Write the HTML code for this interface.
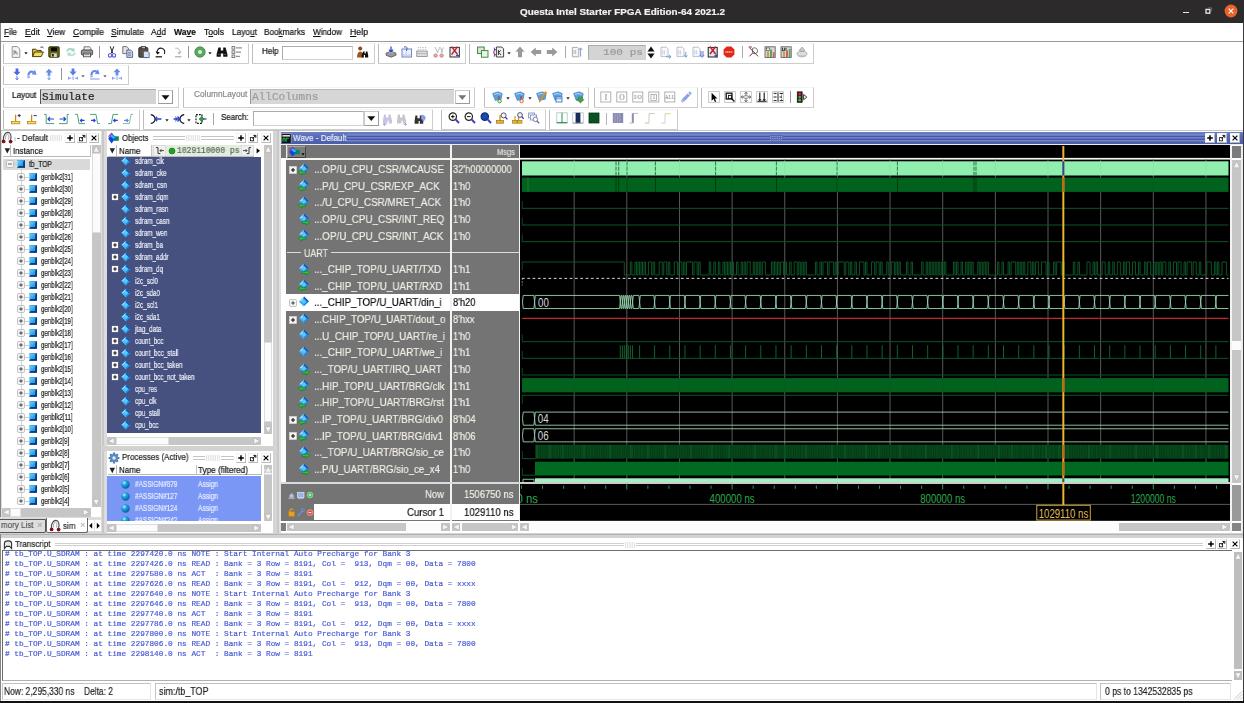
<!DOCTYPE html>
<html><head><meta charset="utf-8"><title>Questa Intel Starter FPGA Edition-64 2021.2</title>
<style>
html,body{margin:0;padding:0;background:#fff;}
#r{position:relative;width:1244px;height:703px;overflow:hidden;background:#fff;font-family:"Liberation Sans",sans-serif;}
#r div,#r svg,#r span.t{position:absolute;}
#r span.t{white-space:pre;transform-origin:0 50%;will-change:transform;-webkit-text-stroke:0.2px;}
u{text-decoration:underline;text-decoration-thickness:0.6px;text-underline-offset:1px;}
</style></head>
<body><div id="r">
<div style="left:0px;top:0px;width:1244px;height:703px;background:#ffffff;"></div>
<div style="left:0px;top:0px;width:1244px;height:22.5px;background:#2c2a2b;"></div>
<span class="t" style="left:519.50px;top:6.40px;font:bold 9.5px/11.40px 'Liberation Sans',sans-serif;color:#f2f2f2;transform:scaleX(1.0429);">Questa Intel Starter FPGA Edition-64 2021.2</span>
<div style="left:1182.5px;top:11.6px;width:6px;height:1.1px;background:#e8e8e8;"></div>
<svg style="left:1203px;top:5px;" width="12" height="12" viewBox="0 0 12 12"><rect x="3" y="4.400" width="3.800" height="3.800" fill="none" stroke="#e8e8e8" stroke-width="1.300"/><path d="M5 2.800h3.600v3.600" fill="none" stroke="#777" stroke-width="0.800"/></svg>
<svg style="left:1224px;top:4px;" width="14" height="14" viewBox="0 0 14 14"><circle cx="7" cy="7" r="6.4" fill="#e9632c"/><path d="M4.7 4.7l4.6 4.6M9.3 4.7l-4.6 4.6" stroke="#fff" stroke-width="1.1"/></svg>
<div style="left:1243.1px;top:22px;width:0.9px;height:681px;background:#3a3838;"></div>
<div style="left:0px;top:700.4px;width:1244px;height:2.6px;background:#111;"></div>
<span class="t" style="left:4.00px;top:26.84px;font:8.6px/10.32px 'Liberation Sans',sans-serif;color:#111;transform:scaleX(0.9381);"><u>F</u>ile</span>
<span class="t" style="left:25.00px;top:26.84px;font:8.6px/10.32px 'Liberation Sans',sans-serif;color:#111;transform:scaleX(1.0122);"><u>E</u>dit</span>
<span class="t" style="left:47.00px;top:26.84px;font:8.6px/10.32px 'Liberation Sans',sans-serif;color:#111;transform:scaleX(0.9737);"><u>V</u>iew</span>
<span class="t" style="left:73.00px;top:26.84px;font:8.6px/10.32px 'Liberation Sans',sans-serif;color:#111;transform:scaleX(0.9827);"><u>C</u>ompile</span>
<span class="t" style="left:111.00px;top:26.84px;font:8.6px/10.32px 'Liberation Sans',sans-serif;color:#111;transform:scaleX(0.9862);"><u>S</u>imulate</span>
<span class="t" style="left:151.00px;top:26.84px;font:8.6px/10.32px 'Liberation Sans',sans-serif;color:#111;transform:scaleX(0.9802);">A<u>d</u>d</span>
<span class="t" style="left:174.00px;top:26.84px;font:bold 8.6px/10.32px 'Liberation Sans',sans-serif;color:#111;transform:scaleX(0.9934);">Wa<u>v</u>e</span>
<span class="t" style="left:204.00px;top:26.84px;font:8.6px/10.32px 'Liberation Sans',sans-serif;color:#111;">T<u>o</u>ols</span>
<span class="t" style="left:232.00px;top:26.84px;font:8.6px/10.32px 'Liberation Sans',sans-serif;color:#111;transform:scaleX(0.9682);">Layo<u>u</u>t</span>
<span class="t" style="left:264.00px;top:26.84px;font:8.6px/10.32px 'Liberation Sans',sans-serif;color:#111;transform:scaleX(0.9532);">Boo<u>k</u>marks</span>
<span class="t" style="left:313.00px;top:26.84px;font:8.6px/10.32px 'Liberation Sans',sans-serif;color:#111;transform:scaleX(0.9481);"><u>W</u>indow</span>
<span class="t" style="left:350.00px;top:26.84px;font:8.6px/10.32px 'Liberation Sans',sans-serif;color:#111;transform:scaleX(1.0177);"><u>H</u>elp</span>
<div style="left:0px;top:41px;width:1243px;height:1px;background:#9a9a9a;"></div>
<div style="left:0px;top:22.5px;width:1.2px;height:678px;background:#8a8484;"></div>
<div style="left:3px;top:43px;width:245.6px;height:20.6px;background:#ffffff;box-sizing:border-box;border-right:1.4px solid #cdcdcd;border-bottom:1.6px solid #cdcdcd;border-top:1px solid #f4f4f4;"></div>
<div style="left:3.2px;top:44px;width:1px;height:18.6px;background:#bdbdbd;"></div>
<svg style="left:7.6px;top:44.0px;" width="16" height="16" viewBox="0 0 16 16"><path d="M4.2 2.6h5.2l2.4 2.4v8.4H4.2z" fill="#f4f4f4" stroke="#8a8a8a" stroke-width="0.9"/><path d="M6 6v5M6 8.2h3v2.8M7.4 6.6v3" stroke="#777" stroke-width="0.8" fill="none"/></svg>
<svg style="left:30.0px;top:44.0px;" width="16" height="16" viewBox="0 0 16 16"><path d="M2.6 12.6V5.2h3.2l1 1.2h4.4v1.6" fill="#d8c040" stroke="#3a3000" stroke-width="0.9"/><path d="M2.6 12.6l2-4.6h8.8l-2.2 4.6z" fill="#f0dc60" stroke="#3a3000" stroke-width="0.9"/><path d="M10.5 3.4c1.2-.8 2.4-.4 2.8.8" stroke="#222" stroke-width="0.9" fill="none"/></svg>
<svg style="left:46.0px;top:44.0px;" width="16" height="16" viewBox="0 0 16 16"><rect x="2.8" y="2.8" width="10.4" height="10.4" rx="0.8" fill="#6b6a14" stroke="#2a2a00" stroke-width="0.9"/><rect x="4.8" y="3.4" width="6.4" height="4" fill="#0a0a0a"/><rect x="5.2" y="9.4" width="5.6" height="3.6" fill="#d8d8c0"/><rect x="6" y="10" width="1.8" height="2.6" fill="#222"/></svg>
<svg style="left:62.5px;top:44.0px;" width="16" height="16" viewBox="0 0 16 16"><path d="M3.2 7.4c.6-3 4.2-4.2 6.8-2.6l1-1.4.8 4.2-4.2-.4 1.2-1.2c-1.6-.8-3.4-.2-4 1.6z" fill="#9fd4bc"/><path d="M12.8 8.8c-.6 3-4.2 4.2-6.8 2.6l-1 1.4-.8-4.2 4.2.4-1.2 1.2c1.6.8 3.4.2 4-1.6z" fill="#b4dccc"/></svg>
<svg style="left:78.5px;top:44.0px;" width="16" height="16" viewBox="0 0 16 16"><path d="M5 6V2.8h5.4L12 4.4V6" fill="#eee" stroke="#555" stroke-width="0.8"/><rect x="2.4" y="6" width="11.2" height="5" rx="1.2" fill="#9a9a9a" stroke="#3a3a3a" stroke-width="0.9"/><rect x="4.4" y="9.2" width="7.2" height="3.6" fill="#e8e8e8" stroke="#444" stroke-width="0.8"/><path d="M5.4 10.6h5" stroke="#666" stroke-width="0.7"/></svg>
<svg style="left:103.8px;top:44.0px;" width="16" height="16" viewBox="0 0 16 16"><path d="M6.2 2.4l2.6 7M9.8 2.4l-2.6 7" stroke="#222" stroke-width="1" fill="none"/><circle cx="6" cy="11.4" r="1.7" fill="none" stroke="#5a5ae0" stroke-width="1.1"/><circle cx="10" cy="11.4" r="1.7" fill="none" stroke="#5a5ae0" stroke-width="1.1"/></svg>
<svg style="left:119.6px;top:44.0px;" width="16" height="16" viewBox="0 0 16 16"><path d="M2.8 2.6h4l1.6 1.6v5.4H2.8z" fill="#e4e4e4" stroke="#555" stroke-width="0.8"/><path d="M6.8 6h4l1.8 1.8v5.6H6.8z" fill="#c8d4f4" stroke="#44507a" stroke-width="0.8"/><path d="M8 8.6h3M8 10h3M8 11.4h3" stroke="#667" stroke-width="0.6"/></svg>
<svg style="left:135.6px;top:44.0px;" width="16" height="16" viewBox="0 0 16 16"><rect x="2.8" y="3.6" width="9" height="9.6" rx="0.8" fill="#5a5040" stroke="#222" stroke-width="0.9"/><rect x="5.2" y="2.4" width="4.2" height="2.4" fill="#bbb" stroke="#222" stroke-width="0.7"/><path d="M7.4 7.2h4.2l1.6 1.6v4.8H7.4z" fill="#d8e0f8" stroke="#44507a" stroke-width="0.8"/></svg>
<svg style="left:152.8px;top:44.0px;" width="16" height="16" viewBox="0 0 16 16"><path d="M4.4 9.6C3 6 6 3.6 8.8 4.2c2.6.6 3.8 3.4 2.4 5.8" fill="none" stroke="#111" stroke-width="1.1"/><path d="M2.6 7.2l1.8 3.2 2.6-2z" fill="#111"/><path d="M2.6 12.8h6.4" stroke="#111" stroke-width="1.2"/></svg>
<svg style="left:168.4px;top:44.0px;" width="16" height="16" viewBox="0 0 16 16"><path d="M11.6 9.6C13 6 10 3.6 7.2 4.2" fill="none" stroke="#aaa" stroke-width="0.9"/><path d="M13.4 7.2l-1.8 3.2-2.6-2z" fill="#bbb"/><path d="M7 12.8h6.4" stroke="#999" stroke-width="1"/></svg>
<svg style="left:191.8px;top:44.0px;" width="16" height="16" viewBox="0 0 16 16"><circle cx="8" cy="8" r="5.2" fill="#5aa860" stroke="#3c8a48" stroke-width="0.8"/><circle cx="8" cy="8" r="2" fill="#d8f0d8"/></svg>
<svg style="left:213.8px;top:44.0px;" width="16" height="16" viewBox="0 0 16 16"><path d="M4.4 3.6h2.4v3h2.4v-3h2.4l1.8 6.6v2.6H9.2V9.6H6.8v3.2H2.6v-2.6z" fill="#111"/><path d="M4 10.4h1.6M10.4 10.4H12" stroke="#999" stroke-width="0.7"/></svg>
<svg style="left:229.0px;top:44.0px;" width="16" height="16" viewBox="0 0 16 16"><rect x="3" y="2.6" width="2.8" height="2.6" fill="#eee" stroke="#666" stroke-width="0.8"/><rect x="3" y="6.8" width="2.8" height="2.6" fill="#eee" stroke="#666" stroke-width="0.8"/><rect x="3" y="11" width="2.8" height="2.6" fill="#eee" stroke="#666" stroke-width="0.8"/><path d="M7 3.9h6M7 8.1h5M7 12.3h4" stroke="#666" stroke-width="0.9"/></svg>
<svg style="left:18.3px;top:45.0px;" width="16" height="16" viewBox="0 0 16 16"><path d="M6.3 7.2h3.4L8 9.4z" fill="#222"/></svg>
<svg style="left:202.0px;top:45.0px;" width="16" height="16" viewBox="0 0 16 16"><path d="M6.3 7.2h3.4L8 9.4z" fill="#222"/></svg>
<div style="left:99.0px;top:46.0px;width:1.2px;height:12px;background:#969696;"></div>
<div style="left:188.0px;top:46.0px;width:1.2px;height:12px;background:#969696;"></div>
<div style="left:252px;top:43px;width:122.5px;height:20.6px;background:#ffffff;box-sizing:border-box;border-right:1.4px solid #cdcdcd;border-bottom:1.6px solid #cdcdcd;border-top:1px solid #f4f4f4;"></div>
<div style="left:252.2px;top:44px;width:1px;height:18.6px;background:#bdbdbd;"></div>
<span class="t" style="left:261.50px;top:47.08px;font:8.2px/9.84px 'Liberation Sans',sans-serif;color:#111;transform:scaleX(0.9784);">Help</span>
<div style="left:281.5px;top:45.6px;width:71px;height:14px;background:#fff;box-sizing:border-box;border:1px solid #d0d0d0;border-top-color:#ababab;border-left-color:#ababab;"></div>
<svg style="left:354.0px;top:44.0px;" width="16" height="16" viewBox="0 0 16 16"><circle cx="6.2" cy="4.4" r="2" fill="#8a4a1a"/><path d="M3 13.4c0-4 1.4-6 3.2-6s3.2 2 3.2 6z" fill="#a0551c"/><path d="M9 7.4h1.6v2h1.2v-2h1.6l.8 4v2H11v-2.4H9.8v2.4H7.6v-2z" fill="#111"/></svg>
<div style="left:378px;top:43px;width:87.5px;height:20.6px;background:#ffffff;box-sizing:border-box;border-right:1.4px solid #cdcdcd;border-bottom:1.6px solid #cdcdcd;border-top:1px solid #f4f4f4;"></div>
<div style="left:378.2px;top:44px;width:1px;height:18.6px;background:#bdbdbd;"></div>
<svg style="left:382.8px;top:44.0px;" width="16" height="16" viewBox="0 0 16 16"><path d="M3 9.2l5-2 5 2-5 2z" fill="#bbb" stroke="#555" stroke-width="0.8"/><path d="M3 9.2v2l5 2 5-2v-2" fill="#999" stroke="#555" stroke-width="0.8"/><path d="M8 2.4v5M6 5.6l2 2.2 2-2.2" stroke="#2d4ac8" stroke-width="1.3" fill="none"/></svg>
<svg style="left:398.6px;top:44.0px;" width="16" height="16" viewBox="0 0 16 16"><rect x="3" y="5" width="9.6" height="8" fill="#eef2fc" stroke="#5a7ac8" stroke-width="0.9"/><path d="M5 3.2c1.6-1.2 3.4 0 3 1.6L7.4 7M7.2 8.6v.6" stroke="#3a5ac0" stroke-width="1" fill="none"/><path d="M3.4 11h9" stroke="#9ab" stroke-width="0.7"/></svg>
<svg style="left:414.4px;top:44.0px;" width="16" height="16" viewBox="0 0 16 16"><rect x="2.8" y="7" width="10.4" height="5.4" fill="#dcdce4" stroke="#888" stroke-width="0.8"/><path d="M4.4 3v3M6.8 3v3M9.2 3v3M11.6 3v3" stroke="#99a" stroke-width="0.8" stroke-dasharray="1 0.8"/><path d="M3 9.6h10" stroke="#aaa" stroke-width="0.7"/></svg>
<svg style="left:430.6px;top:44.0px;" width="16" height="16" viewBox="0 0 16 16"><path d="M4 3l3 6M9 3L6 9M9.4 3.4l2.4 5.4M12.4 3.4L10 8.8" stroke="#aaa" stroke-width="0.8"/><circle cx="4.6" cy="11.6" r="1.7" fill="#e8b0b0" stroke="#c06060" stroke-width="0.7"/><circle cx="10.6" cy="11.6" r="1.7" fill="#e8b0b0" stroke="#c06060" stroke-width="0.7"/></svg>
<svg style="left:446.6px;top:44.0px;" width="16" height="16" viewBox="0 0 16 16"><rect x="3" y="3.4" width="9.4" height="9.6" fill="#e8ecf8" stroke="#333" stroke-width="1"/><path d="M4.6 2.6l6 8M10.6 2.6l-6 8" stroke="#c02020" stroke-width="1.5"/><path d="M9 11.6h3.6" stroke="#3050c0" stroke-width="1.2"/></svg>
<div style="left:468.5px;top:43px;width:345.0px;height:20.6px;background:#ffffff;box-sizing:border-box;border-right:1.4px solid #cdcdcd;border-bottom:1.6px solid #cdcdcd;border-top:1px solid #f4f4f4;"></div>
<div style="left:468.7px;top:44px;width:1px;height:18.6px;background:#bdbdbd;"></div>
<svg style="left:475.0px;top:44.0px;" width="16" height="16" viewBox="0 0 16 16"><rect x="2.6" y="3" width="6.6" height="6.6" fill="#d4e8d4" stroke="#3a7a3a" stroke-width="0.9"/><rect x="6.4" y="6.6" width="6.6" height="6.6" fill="#e8f4e8" stroke="#3a7a3a" stroke-width="0.9"/></svg>
<svg style="left:491.0px;top:44.0px;" width="16" height="16" viewBox="0 0 16 16"><path d="M5.4 3h5.4l1.8 1.8V13H5.4z" fill="#f0f0f0" stroke="#333" stroke-width="0.9"/><path d="M7.4 6v5M7.4 8.4l2.4-2M7.8 8.4l2.2 2.6" stroke="#222" stroke-width="0.9"/><path d="M4 5.6c-1.6 1.6-1.6 3.6 0 5.2" stroke="#c02020" stroke-width="1.1" fill="none"/><path d="M3.2 3.6l.4 2.4 2-.8M3.2 12.8l.4-2.4 2 .8" stroke="#2040c0" stroke-width="0.9" fill="none"/></svg>
<svg style="left:512.0px;top:44.0px;" width="16" height="16" viewBox="0 0 16 16"><path d="M8 2.6l4.6 5.2H10v5.4H6V7.8H3.4z" fill="#9a9a9a"/></svg>
<svg style="left:528.0px;top:44.0px;" width="16" height="16" viewBox="0 0 16 16"><path d="M2.6 8l5.2-4.6V6h5.4v4H7.8v2.6z" fill="#9a9a9a"/></svg>
<svg style="left:544.0px;top:44.0px;" width="16" height="16" viewBox="0 0 16 16"><path d="M13.4 8L8.2 3.4V6H2.8v4h5.4v2.6z" fill="#9a9a9a"/></svg>
<svg style="left:569.0px;top:44.0px;" width="16" height="16" viewBox="0 0 16 16"><path d="M3.4 3.4h5l1.4 1.4v8H3.4z" fill="#f4f4f4" stroke="#999" stroke-width="0.8"/><path d="M5 6v4M6.6 6v4" stroke="#aaa" stroke-width="0.7"/><path d="M11.6 12.6V4M10 6l1.6-2.2L13.2 6" stroke="#8aa0d0" stroke-width="1" fill="none"/></svg>
<svg style="left:658.0px;top:44.0px;" width="16" height="16" viewBox="0 0 16 16"><path d="M3 3.2h5.4l1.6 1.6v7.6H3z" fill="#fafafc" stroke="#a8aec4" stroke-width="0.8"/><path d="M4.8 6v4.4M6.4 6.4v4" stroke="#b4bace" stroke-width="0.7"/><path d="M8 12.8h5M11 11l2 1.8-2 1.6" stroke="#6a8ad8" stroke-width="0.9" fill="none"/></svg>
<svg style="left:674.0px;top:44.0px;" width="16" height="16" viewBox="0 0 16 16"><path d="M3 3.2h5.4l1.6 1.6v7.6H3z" fill="#fafafc" stroke="#a8aec4" stroke-width="0.8"/><path d="M4.8 6v4.4M6.4 6.4v4" stroke="#b4bace" stroke-width="0.7"/><path d="M11.8 8v5M10.4 11.4l1.4 1.8 1.4-1.8" stroke="#6a8ad8" stroke-width="0.9" fill="none"/></svg>
<svg style="left:690.0px;top:44.0px;" width="16" height="16" viewBox="0 0 16 16"><path d="M3 3.2h5.4l1.6 1.6v7.6H3z" fill="#fafafc" stroke="#a8aec4" stroke-width="0.8"/><path d="M4.8 6v4.4M6.4 6.4v4" stroke="#b4bace" stroke-width="0.7"/><path d="M11 7v5.4M13 7v5.4M9.8 11l2.2 2.4 2.2-2.4" stroke="#4a6ad0" stroke-width="0.9" fill="none"/></svg>
<svg style="left:705.0px;top:44.0px;" width="16" height="16" viewBox="0 0 16 16"><rect x="3.2" y="3.4" width="9" height="9.6" fill="#e0e4f0" stroke="#222" stroke-width="1"/><path d="M5 2.6l5.6 7.4M10.6 2.6L5 10" stroke="#c02020" stroke-width="1.5"/><path d="M9.4 11.8h3.2M11 10.2v3.2" stroke="#2040c0" stroke-width="1"/></svg>
<svg style="left:720.5px;top:44.0px;" width="16" height="16" viewBox="0 0 16 16"><path d="M5.6 2.6h4.8l3 3v4.8l-3 3H5.6l-3-3V5.600z" fill="#e02818"/><path d="M4.4 8h7.2" stroke="#f8c8c0" stroke-width="1.6" stroke-dasharray="1.2 0.5"/></svg>
<svg style="left:746.0px;top:44.0px;" width="16" height="16" viewBox="0 0 16 16"><path d="M3.4 3.6l8.8 8.8M3.4 12.4l3.4-3.6" stroke="#7a2a2a" stroke-width="1" fill="none"/><path d="M6.6 4.4c2.6-1.6 5.6.6 4.8 3.400-.6 2-3.400 2.400-4.800 1z" fill="none" stroke="#555" stroke-width="0.9"/><path d="M2.8 3h3" stroke="#7a2a2a" stroke-width="1"/></svg>
<svg style="left:762.0px;top:44.0px;" width="16" height="16" viewBox="0 0 16 16"><rect x="3" y="2.8" width="10.200" height="10.600" fill="#d8d8d0" stroke="#555" stroke-width="0.8"/><rect x="4.4" y="4" width="3" height="2.6" fill="#fff" stroke="#333" stroke-width="0.6"/><rect x="5" y="7.4" width="2" height="5.6" fill="#c8a040"/><rect x="8" y="5.6" width="2" height="7.4" fill="#60a060"/><rect x="10.800" y="8.200" width="1.800" height="4.800" fill="#d06060"/></svg>
<svg style="left:778.0px;top:44.0px;" width="16" height="16" viewBox="0 0 16 16"><rect x="3" y="2.8" width="10.200" height="10.600" fill="#d8d8d0" stroke="#555" stroke-width="0.8"/><path d="M4.4 3.8v3h2v-3M8 3.800v3" stroke="#222" stroke-width="0.9" fill="none"/><rect x="5" y="8" width="2" height="5" fill="#c8a040"/><rect x="8" y="6.400" width="2" height="6.600" fill="#d06060"/><rect x="10.800" y="5" width="1.800" height="8" fill="#60a060"/></svg>
<svg style="left:793.5px;top:44.0px;" width="16" height="16" viewBox="0 0 16 16"><path d="M5 6.400l3-3.400 3 3.400H9.400v1.400H6.600V6.400z" fill="#c8c8c8" stroke="#999" stroke-width="0.6"/><ellipse cx="8" cy="9.800" rx="5" ry="2.400" fill="#dcdcdc" stroke="#999" stroke-width="0.7"/><path d="M4 11.400c1.400 2 6.600 2 8 0" stroke="#aaa" stroke-width="0.800" fill="none"/></svg>
<svg style="left:500.5px;top:45.0px;" width="16" height="16" viewBox="0 0 16 16"><path d="M6.3 7.2h3.4L8 9.4z" fill="#222"/></svg>
<div style="left:565.0px;top:46.0px;width:1.2px;height:12px;background:#a8a8a8;"></div>
<div style="left:742.0px;top:46.0px;width:1.2px;height:12px;background:#a8a8a8;"></div>
<div style="left:587.5px;top:45.4px;width:58px;height:14.4px;background:#d4d4d4;box-sizing:border-box;border:1px solid #d0d0d0;border-top-color:#ababab;border-left-color:#ababab;"></div>
<span class="t" style="left:603.00px;top:46.88px;font:9.2px/11.04px 'Liberation Mono',monospace;color:#9a9a9a;transform:scaleX(1.2076);">100 ps</span>
<svg style="left:645.5px;top:45px;" width="10" height="15" viewBox="0 0 10 15"><path d="M5 1.600l3.600 5H1.400z" fill="#111"/><path d="M5 13.600l3.600-5H1.400z" fill="#111"/><path d="M1 7.500h8" stroke="#fff" stroke-width="0.6"/></svg>
<div style="left:3px;top:65px;width:125.6px;height:20.400000000000006px;background:#ffffff;box-sizing:border-box;border-right:1.4px solid #cdcdcd;border-bottom:1.6px solid #cdcdcd;border-top:1px solid #f4f4f4;"></div>
<div style="left:3.2px;top:66px;width:1px;height:18.400000000000006px;background:#bdbdbd;"></div>
<svg style="left:9.0px;top:66.4px;" width="16" height="16" viewBox="0 0 16 16"><path d="M6.600 2.600h2.800v3.200h2.200L8 9.600 4.400 5.800h2.200z" fill="#4a6ae0"/><path d="M8 10v3.600M6.600 12.200l1.400 1.600 1.400-1.600" stroke="#4a6ae0" stroke-width="0.9" fill="none"/></svg>
<svg style="left:24.0px;top:66.4px;" width="16" height="16" viewBox="0 0 16 16"><path d="M3.400 9.600C3.400 5.600 7 3.400 10 5.200l1-1.400 1.600 5-5-.4 1.200-1.400C7 6 5.600 7.400 5.600 9.600z" fill="#6a8ae8"/><rect x="3.400" y="9.800" width="2.400" height="2.400" fill="#9ab0f0"/></svg>
<svg style="left:40.5px;top:66.4px;" width="16" height="16" viewBox="0 0 16 16"><path d="M6.600 9.800h2.800V6.600h2.200L8 2.800 4.400 6.600h2.200z" fill="#6a8ae8"/><path d="M8 10.200v3.400M6.600 12.200l1.400 1.600 1.400-1.600" stroke="#6a8ae8" stroke-width="0.9" fill="none"/></svg>
<svg style="left:65.0px;top:66.4px;" width="16" height="16" viewBox="0 0 16 16"><path d="M6.600 2.400h2.800v3.200h2.200L8 9.400 4.400 5.600h2.200z" fill="#5a7ae4"/><path d="M3.600 12.200h2.600M9.800 12.200h2.600M8 10.400v3.400M3.600 10.800v2.800M12.400 10.800v2.800" stroke="#7a96ec" stroke-width="1" fill="none"/></svg>
<svg style="left:87.0px;top:66.4px;" width="16" height="16" viewBox="0 0 16 16"><path d="M3.400 9C3.400 5 7 2.800 10 4.600l1-1.400 1.600 5-5-.4L8.800 6.400C7 5.400 5.600 6.800 5.600 9z" fill="#6a8ae8"/><rect x="3.400" y="9.200" width="2.400" height="2.200" fill="#9ab0f0"/><path d="M3 13h9.600" stroke="#7a96ec" stroke-width="1"/></svg>
<svg style="left:109.0px;top:66.4px;" width="16" height="16" viewBox="0 0 16 16"><path d="M6.600 9.400h2.800V6.200h2.200L8 2.400 4.400 6.200h2.200z" fill="#6a8ae8"/><path d="M3.600 12.200h2.600M9.800 12.200h2.600M8 10.400v3.400M3.600 10.800v2.800M12.400 10.800v2.800" stroke="#7a96ec" stroke-width="1" fill="none"/></svg>
<div style="left:60.5px;top:68.4px;width:1.2px;height:12px;background:#969696;"></div>
<svg style="left:74.5px;top:67.6px;" width="16" height="16" viewBox="0 0 16 16"><path d="M6.3 7.2h3.4L8 9.4z" fill="#666"/></svg>
<svg style="left:96.5px;top:67.6px;" width="16" height="16" viewBox="0 0 16 16"><path d="M6.3 7.2h3.4L8 9.4z" fill="#666"/></svg>
<div style="left:3px;top:87px;width:175.5px;height:20.599999999999994px;background:#ffffff;box-sizing:border-box;border-right:1.4px solid #cdcdcd;border-bottom:1.6px solid #cdcdcd;border-top:1px solid #f4f4f4;"></div>
<div style="left:3.2px;top:88px;width:1px;height:18.599999999999994px;background:#bdbdbd;"></div>
<span class="t" style="left:12.00px;top:89.76px;font:8.4px/10.08px 'Liberation Sans',sans-serif;color:#111;transform:scaleX(0.9714);">Layout</span>
<div style="left:40px;top:89.4px;width:115.5px;height:15px;background:#d4d4d4;box-sizing:border-box;border-left:1px solid #555;border-top:1px solid #aaa;"></div>
<span class="t" style="left:42.00px;top:90.96px;font:10.4px/12.48px 'Liberation Mono',monospace;color:#222;transform:scaleX(1.0515);">Simulate</span>
<div style="left:157.5px;top:89.6px;width:15px;height:14.6px;background:#fff;box-sizing:border-box;border:1px solid #c8c8c8;border-bottom-color:#9a9a9a;border-right-color:#9a9a9a;"></div>
<svg style="left:157.5px;top:89.6px;" width="15" height="14.6" viewBox="0 0 15 14.6"><path d="M3.5 5.3h8l-4 4.600z" fill="#111"/></svg>
<div style="left:183px;top:87px;width:291.5px;height:20.599999999999994px;background:#ffffff;box-sizing:border-box;border-right:1.4px solid #cdcdcd;border-bottom:1.6px solid #cdcdcd;border-top:1px solid #f4f4f4;"></div>
<div style="left:183.2px;top:88px;width:1px;height:18.599999999999994px;background:#bdbdbd;"></div>
<span class="t" style="left:194.00px;top:89.88px;font:8.2px/9.84px 'Liberation Sans',sans-serif;color:#8a8a8a;transform:scaleX(1.0118);">ColumnLayout</span>
<div style="left:250px;top:89.4px;width:203.5px;height:15px;background:#d6d6d6;box-sizing:border-box;border-left:1px solid #999;border-top:1px solid #bbb;"></div>
<span class="t" style="left:251.50px;top:90.96px;font:10.4px/12.48px 'Liberation Mono',monospace;color:#9c9c9c;transform:scaleX(1.0656);">AllColumns</span>
<div style="left:455px;top:89.6px;width:14.5px;height:14.6px;background:#fff;box-sizing:border-box;border:1px solid #c8c8c8;border-bottom-color:#9a9a9a;border-right-color:#9a9a9a;"></div>
<svg style="left:455px;top:89.6px;" width="14.5" height="14.6" viewBox="0 0 14.5 14.6"><path d="M3.25 5.3h8l-4 4.600z" fill="#777"/></svg>
<div style="left:484px;top:87px;width:105px;height:20.599999999999994px;background:#ffffff;box-sizing:border-box;border-right:1.4px solid #cdcdcd;border-bottom:1.6px solid #cdcdcd;border-top:1px solid #f4f4f4;"></div>
<div style="left:484.2px;top:88px;width:1px;height:18.599999999999994px;background:#bdbdbd;"></div>
<svg style="left:489.5px;top:88.5px;" width="16" height="16" viewBox="0 0 16 16"><path d="M2.600 4.400l5.600-1.600 4 1.800-1 5.600-6 1.200z" fill="#5aa0e0" stroke="#3a78c0" stroke-width="0.6"/><path d="M4 5.400l4-1 2.800 1.200" stroke="#b8dcf8" stroke-width="0.9" fill="none"/><path d="M9 7v4" stroke="#c03020" stroke-width="1.1"/><circle cx="9.600" cy="12.200" r="1.700" fill="#e8f8e8" stroke="#3a9a3a" stroke-width="1"/></svg>
<svg style="left:511.5px;top:88.5px;" width="16" height="16" viewBox="0 0 16 16"><path d="M2.600 4.400l5.600-1.600 4 1.800-1 5.600-6 1.200z" fill="#5aa0e0" stroke="#3a78c0" stroke-width="0.6"/><path d="M4 5.400l4-1 2.800 1.200" stroke="#b8dcf8" stroke-width="0.9" fill="none"/><path d="M9 7v4" stroke="#c03020" stroke-width="1.1"/><circle cx="9.600" cy="12.200" r="1.700" fill="#fce8d8" stroke="#e07030" stroke-width="1"/></svg>
<svg style="left:534.0px;top:88.5px;" width="16" height="16" viewBox="0 0 16 16"><path d="M2.600 4.400l5.600-1.600 4 1.800-1 5.600-6 1.200z" fill="#5aa0e0" stroke="#3a78c0" stroke-width="0.6"/><path d="M4 5.400l4-1 2.800 1.200" stroke="#b8dcf8" stroke-width="0.9" fill="none"/><path d="M12.600 3.400L7 11.600l-1.600 1.600.4-2.400L11.400 2.600z" fill="#f0a830" stroke="#b87010" stroke-width="0.6"/></svg>
<svg style="left:550.0px;top:88.5px;" width="16" height="16" viewBox="0 0 16 16"><path d="M2.600 4.400l5.600-1.600 4 1.800-1 5.600-6 1.200z" fill="#5aa0e0" stroke="#3a78c0" stroke-width="0.6"/><path d="M4 5.400l4-1 2.800 1.200" stroke="#b8dcf8" stroke-width="0.9" fill="none"/><rect x="6" y="8" width="6" height="5" fill="#f4f8fc" stroke="#3a78c0" stroke-width="0.9"/><path d="M6 9.800h6" stroke="#3a78c0" stroke-width="0.8"/></svg>
<svg style="left:571.0px;top:88.5px;" width="16" height="16" viewBox="0 0 16 16"><path d="M2.600 4.400l5.600-1.600 4 1.800-1 5.600-6 1.200z" fill="#5aa0e0" stroke="#3a78c0" stroke-width="0.6"/><path d="M4 5.400l4-1 2.800 1.200" stroke="#b8dcf8" stroke-width="0.9" fill="none"/><path d="M7.400 8h4v2.400h1.800L9.400 14 5.600 10.400h1.800z" fill="#48a048" stroke="#2a7a2a" stroke-width="0.5"/></svg>
<svg style="left:500.0px;top:90.0px;" width="16" height="16" viewBox="0 0 16 16"><path d="M6.3 7.2h3.4L8 9.4z" fill="#222"/></svg>
<svg style="left:522.0px;top:90.0px;" width="16" height="16" viewBox="0 0 16 16"><path d="M6.3 7.2h3.4L8 9.4z" fill="#222"/></svg>
<svg style="left:559.5px;top:90.0px;" width="16" height="16" viewBox="0 0 16 16"><path d="M6.3 7.2h3.4L8 9.4z" fill="#222"/></svg>
<div style="left:594px;top:87px;width:103.5px;height:20.599999999999994px;background:#ffffff;box-sizing:border-box;border-right:1.4px solid #cdcdcd;border-bottom:1.6px solid #cdcdcd;border-top:1px solid #f4f4f4;"></div>
<div style="left:594.2px;top:88px;width:1px;height:18.599999999999994px;background:#bdbdbd;"></div>
<svg style="left:597.5px;top:88.5px;" width="16" height="16" viewBox="0 0 16 16"><rect x="2.800" y="3" width="10" height="10" fill="#fff" stroke="#a8a8a8" stroke-width="0.9"/><text x="7.800" y="10.72" font-family="Liberation Serif,serif" font-size="8" fill="#7c7c7c" text-anchor="middle">I</text></svg>
<svg style="left:613.5px;top:88.5px;" width="16" height="16" viewBox="0 0 16 16"><rect x="2.800" y="3" width="10" height="10" fill="#fff" stroke="#a8a8a8" stroke-width="0.9"/><text x="7.800" y="10.52" font-family="Liberation Serif,serif" font-size="7.4" fill="#7c7c7c" text-anchor="middle">O</text></svg>
<svg style="left:629.5px;top:88.5px;" width="16" height="16" viewBox="0 0 16 16"><rect x="2.800" y="3" width="10" height="10" fill="#fff" stroke="#a8a8a8" stroke-width="0.9"/><text x="7.800" y="9.97" font-family="Liberation Serif,serif" font-size="5.8" fill="#7c7c7c" text-anchor="middle">I/O</text></svg>
<svg style="left:645.5px;top:88.5px;" width="16" height="16" viewBox="0 0 16 16"><rect x="2.800" y="3" width="10" height="10" fill="#fff" stroke="#a8a8a8" stroke-width="0.9"/><rect x="5" y="5.400" width="5.600" height="6" fill="none" stroke="#999" stroke-width="0.7"/><text x="7.800" y="10.400" font-family="Liberation Serif,serif" font-size="6.400" fill="#7c7c7c" text-anchor="middle">1</text></svg>
<svg style="left:661.5px;top:88.5px;" width="16" height="16" viewBox="0 0 16 16"><rect x="2.800" y="3" width="10" height="10" fill="#fff" stroke="#a8a8a8" stroke-width="0.9"/><text x="7.800" y="9.77" font-family="Liberation Serif,serif" font-size="5.2" fill="#7c7c7c" text-anchor="middle">ALL</text></svg>
<svg style="left:678.0px;top:88.5px;" width="16" height="16" viewBox="0 0 16 16"><path d="M11.800 2.800l1.600 1.600-6.400 7-2.600 1.800-1.200-1 1.800-2.800z" fill="#8aa4e8" stroke="#6a84d0" stroke-width="0.5"/><path d="M10 4l2 2" stroke="#dde6fa" stroke-width="1.100"/><circle cx="4.400" cy="12" r="1.300" fill="#b8c8f0"/></svg>
<div style="left:701px;top:87px;width:113px;height:20.599999999999994px;background:#ffffff;box-sizing:border-box;border-right:1.4px solid #cdcdcd;border-bottom:1.6px solid #cdcdcd;border-top:1px solid #f4f4f4;"></div>
<div style="left:701.2px;top:88px;width:1px;height:18.599999999999994px;background:#bdbdbd;"></div>
<svg style="left:705.5px;top:88.5px;" width="16" height="16" viewBox="0 0 16 16"><rect x="2.600" y="2.600" width="10.800" height="10.800" fill="#fff" stroke="#c4c4c4" stroke-width="0.9"/><path d="M5.600 3.800v8l2-1.800 1.400 3 1.200-.6-1.400-2.800h2.600z" fill="#000"/></svg>
<svg style="left:722.0px;top:88.5px;" width="16" height="16" viewBox="0 0 16 16"><rect x="2.600" y="2.600" width="10.800" height="10.800" fill="#fff" stroke="#c4c4c4" stroke-width="0.9"/><rect x="4.200" y="4.200" width="5.800" height="5.800" fill="none" stroke="#111" stroke-width="1.300"/><rect x="6.400" y="6.400" width="3" height="3" fill="none" stroke="#111" stroke-width="0.9"/><path d="M9.600 9.600l2.800 2.800" stroke="#111" stroke-width="1.400"/></svg>
<svg style="left:738.0px;top:88.5px;" width="16" height="16" viewBox="0 0 16 16"><rect x="2.600" y="2.600" width="10.800" height="10.800" fill="#fff" stroke="#c4c4c4" stroke-width="0.9"/><path d="M8 3.400v9.200M3.400 8h9.200" stroke="#555" stroke-width="0.9"/><path d="M6.600 4.800L8 3.200l1.400 1.600M6.600 11.200L8 12.800l1.400-1.600M4.800 6.600L3.200 8l1.600 1.400M11.200 6.600L12.800 8l-1.600 1.400" stroke="#555" stroke-width="0.9" fill="none"/><ellipse cx="8" cy="8" rx="2.600" ry="1.600" fill="#ddd" stroke="#777" stroke-width="0.6"/></svg>
<svg style="left:754.0px;top:88.5px;" width="16" height="16" viewBox="0 0 16 16"><rect x="2.600" y="2.600" width="10.800" height="10.800" fill="#fff" stroke="#c4c4c4" stroke-width="0.9"/><path d="M5.800 3.400v8M10.200 3.400v8M3.400 12.200h9.200" stroke="#111" stroke-width="1.100"/><path d="M4.600 10l1.200 1.800L7 10M9 10l1.200 1.800 1.200-1.800" stroke="#111" stroke-width="0.8" fill="none"/></svg>
<svg style="left:770.0px;top:88.5px;" width="16" height="16" viewBox="0 0 16 16"><rect x="2.600" y="2.600" width="10.800" height="10.800" fill="#fff" stroke="#c4c4c4" stroke-width="0.9"/><path d="M3.600 4.400h3M3.600 8h3M3.600 11.600h3M8 3.400v9.400M9.600 4.400h3.400M9.600 8h2.400M9.600 11.600h3.400" stroke="#222" stroke-width="1"/><path d="M11.600 4.400v7.200" stroke="#222" stroke-width="0.8" stroke-dasharray="1 1"/></svg>
<svg style="left:794.0px;top:88.5px;" width="16" height="16" viewBox="0 0 16 16"><rect x="3.200" y="2.800" width="5" height="10.600" fill="#222" stroke="#111" stroke-width="0.6"/><circle cx="5.700" cy="5" r="1.400" fill="#e02020"/><circle cx="5.700" cy="8.100" r="1.300" fill="#886"/><circle cx="5.700" cy="11.200" r="1.400" fill="#30c030"/><path d="M9.600 5.400l3.200 2.700-3.200 2.700z" fill="none" stroke="#222" stroke-width="0.9"/></svg>
<div style="left:790.0px;top:90.5px;width:1.2px;height:12px;background:#969696;"></div>
<div style="left:3px;top:108.6px;width:137.3px;height:21.0px;background:#ffffff;box-sizing:border-box;border-right:1.4px solid #cdcdcd;border-bottom:1.6px solid #cdcdcd;border-top:1px solid #f4f4f4;"></div>
<div style="left:3.2px;top:109.6px;width:1px;height:19.0px;background:#bdbdbd;"></div>
<svg style="left:8.0px;top:110.5px;" width="16" height="16" viewBox="0 0 16 16"><path d="M7.600 3.600v7" stroke="#c89010" stroke-width="1.300"/><rect x="3.400" y="10.400" width="8.400" height="2.400" fill="#f4d878" stroke="#c08a10" stroke-width="0.800"/><path d="M9.600 4.600h3.200M11.200 3v3.200" stroke="#222" stroke-width="0.9"/></svg>
<svg style="left:23.5px;top:110.5px;" width="16" height="16" viewBox="0 0 16 16"><path d="M7.600 3.600v7" stroke="#c89010" stroke-width="1.300"/><rect x="3.400" y="10.400" width="8.400" height="2.400" fill="#f4d878" stroke="#c08a10" stroke-width="0.800"/><path d="M9.600 4.600h3.200" stroke="#222" stroke-width="0.9"/></svg>
<svg style="left:40.5px;top:110.5px;" width="16" height="16" viewBox="0 0 16 16"><path d="M3 3.400h2.200v9.200h8" stroke="#3a9a6a" stroke-width="0.9" fill="none"/><path d="M13 8H7M9 6L7 8l2 2" stroke="#2a40d0" stroke-width="1.100" fill="none"/></svg>
<svg style="left:55.5px;top:110.5px;" width="16" height="16" viewBox="0 0 16 16"><path d="M3 12.600h8.200V3.400H13" stroke="#3a9a6a" stroke-width="0.9" fill="none"/><path d="M3.600 8h6M7.600 6l2 2-2 2" stroke="#2a40d0" stroke-width="1.100" fill="none"/></svg>
<svg style="left:72.0px;top:110.5px;" width="16" height="16" viewBox="0 0 16 16"><path d="M3 3.400h2.400l1.600 9.200h6" stroke="#3a9a6a" stroke-width="0.9" fill="none"/><path d="M12.600 9.400H8.400M10 7.800L8.400 9.400 10 11" stroke="#2a40d0" stroke-width="1.100" fill="none"/></svg>
<svg style="left:87.0px;top:110.5px;" width="16" height="16" viewBox="0 0 16 16"><path d="M3 3.400h6l1.600 9.200h2.400" stroke="#3a9a6a" stroke-width="0.9" fill="none"/><path d="M4 9.400h4.200M6.600 7.800l1.600 1.600L6.600 11" stroke="#2a40d0" stroke-width="1.100" fill="none"/></svg>
<svg style="left:104.5px;top:110.5px;" width="16" height="16" viewBox="0 0 16 16"><path d="M3 12.600h3.400L8 3.400h5" stroke="#3a9a6a" stroke-width="0.9" fill="none"/><path d="M12.800 9.400H8.600M10.200 7.800L8.600 9.400l1.600 1.600" stroke="#2a40d0" stroke-width="1.100" fill="none"/></svg>
<svg style="left:119.5px;top:110.5px;" width="16" height="16" viewBox="0 0 16 16"><path d="M3 12.600h6.400L11 3.400h2" stroke="#3a9a6a" stroke-width="0.9" fill="none" opacity="0.7"/><path d="M4 9.400h4.200M6.600 7.800l1.600 1.600L6.600 11" stroke="#6a80e0" stroke-width="1.100" fill="none"/></svg>
<div style="left:143px;top:108.6px;width:289.5px;height:21.0px;background:#ffffff;box-sizing:border-box;border-right:1.4px solid #cdcdcd;border-bottom:1.6px solid #cdcdcd;border-top:1px solid #f4f4f4;"></div>
<div style="left:143.2px;top:109.6px;width:1px;height:19.0px;background:#bdbdbd;"></div>
<svg style="left:148.0px;top:110.5px;" width="16" height="16" viewBox="0 0 16 16"><path d="M2.800 3.600c3 .4 4 2 4.400 4.400-.4 2.400-1.400 4-4.400 4.400" fill="none" stroke="#111" stroke-width="1.200"/><path d="M13.400 8H7M9.200 5.800L7 8l2.200 2.200" stroke="#2a40d0" stroke-width="1.300" fill="none"/></svg>
<svg style="left:158.5px;top:111.5px;" width="16" height="16" viewBox="0 0 16 16"><path d="M6.3 7.2h3.4L8 9.4z" fill="#222"/></svg>
<svg style="left:171.0px;top:110.5px;" width="16" height="16" viewBox="0 0 16 16"><path d="M13.200 3.600c-3 .4-4 2-4.400 4.400.4 2.400 1.400 4 4.400 4.400" fill="none" stroke="#111" stroke-width="1.200"/><path d="M2.600 8H9M6.800 5.800L9 8l-2.200 2.200" stroke="#2a40d0" stroke-width="1.300" fill="none"/><path d="M4.400 5.400l2 5.200M6.400 5.400l-2 5.200" stroke="#2a40d0" stroke-width="0.7"/></svg>
<svg style="left:180.5px;top:111.5px;" width="16" height="16" viewBox="0 0 16 16"><path d="M6.3 7.2h3.4L8 9.4z" fill="#222"/></svg>
<svg style="left:192.5px;top:110.5px;" width="16" height="16" viewBox="0 0 16 16"><rect x="3" y="3.600" width="6" height="8.800" fill="none" stroke="#111" stroke-width="1.200" stroke-dasharray="1.800 1.200"/><path d="M10 8h3.600" stroke="#2a40d0" stroke-width="1.200" fill="none"/><path d="M8.600 5.400L11.200 8l-2.600 2.600L6 8z" fill="#30a040" stroke="#0a5a1a" stroke-width="0.500"/></svg>
<div style="left:213.0px;top:112.5px;width:1.2px;height:12px;background:#a8a8a8;"></div>
<span class="t" style="left:221.00px;top:111.76px;font:8.4px/10.08px 'Liberation Sans',sans-serif;color:#111;transform:scaleX(0.9499);">Search:</span>
<div style="left:253px;top:110.8px;width:110.5px;height:15px;background:#fff;box-sizing:border-box;border:1px solid #d0d0d0;border-top-color:#ababab;border-left-color:#ababab;"></div>
<div style="left:364px;top:111px;width:14.5px;height:14.6px;background:#fff;box-sizing:border-box;border:1px solid #c8c8c8;border-bottom-color:#9a9a9a;border-right-color:#9a9a9a;"></div>
<svg style="left:364px;top:111px;" width="14.5" height="14.6" viewBox="0 0 14.5 14.6"><path d="M3.25 5.3h8l-4 4.600z" fill="#111"/></svg>
<svg style="left:380.0px;top:110.5px;" width="16" height="16" viewBox="0 0 16 16"><path d="M4 3.600h2v3h2.400v-3h2l1.600 6v3H8.800V9.800H7.400v2.800H3v-3z" fill="#c8c4e2"/><path d="M3.400 13.400h3M5 12l-1.600 1.400L5 14.800" stroke="#9a90d8" stroke-width="0.8" fill="none"/></svg>
<svg style="left:394.3px;top:110.5px;" width="16" height="16" viewBox="0 0 16 16"><path d="M4 3.600h2v3h2.400v-3h2l1.600 6v3H8.800V9.800H7.400v2.800H3v-3z" fill="#c6c6ce"/><path d="M9.600 13.400h3M11 12l1.600 1.400L11 14.800" stroke="#9a90d8" stroke-width="0.8" fill="none"/></svg>
<svg style="left:412.0px;top:110.5px;" width="16" height="16" viewBox="0 0 16 16"><path d="M3.400 4.600h2v2.600h2.400V4.600h2l1.400 5.400v2.800H7.800V10H6.600v2.800H2.600V10z" fill="#333"/><path d="M9.400 4.400c2.400-.8 4.200.8 3.800 3l-1.800 3.200-2.400-3.400" fill="#8aa0e8" stroke="#6a80d0" stroke-width="0.5"/></svg>
<div style="left:441px;top:108.6px;width:104.5px;height:21.0px;background:#ffffff;box-sizing:border-box;border-right:1.4px solid #cdcdcd;border-bottom:1.6px solid #cdcdcd;border-top:1px solid #f4f4f4;"></div>
<div style="left:441.2px;top:109.6px;width:1px;height:19.0px;background:#bdbdbd;"></div>
<svg style="left:446.0px;top:110.0px;" width="16" height="16" viewBox="0 0 16 16"><circle cx="6.800" cy="6.600" r="3.700" fill="#fff" stroke="#222" stroke-width="1.200"/><path d="M9.600 9.400l3.400 3.600" stroke="#3a3ac8" stroke-width="1.900"/><path d="M5 6.600h3.600M6.800 4.800v3.600" stroke="#111" stroke-width="1"/></svg>
<svg style="left:462.0px;top:110.0px;" width="16" height="16" viewBox="0 0 16 16"><circle cx="6.800" cy="6.600" r="3.700" fill="#fff" stroke="#222" stroke-width="1.200"/><path d="M9.600 9.400l3.400 3.600" stroke="#3a3ac8" stroke-width="1.900"/><path d="M5 6.600h3.600" stroke="#111" stroke-width="1"/></svg>
<svg style="left:478.0px;top:110.0px;" width="16" height="16" viewBox="0 0 16 16"><circle cx="6.800" cy="6.600" r="3.700" fill="#1a4ab0" stroke="#0a2a80" stroke-width="1.200"/><path d="M9.600 9.400l3.400 3.600" stroke="#3a3ac8" stroke-width="1.900"/></svg>
<svg style="left:494.0px;top:110.0px;" width="16" height="16" viewBox="0 0 16 16"><path d="M6 5v6" stroke="#c89010" stroke-width="1.300"/><rect x="2.600" y="10.600" width="7" height="2.600" fill="#e8b830" stroke="#a07008" stroke-width="0.7"/><circle cx="9.600" cy="5.400" r="2.500" fill="#f4f4ff" stroke="#445" stroke-width="0.9"/><path d="M11.400 7.200l2 2.200" stroke="#3a3ac8" stroke-width="1.400"/></svg>
<svg style="left:510.0px;top:110.0px;" width="16" height="16" viewBox="0 0 16 16"><path d="M5 6v5M8.600 6v5" stroke="#c89010" stroke-width="1.100"/><rect x="2.400" y="10.600" width="4.600" height="2.600" fill="#e8b830" stroke="#a07008" stroke-width="0.6"/><rect x="7.400" y="10.600" width="4.600" height="2.600" fill="#e8b830" stroke="#a07008" stroke-width="0.6"/><circle cx="10" cy="5" r="2.400" fill="#f4f4ff" stroke="#445" stroke-width="0.9"/><path d="M11.800 6.800l1.800 2" stroke="#3a3ac8" stroke-width="1.300"/></svg>
<svg style="left:526.0px;top:110.0px;" width="16" height="16" viewBox="0 0 16 16"><rect x="2.600" y="3" width="6" height="5" fill="#eef" stroke="#7a8ac0" stroke-width="0.8"/><rect x="4.600" y="5" width="6" height="5" fill="#f4f4ff" stroke="#7a8ac0" stroke-width="0.8"/><circle cx="9.400" cy="9.400" r="2.200" fill="#fff" stroke="#667" stroke-width="0.8"/><path d="M11 11l2.200 2.400" stroke="#5a5ad0" stroke-width="1.300"/></svg>
<div style="left:549px;top:108.6px;width:128.5px;height:21.0px;background:#ffffff;box-sizing:border-box;border-right:1.4px solid #cdcdcd;border-bottom:1.6px solid #cdcdcd;border-top:1px solid #f4f4f4;"></div>
<div style="left:549.2px;top:109.6px;width:1px;height:19.0px;background:#bdbdbd;"></div>
<svg style="left:554.0px;top:110.0px;" width="16" height="16" viewBox="0 0 16 16"><rect x="2.800" y="2.800" width="10.400" height="10.400" fill="#fff" stroke="#9ac0b0" stroke-width="0.7"/><path d="M8 2.800v10.400" stroke="#2a8a5a" stroke-width="1"/><path d="M2.800 12.600h10.400" stroke="#2a8a5a" stroke-width="1"/></svg>
<svg style="left:570.0px;top:110.0px;" width="16" height="16" viewBox="0 0 16 16"><rect x="2.800" y="2.800" width="10.400" height="10.400" fill="#fff" stroke="#aab" stroke-width="0.6"/><rect x="5.600" y="2.800" width="4.800" height="10.400" fill="#1a2a5a"/><path d="M2.800 13h10.400" stroke="#88a" stroke-width="0.8"/></svg>
<svg style="left:586.0px;top:110.0px;" width="16" height="16" viewBox="0 0 16 16"><rect x="3" y="3" width="10" height="10" fill="#0a5020" stroke="#063814" stroke-width="0.8"/></svg>
<svg style="left:610.0px;top:110.0px;" width="16" height="16" viewBox="0 0 16 16"><rect x="2.800" y="3" width="10.400" height="10" fill="#8a8ab0"/><path d="M5 3v10M7.400 3v10M9.800 3v10" stroke="#a4a4c8" stroke-width="0.8"/></svg>
<svg style="left:626.0px;top:110.0px;" width="16" height="16" viewBox="0 0 16 16"><path d="M3.600 13h3V3.400h5.600" stroke="#b0bcc8" stroke-width="0.9" fill="none"/><rect x="5.800" y="3.400" width="2" height="9.600" fill="#8890ac"/><path d="M3.600 13h3" stroke="#e0e090" stroke-width="1"/></svg>
<svg style="left:642.0px;top:110.0px;" width="16" height="16" viewBox="0 0 16 16"><path d="M3 13h4V3.600h5.600" stroke="#b8ccc0" stroke-width="0.9" fill="none"/><path d="M3 13h4" stroke="#dcdc98" stroke-width="0.9"/></svg>
<svg style="left:658.0px;top:110.0px;" width="16" height="16" viewBox="0 0 16 16"><path d="M3 13h4V3.600h5.600" stroke="#c4d4c4" stroke-width="0.9" fill="none"/><path d="M7 3.600h5.600" stroke="#e4e480" stroke-width="0.9"/></svg>
<div style="left:606.0px;top:112.5px;width:1.2px;height:12px;background:#b4b4b4;"></div>
<div style="left:1.2px;top:129.8px;width:1241.5px;height:404px;background:#dcdcdc;"></div>
<div style="left:102px;top:131px;width:2px;height:402px;background:#c8c8c8;"></div>
<div style="left:1.2px;top:129.6px;width:1241.5px;height:1.4px;background:#c6c6c6;"></div>
<div style="left:273px;top:131px;width:3.5px;height:402px;background:#d4d4d4;"></div>
<div style="left:101px;top:445.6px;width:172px;height:5.4px;background:#d2d2d2;"></div>
<div style="left:1.5px;top:131px;width:99.5px;height:402px;background:#fff;"></div>
<svg style="left:1px;top:131.1px;" width="12" height="13" viewBox="0 0 12 13"><path d="M2.400 9C2 4.400 4.600 1.200 7 1.400s3.800 3.200 2.600 7.600" fill="none" stroke="#4a4a4a" stroke-width="1.100"/><path d="M4.400 8.400C4.200 4.600 5.600 3 6.600 3.200s1.800 1.800 1 5.400" fill="none" stroke="#9a9aa4" stroke-width="0.900"/><circle cx="2.600" cy="10.400" r="1.900" fill="#7a1220"/><circle cx="9.600" cy="10.600" r="1.900" fill="#7a1220"/></svg>
<span class="t" style="left:17.00px;top:132.52px;font:8.8px/10.56px 'Liberation Sans',sans-serif;color:#222;transform:scaleX(0.9321);">- Default</span>
<div style="left:14px;top:137px;width:1.5px;height:4px;background:#cfe4ea;"></div>
<svg style="left:50px;top:134.5px;" width="12" height="6" viewBox="0 0 12 6"><path d="M0 1h12M0 3h12M0 5h12" stroke="#c0c0c8" stroke-width="0.9" stroke-dasharray="1.200 1"/></svg>
<div style="left:64.5px;top:132.5px;width:10px;height:10px;background:#fff;box-sizing:border-box;border:1px solid #f2f2f2;border-right-color:#b8b8b8;border-bottom-color:#b8b8b8;"></div>
<svg style="left:64.5px;top:132.5px;" width="10" height="10" viewBox="0 0 10 10"><path d="M5 2.200v5.600M2.200 5h5.600" stroke="#000" stroke-width="1.500"/></svg>
<div style="left:76.5px;top:132.5px;width:10px;height:10px;background:#fff;box-sizing:border-box;border:1px solid #f2f2f2;border-right-color:#b8b8b8;border-bottom-color:#b8b8b8;"></div>
<svg style="left:76.5px;top:132.5px;" width="10" height="10" viewBox="0 0 10 10"><rect x="2.400" y="4.600" width="3.200" height="3.200" fill="none" stroke="#222" stroke-width="0.9"/><path d="M4.600 5.600l3-3M5.400 2.400h2.400v2.400" stroke="#111" stroke-width="1" fill="none"/></svg>
<div style="left:89px;top:132.5px;width:10px;height:10px;background:#fff;box-sizing:border-box;border:1px solid #f2f2f2;border-right-color:#b8b8b8;border-bottom-color:#b8b8b8;"></div>
<svg style="left:89px;top:132.5px;" width="10" height="10" viewBox="0 0 10 10"><path d="M2.600 2.600l4.800 4.800M7.400 2.600l-4.800 4.800" stroke="#000" stroke-width="1.200"/></svg>
<div style="left:2.5px;top:145px;width:8.5px;height:11.5px;background:#fff;box-sizing:border-box;border-right:1px solid #bbb;border-bottom:1px solid #bbb;"></div>
<svg style="left:2.5px;top:145px;" width="8.5" height="11.5" viewBox="0 0 8.5 11.5"><path d="M1.600 3.15h5.400L4.300 8.55z" fill="#222"/></svg>
<div style="left:11px;top:145px;width:79.5px;height:11.5px;background:#fff;box-sizing:border-box;border-bottom:1px solid #b8b8b8;border-right:1px solid #c4c4c4;"></div>
<span class="t" style="left:13.00px;top:145.31px;font:9.4px/11.28px 'Liberation Sans',sans-serif;color:#111;transform:scaleX(0.8442);">Instance</span>
<div style="left:2px;top:157px;width:88.5px;height:350px;background:#fff;"></div>
<div style="left:2.5px;top:158.6px;width:87.5px;height:11.6px;background:#d9d9d9;"></div>
<div style="left:20.8px;top:170px;width:0.8px;height:334px;background:#d4d4d4;"></div>
<svg style="left:5.5px;top:160.4px;" width="8" height="8" viewBox="0 0 8 8"><rect x=".5" y=".5" width="7" height="7" rx="1.200" fill="#f4f4f4" stroke="#b4b4b4" stroke-width="0.800"/><path d="M2 4h4" stroke="#555" stroke-width="0.9"/></svg>
<div style="left:13.5px;top:164px;width:4px;height:0.8px;background:#ccc;"></div>
<svg style="left:16.5px;top:160.29999999999998px;" width="8.2" height="7.8" viewBox="0 0 9.400 9.400" preserveAspectRatio="none"><defs><linearGradient id="cg" x1="0" y1="0" x2="1" y2="1"><stop offset="0" stop-color="#7fd4ff"/><stop offset="0.55" stop-color="#2ea4ec"/><stop offset="1" stop-color="#1684d4"/></linearGradient></defs><path d="M0 .2h9.300v9H0z" fill="#0b3a84"/><path d="M0 .2h9.300L7.300 2v5.300L0 9.200z" fill="url(#cg)"/><path d="M0 9.200l2.200-1.900h5.100V2L9.300.2v9z" fill="#0b3a84"/><path d="M0 .2v9l1.200-1V1.200z" fill="#8adcff" opacity="0.700"/></svg>
<span class="t" style="left:29.00px;top:159.26px;font:8.4px/10.08px 'Liberation Sans',sans-serif;color:#222;transform:scaleX(0.7988);">tb_TOP</span>
<div style="left:25px;top:177.0px;width:5px;height:0.7px;background:#d0d0d0;"></div>
<svg style="left:16.8px;top:173.3px;" width="8" height="8" viewBox="0 0 8 8"><rect x=".5" y=".5" width="7" height="7" rx="1.200" fill="#f4f4f4" stroke="#b4b4b4" stroke-width="0.800"/><path d="M2.200 4h3.600M4 2.200v3.600" stroke="#333" stroke-width="0.9"/></svg>
<svg style="left:28.5px;top:173.20000000000002px;" width="8.2" height="7.8" viewBox="0 0 9.400 9.400" preserveAspectRatio="none"><defs><linearGradient id="cg" x1="0" y1="0" x2="1" y2="1"><stop offset="0" stop-color="#7fd4ff"/><stop offset="0.55" stop-color="#2ea4ec"/><stop offset="1" stop-color="#1684d4"/></linearGradient></defs><path d="M0 .2h9.300v9H0z" fill="#0b3a84"/><path d="M0 .2h9.300L7.300 2v5.300L0 9.200z" fill="url(#cg)"/><path d="M0 9.200l2.200-1.900h5.100V2L9.300.2v9z" fill="#0b3a84"/><path d="M0 .2v9l1.200-1V1.200z" fill="#8adcff" opacity="0.700"/></svg>
<span class="t" style="left:41.20px;top:172.46px;font:8.4px/10.08px 'Liberation Sans',sans-serif;color:#222;transform:scaleX(0.7321);">genblk2[31]</span>
<div style="left:25px;top:189.0px;width:5px;height:0.7px;background:#d0d0d0;"></div>
<svg style="left:16.8px;top:185.3px;" width="8" height="8" viewBox="0 0 8 8"><rect x=".5" y=".5" width="7" height="7" rx="1.200" fill="#f4f4f4" stroke="#b4b4b4" stroke-width="0.800"/><path d="M2.200 4h3.600M4 2.200v3.600" stroke="#333" stroke-width="0.9"/></svg>
<svg style="left:28.5px;top:185.20000000000002px;" width="8.2" height="7.8" viewBox="0 0 9.400 9.400" preserveAspectRatio="none"><defs><linearGradient id="cg" x1="0" y1="0" x2="1" y2="1"><stop offset="0" stop-color="#7fd4ff"/><stop offset="0.55" stop-color="#2ea4ec"/><stop offset="1" stop-color="#1684d4"/></linearGradient></defs><path d="M0 .2h9.300v9H0z" fill="#0b3a84"/><path d="M0 .2h9.300L7.300 2v5.300L0 9.200z" fill="url(#cg)"/><path d="M0 9.200l2.200-1.900h5.100V2L9.300.2v9z" fill="#0b3a84"/><path d="M0 .2v9l1.200-1V1.200z" fill="#8adcff" opacity="0.700"/></svg>
<span class="t" style="left:41.20px;top:184.46px;font:8.4px/10.08px 'Liberation Sans',sans-serif;color:#222;transform:scaleX(0.7321);">genblk2[30]</span>
<div style="left:25px;top:201.0px;width:5px;height:0.7px;background:#d0d0d0;"></div>
<svg style="left:16.8px;top:197.3px;" width="8" height="8" viewBox="0 0 8 8"><rect x=".5" y=".5" width="7" height="7" rx="1.200" fill="#f4f4f4" stroke="#b4b4b4" stroke-width="0.800"/><path d="M2.200 4h3.600M4 2.200v3.600" stroke="#333" stroke-width="0.9"/></svg>
<svg style="left:28.5px;top:197.20000000000002px;" width="8.2" height="7.8" viewBox="0 0 9.400 9.400" preserveAspectRatio="none"><defs><linearGradient id="cg" x1="0" y1="0" x2="1" y2="1"><stop offset="0" stop-color="#7fd4ff"/><stop offset="0.55" stop-color="#2ea4ec"/><stop offset="1" stop-color="#1684d4"/></linearGradient></defs><path d="M0 .2h9.300v9H0z" fill="#0b3a84"/><path d="M0 .2h9.300L7.300 2v5.300L0 9.200z" fill="url(#cg)"/><path d="M0 9.200l2.200-1.900h5.100V2L9.300.2v9z" fill="#0b3a84"/><path d="M0 .2v9l1.200-1V1.200z" fill="#8adcff" opacity="0.700"/></svg>
<span class="t" style="left:41.20px;top:196.46px;font:8.4px/10.08px 'Liberation Sans',sans-serif;color:#222;transform:scaleX(0.7321);">genblk2[29]</span>
<div style="left:25px;top:213.0px;width:5px;height:0.7px;background:#d0d0d0;"></div>
<svg style="left:16.8px;top:209.3px;" width="8" height="8" viewBox="0 0 8 8"><rect x=".5" y=".5" width="7" height="7" rx="1.200" fill="#f4f4f4" stroke="#b4b4b4" stroke-width="0.800"/><path d="M2.200 4h3.600M4 2.200v3.600" stroke="#333" stroke-width="0.9"/></svg>
<svg style="left:28.5px;top:209.20000000000002px;" width="8.2" height="7.8" viewBox="0 0 9.400 9.400" preserveAspectRatio="none"><defs><linearGradient id="cg" x1="0" y1="0" x2="1" y2="1"><stop offset="0" stop-color="#7fd4ff"/><stop offset="0.55" stop-color="#2ea4ec"/><stop offset="1" stop-color="#1684d4"/></linearGradient></defs><path d="M0 .2h9.300v9H0z" fill="#0b3a84"/><path d="M0 .2h9.300L7.300 2v5.300L0 9.200z" fill="url(#cg)"/><path d="M0 9.200l2.200-1.900h5.100V2L9.300.2v9z" fill="#0b3a84"/><path d="M0 .2v9l1.200-1V1.200z" fill="#8adcff" opacity="0.700"/></svg>
<span class="t" style="left:41.20px;top:208.46px;font:8.4px/10.08px 'Liberation Sans',sans-serif;color:#222;transform:scaleX(0.7321);">genblk2[28]</span>
<div style="left:25px;top:225.0px;width:5px;height:0.7px;background:#d0d0d0;"></div>
<svg style="left:16.8px;top:221.3px;" width="8" height="8" viewBox="0 0 8 8"><rect x=".5" y=".5" width="7" height="7" rx="1.200" fill="#f4f4f4" stroke="#b4b4b4" stroke-width="0.800"/><path d="M2.200 4h3.600M4 2.200v3.600" stroke="#333" stroke-width="0.9"/></svg>
<svg style="left:28.5px;top:221.20000000000002px;" width="8.2" height="7.8" viewBox="0 0 9.400 9.400" preserveAspectRatio="none"><defs><linearGradient id="cg" x1="0" y1="0" x2="1" y2="1"><stop offset="0" stop-color="#7fd4ff"/><stop offset="0.55" stop-color="#2ea4ec"/><stop offset="1" stop-color="#1684d4"/></linearGradient></defs><path d="M0 .2h9.300v9H0z" fill="#0b3a84"/><path d="M0 .2h9.300L7.300 2v5.300L0 9.200z" fill="url(#cg)"/><path d="M0 9.200l2.200-1.900h5.100V2L9.300.2v9z" fill="#0b3a84"/><path d="M0 .2v9l1.200-1V1.200z" fill="#8adcff" opacity="0.700"/></svg>
<span class="t" style="left:41.20px;top:220.46px;font:8.4px/10.08px 'Liberation Sans',sans-serif;color:#222;transform:scaleX(0.7321);">genblk2[27]</span>
<div style="left:25px;top:237.0px;width:5px;height:0.7px;background:#d0d0d0;"></div>
<svg style="left:16.8px;top:233.3px;" width="8" height="8" viewBox="0 0 8 8"><rect x=".5" y=".5" width="7" height="7" rx="1.200" fill="#f4f4f4" stroke="#b4b4b4" stroke-width="0.800"/><path d="M2.200 4h3.600M4 2.200v3.600" stroke="#333" stroke-width="0.9"/></svg>
<svg style="left:28.5px;top:233.20000000000002px;" width="8.2" height="7.8" viewBox="0 0 9.400 9.400" preserveAspectRatio="none"><defs><linearGradient id="cg" x1="0" y1="0" x2="1" y2="1"><stop offset="0" stop-color="#7fd4ff"/><stop offset="0.55" stop-color="#2ea4ec"/><stop offset="1" stop-color="#1684d4"/></linearGradient></defs><path d="M0 .2h9.300v9H0z" fill="#0b3a84"/><path d="M0 .2h9.300L7.300 2v5.300L0 9.200z" fill="url(#cg)"/><path d="M0 9.200l2.200-1.900h5.100V2L9.300.2v9z" fill="#0b3a84"/><path d="M0 .2v9l1.200-1V1.200z" fill="#8adcff" opacity="0.700"/></svg>
<span class="t" style="left:41.20px;top:232.46px;font:8.4px/10.08px 'Liberation Sans',sans-serif;color:#222;transform:scaleX(0.7321);">genblk2[26]</span>
<div style="left:25px;top:249.0px;width:5px;height:0.7px;background:#d0d0d0;"></div>
<svg style="left:16.8px;top:245.3px;" width="8" height="8" viewBox="0 0 8 8"><rect x=".5" y=".5" width="7" height="7" rx="1.200" fill="#f4f4f4" stroke="#b4b4b4" stroke-width="0.800"/><path d="M2.200 4h3.600M4 2.200v3.600" stroke="#333" stroke-width="0.9"/></svg>
<svg style="left:28.5px;top:245.20000000000002px;" width="8.2" height="7.8" viewBox="0 0 9.400 9.400" preserveAspectRatio="none"><defs><linearGradient id="cg" x1="0" y1="0" x2="1" y2="1"><stop offset="0" stop-color="#7fd4ff"/><stop offset="0.55" stop-color="#2ea4ec"/><stop offset="1" stop-color="#1684d4"/></linearGradient></defs><path d="M0 .2h9.300v9H0z" fill="#0b3a84"/><path d="M0 .2h9.300L7.300 2v5.300L0 9.200z" fill="url(#cg)"/><path d="M0 9.200l2.200-1.900h5.100V2L9.300.2v9z" fill="#0b3a84"/><path d="M0 .2v9l1.200-1V1.200z" fill="#8adcff" opacity="0.700"/></svg>
<span class="t" style="left:41.20px;top:244.46px;font:8.4px/10.08px 'Liberation Sans',sans-serif;color:#222;transform:scaleX(0.7321);">genblk2[25]</span>
<div style="left:25px;top:261.0px;width:5px;height:0.7px;background:#d0d0d0;"></div>
<svg style="left:16.8px;top:257.3px;" width="8" height="8" viewBox="0 0 8 8"><rect x=".5" y=".5" width="7" height="7" rx="1.200" fill="#f4f4f4" stroke="#b4b4b4" stroke-width="0.800"/><path d="M2.200 4h3.600M4 2.200v3.600" stroke="#333" stroke-width="0.9"/></svg>
<svg style="left:28.5px;top:257.20000000000005px;" width="8.2" height="7.8" viewBox="0 0 9.400 9.400" preserveAspectRatio="none"><defs><linearGradient id="cg" x1="0" y1="0" x2="1" y2="1"><stop offset="0" stop-color="#7fd4ff"/><stop offset="0.55" stop-color="#2ea4ec"/><stop offset="1" stop-color="#1684d4"/></linearGradient></defs><path d="M0 .2h9.300v9H0z" fill="#0b3a84"/><path d="M0 .2h9.300L7.300 2v5.300L0 9.200z" fill="url(#cg)"/><path d="M0 9.200l2.200-1.900h5.100V2L9.300.2v9z" fill="#0b3a84"/><path d="M0 .2v9l1.200-1V1.200z" fill="#8adcff" opacity="0.700"/></svg>
<span class="t" style="left:41.20px;top:256.46px;font:8.4px/10.08px 'Liberation Sans',sans-serif;color:#222;transform:scaleX(0.7321);">genblk2[24]</span>
<div style="left:25px;top:273.0px;width:5px;height:0.7px;background:#d0d0d0;"></div>
<svg style="left:16.8px;top:269.3px;" width="8" height="8" viewBox="0 0 8 8"><rect x=".5" y=".5" width="7" height="7" rx="1.200" fill="#f4f4f4" stroke="#b4b4b4" stroke-width="0.800"/><path d="M2.200 4h3.600M4 2.200v3.600" stroke="#333" stroke-width="0.9"/></svg>
<svg style="left:28.5px;top:269.20000000000005px;" width="8.2" height="7.8" viewBox="0 0 9.400 9.400" preserveAspectRatio="none"><defs><linearGradient id="cg" x1="0" y1="0" x2="1" y2="1"><stop offset="0" stop-color="#7fd4ff"/><stop offset="0.55" stop-color="#2ea4ec"/><stop offset="1" stop-color="#1684d4"/></linearGradient></defs><path d="M0 .2h9.300v9H0z" fill="#0b3a84"/><path d="M0 .2h9.300L7.300 2v5.300L0 9.200z" fill="url(#cg)"/><path d="M0 9.200l2.200-1.900h5.100V2L9.300.2v9z" fill="#0b3a84"/><path d="M0 .2v9l1.200-1V1.200z" fill="#8adcff" opacity="0.700"/></svg>
<span class="t" style="left:41.20px;top:268.46px;font:8.4px/10.08px 'Liberation Sans',sans-serif;color:#222;transform:scaleX(0.7321);">genblk2[23]</span>
<div style="left:25px;top:285.0px;width:5px;height:0.7px;background:#d0d0d0;"></div>
<svg style="left:16.8px;top:281.3px;" width="8" height="8" viewBox="0 0 8 8"><rect x=".5" y=".5" width="7" height="7" rx="1.200" fill="#f4f4f4" stroke="#b4b4b4" stroke-width="0.800"/><path d="M2.200 4h3.600M4 2.200v3.600" stroke="#333" stroke-width="0.9"/></svg>
<svg style="left:28.5px;top:281.20000000000005px;" width="8.2" height="7.8" viewBox="0 0 9.400 9.400" preserveAspectRatio="none"><defs><linearGradient id="cg" x1="0" y1="0" x2="1" y2="1"><stop offset="0" stop-color="#7fd4ff"/><stop offset="0.55" stop-color="#2ea4ec"/><stop offset="1" stop-color="#1684d4"/></linearGradient></defs><path d="M0 .2h9.300v9H0z" fill="#0b3a84"/><path d="M0 .2h9.300L7.300 2v5.300L0 9.200z" fill="url(#cg)"/><path d="M0 9.200l2.200-1.900h5.100V2L9.300.2v9z" fill="#0b3a84"/><path d="M0 .2v9l1.200-1V1.200z" fill="#8adcff" opacity="0.700"/></svg>
<span class="t" style="left:41.20px;top:280.46px;font:8.4px/10.08px 'Liberation Sans',sans-serif;color:#222;transform:scaleX(0.7321);">genblk2[22]</span>
<div style="left:25px;top:297.0px;width:5px;height:0.7px;background:#d0d0d0;"></div>
<svg style="left:16.8px;top:293.3px;" width="8" height="8" viewBox="0 0 8 8"><rect x=".5" y=".5" width="7" height="7" rx="1.200" fill="#f4f4f4" stroke="#b4b4b4" stroke-width="0.800"/><path d="M2.200 4h3.600M4 2.200v3.600" stroke="#333" stroke-width="0.9"/></svg>
<svg style="left:28.5px;top:293.20000000000005px;" width="8.2" height="7.8" viewBox="0 0 9.400 9.400" preserveAspectRatio="none"><defs><linearGradient id="cg" x1="0" y1="0" x2="1" y2="1"><stop offset="0" stop-color="#7fd4ff"/><stop offset="0.55" stop-color="#2ea4ec"/><stop offset="1" stop-color="#1684d4"/></linearGradient></defs><path d="M0 .2h9.300v9H0z" fill="#0b3a84"/><path d="M0 .2h9.300L7.300 2v5.300L0 9.200z" fill="url(#cg)"/><path d="M0 9.200l2.200-1.900h5.100V2L9.300.2v9z" fill="#0b3a84"/><path d="M0 .2v9l1.200-1V1.200z" fill="#8adcff" opacity="0.700"/></svg>
<span class="t" style="left:41.20px;top:292.46px;font:8.4px/10.08px 'Liberation Sans',sans-serif;color:#222;transform:scaleX(0.7321);">genblk2[21]</span>
<div style="left:25px;top:309.0px;width:5px;height:0.7px;background:#d0d0d0;"></div>
<svg style="left:16.8px;top:305.3px;" width="8" height="8" viewBox="0 0 8 8"><rect x=".5" y=".5" width="7" height="7" rx="1.200" fill="#f4f4f4" stroke="#b4b4b4" stroke-width="0.800"/><path d="M2.200 4h3.600M4 2.200v3.600" stroke="#333" stroke-width="0.9"/></svg>
<svg style="left:28.5px;top:305.20000000000005px;" width="8.2" height="7.8" viewBox="0 0 9.400 9.400" preserveAspectRatio="none"><defs><linearGradient id="cg" x1="0" y1="0" x2="1" y2="1"><stop offset="0" stop-color="#7fd4ff"/><stop offset="0.55" stop-color="#2ea4ec"/><stop offset="1" stop-color="#1684d4"/></linearGradient></defs><path d="M0 .2h9.300v9H0z" fill="#0b3a84"/><path d="M0 .2h9.300L7.300 2v5.300L0 9.200z" fill="url(#cg)"/><path d="M0 9.200l2.200-1.900h5.100V2L9.300.2v9z" fill="#0b3a84"/><path d="M0 .2v9l1.200-1V1.200z" fill="#8adcff" opacity="0.700"/></svg>
<span class="t" style="left:41.20px;top:304.46px;font:8.4px/10.08px 'Liberation Sans',sans-serif;color:#222;transform:scaleX(0.7321);">genblk2[20]</span>
<div style="left:25px;top:321.0px;width:5px;height:0.7px;background:#d0d0d0;"></div>
<svg style="left:16.8px;top:317.3px;" width="8" height="8" viewBox="0 0 8 8"><rect x=".5" y=".5" width="7" height="7" rx="1.200" fill="#f4f4f4" stroke="#b4b4b4" stroke-width="0.800"/><path d="M2.200 4h3.600M4 2.200v3.600" stroke="#333" stroke-width="0.9"/></svg>
<svg style="left:28.5px;top:317.20000000000005px;" width="8.2" height="7.8" viewBox="0 0 9.400 9.400" preserveAspectRatio="none"><defs><linearGradient id="cg" x1="0" y1="0" x2="1" y2="1"><stop offset="0" stop-color="#7fd4ff"/><stop offset="0.55" stop-color="#2ea4ec"/><stop offset="1" stop-color="#1684d4"/></linearGradient></defs><path d="M0 .2h9.300v9H0z" fill="#0b3a84"/><path d="M0 .2h9.300L7.300 2v5.300L0 9.200z" fill="url(#cg)"/><path d="M0 9.200l2.200-1.900h5.100V2L9.300.2v9z" fill="#0b3a84"/><path d="M0 .2v9l1.200-1V1.200z" fill="#8adcff" opacity="0.700"/></svg>
<span class="t" style="left:41.20px;top:316.46px;font:8.4px/10.08px 'Liberation Sans',sans-serif;color:#222;transform:scaleX(0.7321);">genblk2[19]</span>
<div style="left:25px;top:333.0px;width:5px;height:0.7px;background:#d0d0d0;"></div>
<svg style="left:16.8px;top:329.3px;" width="8" height="8" viewBox="0 0 8 8"><rect x=".5" y=".5" width="7" height="7" rx="1.200" fill="#f4f4f4" stroke="#b4b4b4" stroke-width="0.800"/><path d="M2.200 4h3.600M4 2.200v3.600" stroke="#333" stroke-width="0.9"/></svg>
<svg style="left:28.5px;top:329.20000000000005px;" width="8.2" height="7.8" viewBox="0 0 9.400 9.400" preserveAspectRatio="none"><defs><linearGradient id="cg" x1="0" y1="0" x2="1" y2="1"><stop offset="0" stop-color="#7fd4ff"/><stop offset="0.55" stop-color="#2ea4ec"/><stop offset="1" stop-color="#1684d4"/></linearGradient></defs><path d="M0 .2h9.300v9H0z" fill="#0b3a84"/><path d="M0 .2h9.300L7.300 2v5.300L0 9.200z" fill="url(#cg)"/><path d="M0 9.200l2.200-1.900h5.100V2L9.300.2v9z" fill="#0b3a84"/><path d="M0 .2v9l1.200-1V1.200z" fill="#8adcff" opacity="0.700"/></svg>
<span class="t" style="left:41.20px;top:328.46px;font:8.4px/10.08px 'Liberation Sans',sans-serif;color:#222;transform:scaleX(0.7321);">genblk2[18]</span>
<div style="left:25px;top:345.0px;width:5px;height:0.7px;background:#d0d0d0;"></div>
<svg style="left:16.8px;top:341.3px;" width="8" height="8" viewBox="0 0 8 8"><rect x=".5" y=".5" width="7" height="7" rx="1.200" fill="#f4f4f4" stroke="#b4b4b4" stroke-width="0.800"/><path d="M2.200 4h3.600M4 2.200v3.600" stroke="#333" stroke-width="0.9"/></svg>
<svg style="left:28.5px;top:341.20000000000005px;" width="8.2" height="7.8" viewBox="0 0 9.400 9.400" preserveAspectRatio="none"><defs><linearGradient id="cg" x1="0" y1="0" x2="1" y2="1"><stop offset="0" stop-color="#7fd4ff"/><stop offset="0.55" stop-color="#2ea4ec"/><stop offset="1" stop-color="#1684d4"/></linearGradient></defs><path d="M0 .2h9.300v9H0z" fill="#0b3a84"/><path d="M0 .2h9.300L7.300 2v5.300L0 9.200z" fill="url(#cg)"/><path d="M0 9.200l2.200-1.900h5.100V2L9.300.2v9z" fill="#0b3a84"/><path d="M0 .2v9l1.200-1V1.200z" fill="#8adcff" opacity="0.700"/></svg>
<span class="t" style="left:41.20px;top:340.46px;font:8.4px/10.08px 'Liberation Sans',sans-serif;color:#222;transform:scaleX(0.7321);">genblk2[17]</span>
<div style="left:25px;top:357.0px;width:5px;height:0.7px;background:#d0d0d0;"></div>
<svg style="left:16.8px;top:353.3px;" width="8" height="8" viewBox="0 0 8 8"><rect x=".5" y=".5" width="7" height="7" rx="1.200" fill="#f4f4f4" stroke="#b4b4b4" stroke-width="0.800"/><path d="M2.200 4h3.600M4 2.200v3.600" stroke="#333" stroke-width="0.9"/></svg>
<svg style="left:28.5px;top:353.20000000000005px;" width="8.2" height="7.8" viewBox="0 0 9.400 9.400" preserveAspectRatio="none"><defs><linearGradient id="cg" x1="0" y1="0" x2="1" y2="1"><stop offset="0" stop-color="#7fd4ff"/><stop offset="0.55" stop-color="#2ea4ec"/><stop offset="1" stop-color="#1684d4"/></linearGradient></defs><path d="M0 .2h9.300v9H0z" fill="#0b3a84"/><path d="M0 .2h9.300L7.300 2v5.300L0 9.200z" fill="url(#cg)"/><path d="M0 9.200l2.200-1.900h5.100V2L9.300.2v9z" fill="#0b3a84"/><path d="M0 .2v9l1.200-1V1.200z" fill="#8adcff" opacity="0.700"/></svg>
<span class="t" style="left:41.20px;top:352.46px;font:8.4px/10.08px 'Liberation Sans',sans-serif;color:#222;transform:scaleX(0.7321);">genblk2[16]</span>
<div style="left:25px;top:369.0px;width:5px;height:0.7px;background:#d0d0d0;"></div>
<svg style="left:16.8px;top:365.3px;" width="8" height="8" viewBox="0 0 8 8"><rect x=".5" y=".5" width="7" height="7" rx="1.200" fill="#f4f4f4" stroke="#b4b4b4" stroke-width="0.800"/><path d="M2.200 4h3.600M4 2.200v3.600" stroke="#333" stroke-width="0.9"/></svg>
<svg style="left:28.5px;top:365.20000000000005px;" width="8.2" height="7.8" viewBox="0 0 9.400 9.400" preserveAspectRatio="none"><defs><linearGradient id="cg" x1="0" y1="0" x2="1" y2="1"><stop offset="0" stop-color="#7fd4ff"/><stop offset="0.55" stop-color="#2ea4ec"/><stop offset="1" stop-color="#1684d4"/></linearGradient></defs><path d="M0 .2h9.300v9H0z" fill="#0b3a84"/><path d="M0 .2h9.300L7.300 2v5.300L0 9.200z" fill="url(#cg)"/><path d="M0 9.200l2.200-1.900h5.100V2L9.300.2v9z" fill="#0b3a84"/><path d="M0 .2v9l1.200-1V1.200z" fill="#8adcff" opacity="0.700"/></svg>
<span class="t" style="left:41.20px;top:364.46px;font:8.4px/10.08px 'Liberation Sans',sans-serif;color:#222;transform:scaleX(0.7321);">genblk2[15]</span>
<div style="left:25px;top:381.0px;width:5px;height:0.7px;background:#d0d0d0;"></div>
<svg style="left:16.8px;top:377.3px;" width="8" height="8" viewBox="0 0 8 8"><rect x=".5" y=".5" width="7" height="7" rx="1.200" fill="#f4f4f4" stroke="#b4b4b4" stroke-width="0.800"/><path d="M2.200 4h3.600M4 2.200v3.600" stroke="#333" stroke-width="0.9"/></svg>
<svg style="left:28.5px;top:377.20000000000005px;" width="8.2" height="7.8" viewBox="0 0 9.400 9.400" preserveAspectRatio="none"><defs><linearGradient id="cg" x1="0" y1="0" x2="1" y2="1"><stop offset="0" stop-color="#7fd4ff"/><stop offset="0.55" stop-color="#2ea4ec"/><stop offset="1" stop-color="#1684d4"/></linearGradient></defs><path d="M0 .2h9.300v9H0z" fill="#0b3a84"/><path d="M0 .2h9.300L7.300 2v5.300L0 9.200z" fill="url(#cg)"/><path d="M0 9.200l2.200-1.900h5.100V2L9.300.2v9z" fill="#0b3a84"/><path d="M0 .2v9l1.200-1V1.200z" fill="#8adcff" opacity="0.700"/></svg>
<span class="t" style="left:41.20px;top:376.46px;font:8.4px/10.08px 'Liberation Sans',sans-serif;color:#222;transform:scaleX(0.7321);">genblk2[14]</span>
<div style="left:25px;top:393.0px;width:5px;height:0.7px;background:#d0d0d0;"></div>
<svg style="left:16.8px;top:389.3px;" width="8" height="8" viewBox="0 0 8 8"><rect x=".5" y=".5" width="7" height="7" rx="1.200" fill="#f4f4f4" stroke="#b4b4b4" stroke-width="0.800"/><path d="M2.200 4h3.600M4 2.200v3.600" stroke="#333" stroke-width="0.9"/></svg>
<svg style="left:28.5px;top:389.20000000000005px;" width="8.2" height="7.8" viewBox="0 0 9.400 9.400" preserveAspectRatio="none"><defs><linearGradient id="cg" x1="0" y1="0" x2="1" y2="1"><stop offset="0" stop-color="#7fd4ff"/><stop offset="0.55" stop-color="#2ea4ec"/><stop offset="1" stop-color="#1684d4"/></linearGradient></defs><path d="M0 .2h9.300v9H0z" fill="#0b3a84"/><path d="M0 .2h9.300L7.300 2v5.300L0 9.200z" fill="url(#cg)"/><path d="M0 9.200l2.200-1.900h5.100V2L9.300.2v9z" fill="#0b3a84"/><path d="M0 .2v9l1.200-1V1.200z" fill="#8adcff" opacity="0.700"/></svg>
<span class="t" style="left:41.20px;top:388.46px;font:8.4px/10.08px 'Liberation Sans',sans-serif;color:#222;transform:scaleX(0.7321);">genblk2[13]</span>
<div style="left:25px;top:405.0px;width:5px;height:0.7px;background:#d0d0d0;"></div>
<svg style="left:16.8px;top:401.3px;" width="8" height="8" viewBox="0 0 8 8"><rect x=".5" y=".5" width="7" height="7" rx="1.200" fill="#f4f4f4" stroke="#b4b4b4" stroke-width="0.800"/><path d="M2.200 4h3.600M4 2.200v3.600" stroke="#333" stroke-width="0.9"/></svg>
<svg style="left:28.5px;top:401.20000000000005px;" width="8.2" height="7.8" viewBox="0 0 9.400 9.400" preserveAspectRatio="none"><defs><linearGradient id="cg" x1="0" y1="0" x2="1" y2="1"><stop offset="0" stop-color="#7fd4ff"/><stop offset="0.55" stop-color="#2ea4ec"/><stop offset="1" stop-color="#1684d4"/></linearGradient></defs><path d="M0 .2h9.300v9H0z" fill="#0b3a84"/><path d="M0 .2h9.300L7.300 2v5.300L0 9.200z" fill="url(#cg)"/><path d="M0 9.200l2.200-1.900h5.100V2L9.300.2v9z" fill="#0b3a84"/><path d="M0 .2v9l1.200-1V1.200z" fill="#8adcff" opacity="0.700"/></svg>
<span class="t" style="left:41.20px;top:400.46px;font:8.4px/10.08px 'Liberation Sans',sans-serif;color:#222;transform:scaleX(0.7321);">genblk2[12]</span>
<div style="left:25px;top:417.0px;width:5px;height:0.7px;background:#d0d0d0;"></div>
<svg style="left:16.8px;top:413.3px;" width="8" height="8" viewBox="0 0 8 8"><rect x=".5" y=".5" width="7" height="7" rx="1.200" fill="#f4f4f4" stroke="#b4b4b4" stroke-width="0.800"/><path d="M2.200 4h3.600M4 2.200v3.600" stroke="#333" stroke-width="0.9"/></svg>
<svg style="left:28.5px;top:413.20000000000005px;" width="8.2" height="7.8" viewBox="0 0 9.400 9.400" preserveAspectRatio="none"><defs><linearGradient id="cg" x1="0" y1="0" x2="1" y2="1"><stop offset="0" stop-color="#7fd4ff"/><stop offset="0.55" stop-color="#2ea4ec"/><stop offset="1" stop-color="#1684d4"/></linearGradient></defs><path d="M0 .2h9.300v9H0z" fill="#0b3a84"/><path d="M0 .2h9.300L7.300 2v5.300L0 9.200z" fill="url(#cg)"/><path d="M0 9.200l2.200-1.900h5.100V2L9.300.2v9z" fill="#0b3a84"/><path d="M0 .2v9l1.200-1V1.200z" fill="#8adcff" opacity="0.700"/></svg>
<span class="t" style="left:41.20px;top:412.46px;font:8.4px/10.08px 'Liberation Sans',sans-serif;color:#222;transform:scaleX(0.7428);">genblk2[11]</span>
<div style="left:25px;top:429.0px;width:5px;height:0.7px;background:#d0d0d0;"></div>
<svg style="left:16.8px;top:425.3px;" width="8" height="8" viewBox="0 0 8 8"><rect x=".5" y=".5" width="7" height="7" rx="1.200" fill="#f4f4f4" stroke="#b4b4b4" stroke-width="0.800"/><path d="M2.200 4h3.600M4 2.200v3.600" stroke="#333" stroke-width="0.9"/></svg>
<svg style="left:28.5px;top:425.20000000000005px;" width="8.2" height="7.8" viewBox="0 0 9.400 9.400" preserveAspectRatio="none"><defs><linearGradient id="cg" x1="0" y1="0" x2="1" y2="1"><stop offset="0" stop-color="#7fd4ff"/><stop offset="0.55" stop-color="#2ea4ec"/><stop offset="1" stop-color="#1684d4"/></linearGradient></defs><path d="M0 .2h9.300v9H0z" fill="#0b3a84"/><path d="M0 .2h9.300L7.300 2v5.300L0 9.200z" fill="url(#cg)"/><path d="M0 9.200l2.200-1.900h5.100V2L9.300.2v9z" fill="#0b3a84"/><path d="M0 .2v9l1.200-1V1.200z" fill="#8adcff" opacity="0.700"/></svg>
<span class="t" style="left:41.20px;top:424.46px;font:8.4px/10.08px 'Liberation Sans',sans-serif;color:#222;transform:scaleX(0.7321);">genblk2[10]</span>
<div style="left:25px;top:441.0px;width:5px;height:0.7px;background:#d0d0d0;"></div>
<svg style="left:16.8px;top:437.3px;" width="8" height="8" viewBox="0 0 8 8"><rect x=".5" y=".5" width="7" height="7" rx="1.200" fill="#f4f4f4" stroke="#b4b4b4" stroke-width="0.800"/><path d="M2.200 4h3.600M4 2.200v3.600" stroke="#333" stroke-width="0.9"/></svg>
<svg style="left:28.5px;top:437.20000000000005px;" width="8.2" height="7.8" viewBox="0 0 9.400 9.400" preserveAspectRatio="none"><defs><linearGradient id="cg" x1="0" y1="0" x2="1" y2="1"><stop offset="0" stop-color="#7fd4ff"/><stop offset="0.55" stop-color="#2ea4ec"/><stop offset="1" stop-color="#1684d4"/></linearGradient></defs><path d="M0 .2h9.300v9H0z" fill="#0b3a84"/><path d="M0 .2h9.300L7.300 2v5.300L0 9.200z" fill="url(#cg)"/><path d="M0 9.200l2.200-1.900h5.100V2L9.300.2v9z" fill="#0b3a84"/><path d="M0 .2v9l1.200-1V1.200z" fill="#8adcff" opacity="0.700"/></svg>
<span class="t" style="left:41.20px;top:436.46px;font:8.4px/10.08px 'Liberation Sans',sans-serif;color:#222;transform:scaleX(0.7300);">genblk2[9]</span>
<div style="left:25px;top:453.0px;width:5px;height:0.7px;background:#d0d0d0;"></div>
<svg style="left:16.8px;top:449.3px;" width="8" height="8" viewBox="0 0 8 8"><rect x=".5" y=".5" width="7" height="7" rx="1.200" fill="#f4f4f4" stroke="#b4b4b4" stroke-width="0.800"/><path d="M2.200 4h3.600M4 2.200v3.600" stroke="#333" stroke-width="0.9"/></svg>
<svg style="left:28.5px;top:449.20000000000005px;" width="8.2" height="7.8" viewBox="0 0 9.400 9.400" preserveAspectRatio="none"><defs><linearGradient id="cg" x1="0" y1="0" x2="1" y2="1"><stop offset="0" stop-color="#7fd4ff"/><stop offset="0.55" stop-color="#2ea4ec"/><stop offset="1" stop-color="#1684d4"/></linearGradient></defs><path d="M0 .2h9.300v9H0z" fill="#0b3a84"/><path d="M0 .2h9.300L7.300 2v5.300L0 9.200z" fill="url(#cg)"/><path d="M0 9.200l2.200-1.900h5.100V2L9.300.2v9z" fill="#0b3a84"/><path d="M0 .2v9l1.200-1V1.200z" fill="#8adcff" opacity="0.700"/></svg>
<span class="t" style="left:41.20px;top:448.46px;font:8.4px/10.08px 'Liberation Sans',sans-serif;color:#222;transform:scaleX(0.7300);">genblk2[8]</span>
<div style="left:25px;top:465.0px;width:5px;height:0.7px;background:#d0d0d0;"></div>
<svg style="left:16.8px;top:461.3px;" width="8" height="8" viewBox="0 0 8 8"><rect x=".5" y=".5" width="7" height="7" rx="1.200" fill="#f4f4f4" stroke="#b4b4b4" stroke-width="0.800"/><path d="M2.200 4h3.600M4 2.200v3.600" stroke="#333" stroke-width="0.9"/></svg>
<svg style="left:28.5px;top:461.20000000000005px;" width="8.2" height="7.8" viewBox="0 0 9.400 9.400" preserveAspectRatio="none"><defs><linearGradient id="cg" x1="0" y1="0" x2="1" y2="1"><stop offset="0" stop-color="#7fd4ff"/><stop offset="0.55" stop-color="#2ea4ec"/><stop offset="1" stop-color="#1684d4"/></linearGradient></defs><path d="M0 .2h9.300v9H0z" fill="#0b3a84"/><path d="M0 .2h9.300L7.300 2v5.300L0 9.200z" fill="url(#cg)"/><path d="M0 9.200l2.200-1.900h5.100V2L9.300.2v9z" fill="#0b3a84"/><path d="M0 .2v9l1.200-1V1.200z" fill="#8adcff" opacity="0.700"/></svg>
<span class="t" style="left:41.20px;top:460.46px;font:8.4px/10.08px 'Liberation Sans',sans-serif;color:#222;transform:scaleX(0.7300);">genblk2[7]</span>
<div style="left:25px;top:477.0px;width:5px;height:0.7px;background:#d0d0d0;"></div>
<svg style="left:16.8px;top:473.3px;" width="8" height="8" viewBox="0 0 8 8"><rect x=".5" y=".5" width="7" height="7" rx="1.200" fill="#f4f4f4" stroke="#b4b4b4" stroke-width="0.800"/><path d="M2.200 4h3.600M4 2.200v3.600" stroke="#333" stroke-width="0.9"/></svg>
<svg style="left:28.5px;top:473.20000000000005px;" width="8.2" height="7.8" viewBox="0 0 9.400 9.400" preserveAspectRatio="none"><defs><linearGradient id="cg" x1="0" y1="0" x2="1" y2="1"><stop offset="0" stop-color="#7fd4ff"/><stop offset="0.55" stop-color="#2ea4ec"/><stop offset="1" stop-color="#1684d4"/></linearGradient></defs><path d="M0 .2h9.300v9H0z" fill="#0b3a84"/><path d="M0 .2h9.300L7.300 2v5.300L0 9.200z" fill="url(#cg)"/><path d="M0 9.200l2.200-1.900h5.100V2L9.300.2v9z" fill="#0b3a84"/><path d="M0 .2v9l1.200-1V1.200z" fill="#8adcff" opacity="0.700"/></svg>
<span class="t" style="left:41.20px;top:472.46px;font:8.4px/10.08px 'Liberation Sans',sans-serif;color:#222;transform:scaleX(0.7300);">genblk2[6]</span>
<div style="left:25px;top:489.0px;width:5px;height:0.7px;background:#d0d0d0;"></div>
<svg style="left:16.8px;top:485.3px;" width="8" height="8" viewBox="0 0 8 8"><rect x=".5" y=".5" width="7" height="7" rx="1.200" fill="#f4f4f4" stroke="#b4b4b4" stroke-width="0.800"/><path d="M2.200 4h3.600M4 2.200v3.600" stroke="#333" stroke-width="0.9"/></svg>
<svg style="left:28.5px;top:485.20000000000005px;" width="8.2" height="7.8" viewBox="0 0 9.400 9.400" preserveAspectRatio="none"><defs><linearGradient id="cg" x1="0" y1="0" x2="1" y2="1"><stop offset="0" stop-color="#7fd4ff"/><stop offset="0.55" stop-color="#2ea4ec"/><stop offset="1" stop-color="#1684d4"/></linearGradient></defs><path d="M0 .2h9.300v9H0z" fill="#0b3a84"/><path d="M0 .2h9.300L7.300 2v5.300L0 9.200z" fill="url(#cg)"/><path d="M0 9.200l2.200-1.900h5.100V2L9.300.2v9z" fill="#0b3a84"/><path d="M0 .2v9l1.200-1V1.200z" fill="#8adcff" opacity="0.700"/></svg>
<span class="t" style="left:41.20px;top:484.46px;font:8.4px/10.08px 'Liberation Sans',sans-serif;color:#222;transform:scaleX(0.7300);">genblk2[5]</span>
<div style="left:25px;top:501.0px;width:5px;height:0.7px;background:#d0d0d0;"></div>
<svg style="left:16.8px;top:497.3px;" width="8" height="8" viewBox="0 0 8 8"><rect x=".5" y=".5" width="7" height="7" rx="1.200" fill="#f4f4f4" stroke="#b4b4b4" stroke-width="0.800"/><path d="M2.200 4h3.600M4 2.200v3.600" stroke="#333" stroke-width="0.9"/></svg>
<svg style="left:28.5px;top:497.20000000000005px;" width="8.2" height="7.8" viewBox="0 0 9.400 9.400" preserveAspectRatio="none"><defs><linearGradient id="cg" x1="0" y1="0" x2="1" y2="1"><stop offset="0" stop-color="#7fd4ff"/><stop offset="0.55" stop-color="#2ea4ec"/><stop offset="1" stop-color="#1684d4"/></linearGradient></defs><path d="M0 .2h9.300v9H0z" fill="#0b3a84"/><path d="M0 .2h9.300L7.300 2v5.300L0 9.200z" fill="url(#cg)"/><path d="M0 9.200l2.200-1.900h5.100V2L9.300.2v9z" fill="#0b3a84"/><path d="M0 .2v9l1.200-1V1.200z" fill="#8adcff" opacity="0.700"/></svg>
<span class="t" style="left:41.20px;top:496.46px;font:8.4px/10.08px 'Liberation Sans',sans-serif;color:#222;transform:scaleX(0.7300);">genblk2[4]</span>
<div style="left:2px;top:506.6px;width:99px;height:1.4px;background:#fff;"></div>
<div style="left:92px;top:145px;width:8.5px;height:361.5px;background:#c6c6c6;"></div>
<div style="left:92px;top:152.5px;width:8.5px;height:80.5px;background:#fbfbfb;box-sizing:border-box;border:0.500px solid #ddd;"></div>
<svg style="left:92px;top:145px;" width="8.5" height="361.5" viewBox="0 0 8.5 361.5"><path d="M4.25 0.75L7.5 7.25L1.0 7.25z" fill="#f4f4f4" stroke="#aaa" stroke-width="0.600"/><path d="M4.25 360.75L7.5 354.25L1.0 354.25z" fill="#f4f4f4" stroke="#aaa" stroke-width="0.600"/></svg>
<div style="left:2px;top:508px;width:88.5px;height:8.6px;background:#c6c6c6;"></div>
<div style="left:10px;top:508px;width:10.5px;height:8.6px;background:#fbfbfb;box-sizing:border-box;border:0.500px solid #ddd;"></div>
<svg style="left:2px;top:508px;" width="88.5" height="8.6" viewBox="0 0 88.5 8.6"><path d="M0.75 4.3L7.25 1.0499999999999998L7.25 7.55z" fill="#f4f4f4" stroke="#aaa" stroke-width="0.600"/><path d="M87.75 4.3L81.25 1.0499999999999998L81.25 7.55z" fill="#f4f4f4" stroke="#aaa" stroke-width="0.600"/></svg>
<div style="left:90.5px;top:506.5px;width:10.5px;height:11px;background:#fff;"></div>
<div style="left:0px;top:517px;width:101px;height:16.6px;background:#dcdcdc;"></div>
<div style="left:0px;top:519px;width:45.5px;height:13.6px;background:#dedede;box-sizing:border-box;border:1px solid #555;border-left:none;border-radius:0 1px 2px 0;"></div>
<span class="t" style="left:0.50px;top:520.40px;font:9px/10.80px 'Liberation Sans',sans-serif;color:#555;transform:scaleX(0.8903);">mory List</span>
<span class="t" style="left:37.00px;top:520.40px;font:9px/10.80px 'Liberation Sans',sans-serif;color:#aaa;transform:scaleX(1.0465);">×</span>
<div style="left:45.5px;top:518.2px;width:42px;height:14.4px;background:#fff;box-sizing:border-box;border:1px solid #666;border-top:none;border-radius:0 0 2.500px 2.500px;"></div>
<svg style="left:48.5px;top:518.5px;" width="12" height="13" viewBox="0 0 12 13"><path d="M2.400 9C2 4.400 4.600 1.200 7 1.400s3.800 3.200 2.600 7.600" fill="none" stroke="#4a4a4a" stroke-width="1.100"/><path d="M4.400 8.400C4.200 4.600 5.600 3 6.600 3.200s1.800 1.800 1 5.400" fill="none" stroke="#9a9aa4" stroke-width="0.900"/><circle cx="2.600" cy="10.400" r="1.900" fill="#7a1220"/><circle cx="9.600" cy="10.600" r="1.900" fill="#7a1220"/></svg>
<span class="t" style="left:63.00px;top:519.84px;font:9.6px/11.52px 'Liberation Sans',sans-serif;color:#333;transform:scaleX(0.8372);">sim</span>
<span class="t" style="left:79.50px;top:520.40px;font:9px/10.80px 'Liberation Sans',sans-serif;color:#bbb;transform:scaleX(1.0465);">×</span>
<div style="left:88px;top:519.5px;width:13px;height:11.5px;background:#fff;"></div>
<svg style="left:88px;top:519.5px;" width="13" height="11.5" viewBox="0 0 13 11.5"><path d="M1.200 5.700l3-3v6z" fill="#000"/><path d="M11.800 5.700l-3-3v6z" fill="#000"/><path d="M6.500 0v11.500" stroke="#ddd" stroke-width="0.800"/></svg>
<div style="left:107px;top:131px;width:166px;height:314.6px;background:#fff;"></div>
<svg style="left:108px;top:132px;" width="13" height="12" viewBox="0 0 13 12"><rect x="6" y="4.300" width="4.800" height="4.500" fill="#0c8a52"/><path d="M.2 6.600L4 1.600l4 4-4.400 5.900z" fill="#1242e0"/><path d="M3.600 2.500l4 3-2 1.500L2.100 4.200z" fill="#22c2f8"/><path d="M.5 4.600L4.200 .9" stroke="#c222b2" stroke-width="1.300"/></svg>
<span class="t" style="left:122.00px;top:132.90px;font:9px/10.80px 'Liberation Sans',sans-serif;color:#222;transform:scaleX(0.8685);">Objects</span>
<div style="left:152.5px;top:136.20000000000002px;width:32.75px;height:0.9px;background:#c4c4c4;"></div>
<div style="left:201.25px;top:136.20000000000002px;width:32.75px;height:0.9px;background:#c4c4c4;"></div>
<div style="left:152.5px;top:139.0px;width:32.75px;height:0.9px;background:#c4c4c4;"></div>
<div style="left:201.25px;top:139.0px;width:32.75px;height:0.9px;background:#c4c4c4;"></div>
<svg style="left:186.25px;top:134.8px;" width="14" height="6" viewBox="0 0 14 6"><path d="M0 1h14M0 3h14M0 5h14" stroke="#c0c0c8" stroke-width="0.9" stroke-dasharray="1.200 1"/></svg>
<div style="left:236px;top:132.5px;width:10px;height:10px;background:#fff;box-sizing:border-box;border:1px solid #f2f2f2;border-right-color:#b8b8b8;border-bottom-color:#b8b8b8;"></div>
<svg style="left:236px;top:132.5px;" width="10" height="10" viewBox="0 0 10 10"><path d="M5 2.200v5.600M2.200 5h5.600" stroke="#000" stroke-width="1.500"/></svg>
<div style="left:248px;top:132.5px;width:10px;height:10px;background:#fff;box-sizing:border-box;border:1px solid #f2f2f2;border-right-color:#b8b8b8;border-bottom-color:#b8b8b8;"></div>
<svg style="left:248px;top:132.5px;" width="10" height="10" viewBox="0 0 10 10"><rect x="2.400" y="4.600" width="3.200" height="3.200" fill="none" stroke="#222" stroke-width="0.9"/><path d="M4.600 5.600l3-3M5.400 2.400h2.400v2.400" stroke="#111" stroke-width="1" fill="none"/></svg>
<div style="left:260.8px;top:132.5px;width:10px;height:10px;background:#fff;box-sizing:border-box;border:1px solid #f2f2f2;border-right-color:#b8b8b8;border-bottom-color:#b8b8b8;"></div>
<svg style="left:260.8px;top:132.5px;" width="10" height="10" viewBox="0 0 10 10"><path d="M2.600 2.600l4.800 4.800M7.400 2.600l-4.800 4.800" stroke="#000" stroke-width="1.200"/></svg>
<div style="left:108px;top:145px;width:8.5px;height:11.5px;background:#fff;box-sizing:border-box;border-right:1px solid #bbb;border-bottom:1px solid #bbb;"></div>
<svg style="left:108px;top:145px;" width="8.5" height="11.5" viewBox="0 0 8.5 11.5"><path d="M1.600 3.15h5.400L4.300 8.55z" fill="#222"/></svg>
<div style="left:116.5px;top:145px;width:35.5px;height:11.5px;background:#fff;box-sizing:border-box;border-bottom:1px solid #b8b8b8;border-right:1px solid #c4c4c4;"></div>
<span class="t" style="left:118.60px;top:144.71px;font:9.4px/11.28px 'Liberation Sans',sans-serif;color:#111;transform:scaleX(0.8574);">Name</span>
<div style="left:152px;top:145px;width:109.5px;height:11.5px;background:#e4ece0;box-sizing:border-box;border-bottom:1px solid #b8b8b8;"></div>
<svg style="left:152.5px;top:145px;" width="13" height="11.5" viewBox="0 0 13 11.5"><rect x=".5" y=".5" width="12" height="10.500" fill="#f0f0f0" stroke="#ccc" stroke-width="0.500"/><path d="M3 2.600h2v6h2.400" stroke="#222" stroke-width="0.9" fill="none"/><path d="M11 5.600H7M8.400 4.200L7 5.600 8.400 7" stroke="#222" stroke-width="0.800" fill="none"/></svg>
<svg style="left:166.5px;top:146px;" width="10" height="10" viewBox="0 0 10 10"><circle cx="5" cy="5" r="3" fill="#22a022" stroke="#0c700c" stroke-width="0.600"/></svg>
<span class="t" style="left:176.80px;top:146.04px;font:8.6px/10.32px 'Liberation Mono',monospace;color:#5a6a5a;transform:scaleX(0.9316);">1029110000 ps</span>
<svg style="left:240.5px;top:145px;" width="13" height="11.5" viewBox="0 0 13 11.5"><rect x=".5" y=".5" width="12" height="10.500" fill="#f0f0f0" stroke="#ccc" stroke-width="0.500"/><path d="M10 2.600H8v6H5.600" stroke="#222" stroke-width="0.9" fill="none"/><path d="M2 5.600h4M4.600 4.200L6 5.600 4.600 7" stroke="#222" stroke-width="0.800" fill="none"/></svg>
<div style="left:253.5px;top:145px;width:8px;height:11.5px;background:#fff;"></div>
<svg style="left:253.5px;top:145px;" width="8" height="11.5" viewBox="0 0 8 11.5"><path d="M2.600 3.200l3.400 2.600-3.400 2.600z" fill="#000"/></svg>
<div style="left:107.4px;top:157px;width:154px;height:276.4px;background:#46517f;"></div>
<svg style="left:120.6px;top:155.7px;" width="10" height="10" viewBox="0 0 10 10"><path d="M5 .4L9.600 5 5 9.600.4 5z" fill="#1e90e6"/><path d="M5 .4L9.600 5H5z" fill="#0a5cc0"/><path d="M5 .4L.4 5h3z" fill="#8fdcff"/><path d="M5 9.600L.4 5H5z" fill="#3ab4f6"/><path d="M5 2.600L7.400 5 5 7.400 2.600 5z" fill="#5cc6ff"/></svg>
<span class="t" style="left:134.60px;top:156.14px;font:8.6px/10.32px 'Liberation Sans',sans-serif;color:#eef0fa;transform:scaleX(0.7400);">sdram_clk</span>
<svg style="left:120.6px;top:167.7px;" width="10" height="10" viewBox="0 0 10 10"><path d="M5 .4L9.600 5 5 9.600.4 5z" fill="#1e90e6"/><path d="M5 .4L9.600 5H5z" fill="#0a5cc0"/><path d="M5 .4L.4 5h3z" fill="#8fdcff"/><path d="M5 9.600L.4 5H5z" fill="#3ab4f6"/><path d="M5 2.600L7.400 5 5 7.400 2.600 5z" fill="#5cc6ff"/></svg>
<span class="t" style="left:134.60px;top:168.14px;font:8.6px/10.32px 'Liberation Sans',sans-serif;color:#eef0fa;transform:scaleX(0.7489);">sdram_cke</span>
<svg style="left:120.6px;top:179.7px;" width="10" height="10" viewBox="0 0 10 10"><path d="M5 .4L9.600 5 5 9.600.4 5z" fill="#1e90e6"/><path d="M5 .4L9.600 5H5z" fill="#0a5cc0"/><path d="M5 .4L.4 5h3z" fill="#8fdcff"/><path d="M5 9.600L.4 5H5z" fill="#3ab4f6"/><path d="M5 2.600L7.400 5 5 7.400 2.600 5z" fill="#5cc6ff"/></svg>
<span class="t" style="left:134.60px;top:180.14px;font:8.6px/10.32px 'Liberation Sans',sans-serif;color:#eef0fa;transform:scaleX(0.7608);">sdram_csn</span>
<svg style="left:110.6px;top:193.4px;" width="8" height="8" viewBox="0 0 8 8"><rect x=".9" y=".9" width="6.200" height="6.200" fill="#f6f6f6"/><path d="M2.300 4h3.400M4 2.300v3.400" stroke="#111" stroke-width="1.100"/></svg>
<svg style="left:120.6px;top:191.7px;" width="10" height="10" viewBox="0 0 10 10"><path d="M5 .4L9.600 5 5 9.600.4 5z" fill="#1e90e6"/><path d="M5 .4L9.600 5H5z" fill="#0a5cc0"/><path d="M5 .4L.4 5h3z" fill="#8fdcff"/><path d="M5 9.600L.4 5H5z" fill="#3ab4f6"/><path d="M5 2.600L7.400 5 5 7.400 2.600 5z" fill="#5cc6ff"/></svg>
<span class="t" style="left:134.60px;top:192.14px;font:8.6px/10.32px 'Liberation Sans',sans-serif;color:#eef0fa;transform:scaleX(0.7378);">sdram_dqm</span>
<svg style="left:120.6px;top:203.7px;" width="10" height="10" viewBox="0 0 10 10"><path d="M5 .4L9.600 5 5 9.600.4 5z" fill="#1e90e6"/><path d="M5 .4L9.600 5H5z" fill="#0a5cc0"/><path d="M5 .4L.4 5h3z" fill="#8fdcff"/><path d="M5 9.600L.4 5H5z" fill="#3ab4f6"/><path d="M5 2.600L7.400 5 5 7.400 2.600 5z" fill="#5cc6ff"/></svg>
<span class="t" style="left:134.60px;top:204.14px;font:8.6px/10.32px 'Liberation Sans',sans-serif;color:#eef0fa;transform:scaleX(0.7378);">sdram_rasn</span>
<svg style="left:120.6px;top:215.7px;" width="10" height="10" viewBox="0 0 10 10"><path d="M5 .4L9.600 5 5 9.600.4 5z" fill="#1e90e6"/><path d="M5 .4L9.600 5H5z" fill="#0a5cc0"/><path d="M5 .4L.4 5h3z" fill="#8fdcff"/><path d="M5 9.600L.4 5H5z" fill="#3ab4f6"/><path d="M5 2.600L7.400 5 5 7.400 2.600 5z" fill="#5cc6ff"/></svg>
<span class="t" style="left:134.60px;top:216.14px;font:8.6px/10.32px 'Liberation Sans',sans-serif;color:#eef0fa;transform:scaleX(0.7365);">sdram_casn</span>
<svg style="left:120.6px;top:227.7px;" width="10" height="10" viewBox="0 0 10 10"><path d="M5 .4L9.600 5 5 9.600.4 5z" fill="#1e90e6"/><path d="M5 .4L9.600 5H5z" fill="#0a5cc0"/><path d="M5 .4L.4 5h3z" fill="#8fdcff"/><path d="M5 9.600L.4 5H5z" fill="#3ab4f6"/><path d="M5 2.600L7.400 5 5 7.400 2.600 5z" fill="#5cc6ff"/></svg>
<span class="t" style="left:134.60px;top:228.14px;font:8.6px/10.32px 'Liberation Sans',sans-serif;color:#eef0fa;transform:scaleX(0.7311);">sdram_wen</span>
<svg style="left:110.6px;top:241.4px;" width="8" height="8" viewBox="0 0 8 8"><rect x=".9" y=".9" width="6.200" height="6.200" fill="#f6f6f6"/><path d="M2.300 4h3.400M4 2.300v3.400" stroke="#111" stroke-width="1.100"/></svg>
<svg style="left:120.6px;top:239.7px;" width="10" height="10" viewBox="0 0 10 10"><path d="M5 .4L9.600 5 5 9.600.4 5z" fill="#1e90e6"/><path d="M5 .4L9.600 5H5z" fill="#0a5cc0"/><path d="M5 .4L.4 5h3z" fill="#8fdcff"/><path d="M5 9.600L.4 5H5z" fill="#3ab4f6"/><path d="M5 2.600L7.400 5 5 7.400 2.600 5z" fill="#5cc6ff"/></svg>
<span class="t" style="left:134.60px;top:240.14px;font:8.6px/10.32px 'Liberation Sans',sans-serif;color:#eef0fa;transform:scaleX(0.7321);">sdram_ba</span>
<svg style="left:110.6px;top:253.39999999999998px;" width="8" height="8" viewBox="0 0 8 8"><rect x=".9" y=".9" width="6.200" height="6.200" fill="#f6f6f6"/><path d="M2.300 4h3.400M4 2.300v3.400" stroke="#111" stroke-width="1.100"/></svg>
<svg style="left:120.6px;top:251.7px;" width="10" height="10" viewBox="0 0 10 10"><path d="M5 .4L9.600 5 5 9.600.4 5z" fill="#1e90e6"/><path d="M5 .4L9.600 5H5z" fill="#0a5cc0"/><path d="M5 .4L.4 5h3z" fill="#8fdcff"/><path d="M5 9.600L.4 5H5z" fill="#3ab4f6"/><path d="M5 2.600L7.400 5 5 7.400 2.600 5z" fill="#5cc6ff"/></svg>
<span class="t" style="left:134.60px;top:252.14px;font:8.6px/10.32px 'Liberation Sans',sans-serif;color:#eef0fa;transform:scaleX(0.7300);">sdram_addr</span>
<svg style="left:110.6px;top:265.4px;" width="8" height="8" viewBox="0 0 8 8"><rect x=".9" y=".9" width="6.200" height="6.200" fill="#f6f6f6"/><path d="M2.300 4h3.400M4 2.300v3.400" stroke="#111" stroke-width="1.100"/></svg>
<svg style="left:120.6px;top:263.7px;" width="10" height="10" viewBox="0 0 10 10"><path d="M5 .4L9.600 5 5 9.600.4 5z" fill="#1e90e6"/><path d="M5 .4L9.600 5H5z" fill="#0a5cc0"/><path d="M5 .4L.4 5h3z" fill="#8fdcff"/><path d="M5 9.600L.4 5H5z" fill="#3ab4f6"/><path d="M5 2.600L7.400 5 5 7.400 2.600 5z" fill="#5cc6ff"/></svg>
<span class="t" style="left:134.60px;top:264.14px;font:8.6px/10.32px 'Liberation Sans',sans-serif;color:#eef0fa;transform:scaleX(0.7321);">sdram_dq</span>
<svg style="left:120.6px;top:275.7px;" width="10" height="10" viewBox="0 0 10 10"><path d="M5 .4L9.600 5 5 9.600.4 5z" fill="#1e90e6"/><path d="M5 .4L9.600 5H5z" fill="#0a5cc0"/><path d="M5 .4L.4 5h3z" fill="#8fdcff"/><path d="M5 9.600L.4 5H5z" fill="#3ab4f6"/><path d="M5 2.600L7.400 5 5 7.400 2.600 5z" fill="#5cc6ff"/></svg>
<span class="t" style="left:134.60px;top:276.14px;font:8.6px/10.32px 'Liberation Sans',sans-serif;color:#eef0fa;transform:scaleX(0.7402);">i2c_scl0</span>
<svg style="left:120.6px;top:287.7px;" width="10" height="10" viewBox="0 0 10 10"><path d="M5 .4L9.600 5 5 9.600.4 5z" fill="#1e90e6"/><path d="M5 .4L9.600 5H5z" fill="#0a5cc0"/><path d="M5 .4L.4 5h3z" fill="#8fdcff"/><path d="M5 9.600L.4 5H5z" fill="#3ab4f6"/><path d="M5 2.600L7.400 5 5 7.400 2.600 5z" fill="#5cc6ff"/></svg>
<span class="t" style="left:134.60px;top:288.14px;font:8.6px/10.32px 'Liberation Sans',sans-serif;color:#eef0fa;transform:scaleX(0.7262);">i2c_sda0</span>
<svg style="left:120.6px;top:299.7px;" width="10" height="10" viewBox="0 0 10 10"><path d="M5 .4L9.600 5 5 9.600.4 5z" fill="#1e90e6"/><path d="M5 .4L9.600 5H5z" fill="#0a5cc0"/><path d="M5 .4L.4 5h3z" fill="#8fdcff"/><path d="M5 9.600L.4 5H5z" fill="#3ab4f6"/><path d="M5 2.600L7.400 5 5 7.400 2.600 5z" fill="#5cc6ff"/></svg>
<span class="t" style="left:134.60px;top:300.14px;font:8.6px/10.32px 'Liberation Sans',sans-serif;color:#eef0fa;transform:scaleX(0.7402);">i2c_scl1</span>
<svg style="left:120.6px;top:311.7px;" width="10" height="10" viewBox="0 0 10 10"><path d="M5 .4L9.600 5 5 9.600.4 5z" fill="#1e90e6"/><path d="M5 .4L9.600 5H5z" fill="#0a5cc0"/><path d="M5 .4L.4 5h3z" fill="#8fdcff"/><path d="M5 9.600L.4 5H5z" fill="#3ab4f6"/><path d="M5 2.600L7.400 5 5 7.400 2.600 5z" fill="#5cc6ff"/></svg>
<span class="t" style="left:134.60px;top:312.14px;font:8.6px/10.32px 'Liberation Sans',sans-serif;color:#eef0fa;transform:scaleX(0.7262);">i2c_sda1</span>
<svg style="left:110.6px;top:325.4px;" width="8" height="8" viewBox="0 0 8 8"><rect x=".9" y=".9" width="6.200" height="6.200" fill="#f6f6f6"/><path d="M2.300 4h3.400M4 2.300v3.400" stroke="#111" stroke-width="1.100"/></svg>
<svg style="left:120.6px;top:323.7px;" width="10" height="10" viewBox="0 0 10 10"><path d="M5 .4L9.600 5 5 9.600.4 5z" fill="#1e90e6"/><path d="M5 .4L9.600 5H5z" fill="#0a5cc0"/><path d="M5 .4L.4 5h3z" fill="#8fdcff"/><path d="M5 9.600L.4 5H5z" fill="#3ab4f6"/><path d="M5 2.600L7.400 5 5 7.400 2.600 5z" fill="#5cc6ff"/></svg>
<span class="t" style="left:134.60px;top:324.14px;font:8.6px/10.32px 'Liberation Sans',sans-serif;color:#eef0fa;transform:scaleX(0.7488);">jtag_data</span>
<svg style="left:110.6px;top:337.4px;" width="8" height="8" viewBox="0 0 8 8"><rect x=".9" y=".9" width="6.200" height="6.200" fill="#f6f6f6"/><path d="M2.300 4h3.400M4 2.300v3.400" stroke="#111" stroke-width="1.100"/></svg>
<svg style="left:120.6px;top:335.7px;" width="10" height="10" viewBox="0 0 10 10"><path d="M5 .4L9.600 5 5 9.600.4 5z" fill="#1e90e6"/><path d="M5 .4L9.600 5H5z" fill="#0a5cc0"/><path d="M5 .4L.4 5h3z" fill="#8fdcff"/><path d="M5 9.600L.4 5H5z" fill="#3ab4f6"/><path d="M5 2.600L7.400 5 5 7.400 2.600 5z" fill="#5cc6ff"/></svg>
<span class="t" style="left:134.60px;top:336.14px;font:8.6px/10.32px 'Liberation Sans',sans-serif;color:#eef0fa;transform:scaleX(0.7270);">count_bcc</span>
<svg style="left:110.6px;top:349.4px;" width="8" height="8" viewBox="0 0 8 8"><rect x=".9" y=".9" width="6.200" height="6.200" fill="#f6f6f6"/><path d="M2.300 4h3.400M4 2.300v3.400" stroke="#111" stroke-width="1.100"/></svg>
<svg style="left:120.6px;top:347.7px;" width="10" height="10" viewBox="0 0 10 10"><path d="M5 .4L9.600 5 5 9.600.4 5z" fill="#1e90e6"/><path d="M5 .4L9.600 5H5z" fill="#0a5cc0"/><path d="M5 .4L.4 5h3z" fill="#8fdcff"/><path d="M5 9.600L.4 5H5z" fill="#3ab4f6"/><path d="M5 2.600L7.400 5 5 7.400 2.600 5z" fill="#5cc6ff"/></svg>
<span class="t" style="left:134.60px;top:348.14px;font:8.6px/10.32px 'Liberation Sans',sans-serif;color:#eef0fa;transform:scaleX(0.7338);">count_bcc_stall</span>
<svg style="left:110.6px;top:361.4px;" width="8" height="8" viewBox="0 0 8 8"><rect x=".9" y=".9" width="6.200" height="6.200" fill="#f6f6f6"/><path d="M2.300 4h3.400M4 2.300v3.400" stroke="#111" stroke-width="1.100"/></svg>
<svg style="left:120.6px;top:359.7px;" width="10" height="10" viewBox="0 0 10 10"><path d="M5 .4L9.600 5 5 9.600.4 5z" fill="#1e90e6"/><path d="M5 .4L9.600 5H5z" fill="#0a5cc0"/><path d="M5 .4L.4 5h3z" fill="#8fdcff"/><path d="M5 9.600L.4 5H5z" fill="#3ab4f6"/><path d="M5 2.600L7.400 5 5 7.400 2.600 5z" fill="#5cc6ff"/></svg>
<span class="t" style="left:134.60px;top:360.14px;font:8.6px/10.32px 'Liberation Sans',sans-serif;color:#eef0fa;transform:scaleX(0.7305);">count_bcc_taken</span>
<svg style="left:110.6px;top:373.4px;" width="8" height="8" viewBox="0 0 8 8"><rect x=".9" y=".9" width="6.200" height="6.200" fill="#f6f6f6"/><path d="M2.300 4h3.400M4 2.300v3.400" stroke="#111" stroke-width="1.100"/></svg>
<svg style="left:120.6px;top:371.7px;" width="10" height="10" viewBox="0 0 10 10"><path d="M5 .4L9.600 5 5 9.600.4 5z" fill="#1e90e6"/><path d="M5 .4L9.600 5H5z" fill="#0a5cc0"/><path d="M5 .4L.4 5h3z" fill="#8fdcff"/><path d="M5 9.600L.4 5H5z" fill="#3ab4f6"/><path d="M5 2.600L7.400 5 5 7.400 2.600 5z" fill="#5cc6ff"/></svg>
<span class="t" style="left:134.60px;top:372.14px;font:8.6px/10.32px 'Liberation Sans',sans-serif;color:#eef0fa;transform:scaleX(0.7277);">count_bcc_not_taken</span>
<svg style="left:120.6px;top:383.7px;" width="10" height="10" viewBox="0 0 10 10"><path d="M5 .4L9.600 5 5 9.600.4 5z" fill="#1e90e6"/><path d="M5 .4L9.600 5H5z" fill="#0a5cc0"/><path d="M5 .4L.4 5h3z" fill="#8fdcff"/><path d="M5 9.600L.4 5H5z" fill="#3ab4f6"/><path d="M5 2.600L7.400 5 5 7.400 2.600 5z" fill="#5cc6ff"/></svg>
<span class="t" style="left:134.60px;top:384.14px;font:8.6px/10.32px 'Liberation Sans',sans-serif;color:#eef0fa;transform:scaleX(0.7190);">cpu_res</span>
<svg style="left:120.6px;top:395.7px;" width="10" height="10" viewBox="0 0 10 10"><path d="M5 .4L9.600 5 5 9.600.4 5z" fill="#1e90e6"/><path d="M5 .4L9.600 5H5z" fill="#0a5cc0"/><path d="M5 .4L.4 5h3z" fill="#8fdcff"/><path d="M5 9.600L.4 5H5z" fill="#3ab4f6"/><path d="M5 2.600L7.400 5 5 7.400 2.600 5z" fill="#5cc6ff"/></svg>
<span class="t" style="left:134.60px;top:396.14px;font:8.6px/10.32px 'Liberation Sans',sans-serif;color:#eef0fa;transform:scaleX(0.7373);">cpu_clk</span>
<svg style="left:120.6px;top:407.7px;" width="10" height="10" viewBox="0 0 10 10"><path d="M5 .4L9.600 5 5 9.600.4 5z" fill="#1e90e6"/><path d="M5 .4L9.600 5H5z" fill="#0a5cc0"/><path d="M5 .4L.4 5h3z" fill="#8fdcff"/><path d="M5 9.600L.4 5H5z" fill="#3ab4f6"/><path d="M5 2.600L7.400 5 5 7.400 2.600 5z" fill="#5cc6ff"/></svg>
<span class="t" style="left:134.60px;top:408.14px;font:8.6px/10.32px 'Liberation Sans',sans-serif;color:#eef0fa;transform:scaleX(0.7365);">cpu_stall</span>
<svg style="left:120.6px;top:419.7px;" width="10" height="10" viewBox="0 0 10 10"><path d="M5 .4L9.600 5 5 9.600.4 5z" fill="#1e90e6"/><path d="M5 .4L9.600 5H5z" fill="#0a5cc0"/><path d="M5 .4L.4 5h3z" fill="#8fdcff"/><path d="M5 9.600L.4 5H5z" fill="#3ab4f6"/><path d="M5 2.600L7.400 5 5 7.400 2.600 5z" fill="#5cc6ff"/></svg>
<span class="t" style="left:134.60px;top:420.14px;font:8.6px/10.32px 'Liberation Sans',sans-serif;color:#eef0fa;transform:scaleX(0.7336);">cpu_bcc</span>
<div style="left:263.5px;top:145px;width:8.5px;height:289px;background:#c6c6c6;"></div>
<div style="left:263.5px;top:342px;width:8.5px;height:80px;background:#fbfbfb;box-sizing:border-box;border:0.500px solid #ddd;"></div>
<svg style="left:263.5px;top:145px;" width="8.5" height="289" viewBox="0 0 8.5 289"><path d="M4.25 0.75L7.5 7.25L1.0 7.25z" fill="#f4f4f4" stroke="#aaa" stroke-width="0.600"/><path d="M4.25 288.25L7.5 281.75L1.0 281.75z" fill="#f4f4f4" stroke="#aaa" stroke-width="0.600"/></svg>
<div style="left:107.4px;top:436.6px;width:154px;height:8px;background:#c6c6c6;"></div>
<div style="left:115.5px;top:436.6px;width:53.5px;height:8px;background:#fbfbfb;box-sizing:border-box;border:0.500px solid #ddd;"></div>
<svg style="left:107.4px;top:436.6px;" width="154" height="8" viewBox="0 0 154 8"><path d="M0.75 4.0L7.25 0.75L7.25 7.25z" fill="#f4f4f4" stroke="#aaa" stroke-width="0.600"/><path d="M153.25 4.0L146.75 0.75L146.75 7.25z" fill="#f4f4f4" stroke="#aaa" stroke-width="0.600"/></svg>
<div style="left:261.5px;top:434px;width:11.5px;height:11.6px;background:#fff;"></div>
<div style="left:107px;top:451px;width:166px;height:81.5px;background:#fff;"></div>
<svg style="left:108px;top:451.8px;" width="12" height="12" viewBox="0 0 12 12"><g stroke="#4c7cb4" stroke-width="2.200"><path d="M6 .6v10.800M.6 6h10.800M2.200 2.200l7.600 7.600M9.800 2.200l-7.600 7.600"/></g><circle cx="6" cy="6" r="4" fill="#5888c0"/><circle cx="6" cy="6" r="1.700" fill="#e4ecf6"/></svg>
<span class="t" style="left:121.80px;top:452.20px;font:9px/10.80px 'Liberation Sans',sans-serif;color:#222;transform:scaleX(0.8864);">Processes (Active)</span>
<div style="left:192.5px;top:456.2px;width:12.75px;height:0.9px;background:#c4c4c4;"></div>
<div style="left:221.25px;top:456.2px;width:12.75px;height:0.9px;background:#c4c4c4;"></div>
<div style="left:192.5px;top:459.0px;width:12.75px;height:0.9px;background:#c4c4c4;"></div>
<div style="left:221.25px;top:459.0px;width:12.75px;height:0.9px;background:#c4c4c4;"></div>
<svg style="left:206.25px;top:454.8px;" width="14" height="6" viewBox="0 0 14 6"><path d="M0 1h14M0 3h14M0 5h14" stroke="#c0c0c8" stroke-width="0.9" stroke-dasharray="1.200 1"/></svg>
<div style="left:236px;top:452.5px;width:10px;height:10px;background:#fff;box-sizing:border-box;border:1px solid #f2f2f2;border-right-color:#b8b8b8;border-bottom-color:#b8b8b8;"></div>
<svg style="left:236px;top:452.5px;" width="10" height="10" viewBox="0 0 10 10"><path d="M5 2.200v5.600M2.200 5h5.600" stroke="#000" stroke-width="1.500"/></svg>
<div style="left:248px;top:452.5px;width:10px;height:10px;background:#fff;box-sizing:border-box;border:1px solid #f2f2f2;border-right-color:#b8b8b8;border-bottom-color:#b8b8b8;"></div>
<svg style="left:248px;top:452.5px;" width="10" height="10" viewBox="0 0 10 10"><rect x="2.400" y="4.600" width="3.200" height="3.200" fill="none" stroke="#222" stroke-width="0.9"/><path d="M4.600 5.600l3-3M5.400 2.400h2.400v2.400" stroke="#111" stroke-width="1" fill="none"/></svg>
<div style="left:260.8px;top:452.5px;width:10px;height:10px;background:#fff;box-sizing:border-box;border:1px solid #f2f2f2;border-right-color:#b8b8b8;border-bottom-color:#b8b8b8;"></div>
<svg style="left:260.8px;top:452.5px;" width="10" height="10" viewBox="0 0 10 10"><path d="M2.600 2.600l4.800 4.800M7.400 2.600l-4.800 4.800" stroke="#000" stroke-width="1.200"/></svg>
<div style="left:108px;top:464.6px;width:8.5px;height:10.8px;background:#fff;box-sizing:border-box;border-right:1px solid #bbb;border-bottom:1px solid #bbb;"></div>
<svg style="left:108px;top:464.6px;" width="8.5" height="10.8" viewBox="0 0 8.5 10.8"><path d="M1.600 2.8000000000000003h5.400L4.300 8.2z" fill="#222"/></svg>
<div style="left:116.5px;top:464.6px;width:80px;height:10.8px;background:#fff;box-sizing:border-box;border-bottom:1px solid #b8b8b8;border-right:1px solid #c4c4c4;"></div>
<span class="t" style="left:118.80px;top:463.96px;font:9.4px/11.28px 'Liberation Sans',sans-serif;color:#111;transform:scaleX(0.8574);">Name</span>
<div style="left:196.5px;top:464.6px;width:65px;height:10.8px;background:#fff;box-sizing:border-box;border-bottom:1px solid #b8b8b8;border-right:1px solid #c4c4c4;"></div>
<span class="t" style="left:198.00px;top:463.96px;font:9.4px/11.28px 'Liberation Sans',sans-serif;color:#111;transform:scaleX(0.8701);">Type (filtered)</span>
<div style="left:107.4px;top:476px;width:154px;height:44.8px;background:#7b97f6;"></div>
<div style="left:107.400px;top:476px;width:154px;height:44.800px;overflow:hidden;background:none">
<svg style="left:14.0px;top:3.4999999999999885px" width="9" height="9" viewBox="0 0 9 9"><circle cx="4.500" cy="4.500" r="4.200" fill="url(#bg)"/></svg>
<span class="t" style="left:27.299999999999983px;top:3.399999999999989px;font:8.600px/10px 'Liberation Sans',sans-serif;color:#e8ecff;transform:scaleX(0.7534)">#ASSIGN#879</span>
<span class="t" style="left:90.5px;top:3.399999999999989px;font:8.600px/10px 'Liberation Sans',sans-serif;color:#e8ecff;transform:scaleX(0.7748)">Assign</span>
<svg style="left:14.0px;top:15.49999999999999px" width="9" height="9" viewBox="0 0 9 9"><circle cx="4.500" cy="4.500" r="4.200" fill="url(#bg)"/></svg>
<span class="t" style="left:27.299999999999983px;top:15.399999999999988px;font:8.600px/10px 'Liberation Sans',sans-serif;color:#e8ecff;transform:scaleX(0.7534)">#ASSIGN#127</span>
<span class="t" style="left:90.5px;top:15.399999999999988px;font:8.600px/10px 'Liberation Sans',sans-serif;color:#e8ecff;transform:scaleX(0.7748)">Assign</span>
<svg style="left:14.0px;top:27.49999999999999px" width="9" height="9" viewBox="0 0 9 9"><circle cx="4.500" cy="4.500" r="4.200" fill="url(#bg)"/></svg>
<span class="t" style="left:27.299999999999983px;top:27.399999999999988px;font:8.600px/10px 'Liberation Sans',sans-serif;color:#e8ecff;transform:scaleX(0.7534)">#ASSIGN#124</span>
<span class="t" style="left:90.5px;top:27.399999999999988px;font:8.600px/10px 'Liberation Sans',sans-serif;color:#e8ecff;transform:scaleX(0.7748)">Assign</span>
<svg style="left:14.0px;top:39.50000000000004px" width="9" height="9" viewBox="0 0 9 9"><circle cx="4.500" cy="4.500" r="4.200" fill="url(#bg)"/></svg>
<span class="t" style="left:27.299999999999983px;top:39.40000000000005px;font:8.600px/10px 'Liberation Sans',sans-serif;color:#e8ecff;transform:scaleX(0.7534)">#ASSIGN#242</span>
<span class="t" style="left:90.5px;top:39.40000000000005px;font:8.600px/10px 'Liberation Sans',sans-serif;color:#e8ecff;transform:scaleX(0.7748)">Assign</span>
</div>
<svg style="left:-24.5px;top:-24.5px;" width="9" height="9" viewBox="0 0 9 9"><defs><radialGradient id="bg" cx="35%" cy="30%" r="75%"><stop offset="0" stop-color="#c8f4ff"/><stop offset="0.35" stop-color="#22a4e0"/><stop offset="1" stop-color="#045a9c"/></radialGradient></defs><circle cx="4.500" cy="4.500" r="4.200" fill="url(#bg)"/></svg>
<div style="left:263.5px;top:464.6px;width:8.5px;height:56.5px;background:#c6c6c6;"></div>
<div style="left:263.5px;top:469px;width:8.5px;height:5.5px;background:#fbfbfb;box-sizing:border-box;border:0.500px solid #ddd;"></div>
<svg style="left:263.5px;top:464.6px;" width="8.5" height="56.5" viewBox="0 0 8.5 56.5"><path d="M4.25 0.75L7.5 7.25L1.0 7.25z" fill="#f4f4f4" stroke="#aaa" stroke-width="0.600"/><path d="M4.25 55.75L7.5 49.25L1.0 49.25z" fill="#f4f4f4" stroke="#aaa" stroke-width="0.600"/></svg>
<div style="left:107.4px;top:523.8px;width:154px;height:8px;background:#c6c6c6;"></div>
<div style="left:115.5px;top:523.8px;width:42.0px;height:8px;background:#fbfbfb;box-sizing:border-box;border:0.500px solid #ddd;"></div>
<svg style="left:107.4px;top:523.8px;" width="154" height="8" viewBox="0 0 154 8"><path d="M0.75 4.0L7.25 0.75L7.25 7.25z" fill="#f4f4f4" stroke="#aaa" stroke-width="0.600"/><path d="M153.25 4.0L146.75 0.75L146.75 7.25z" fill="#f4f4f4" stroke="#aaa" stroke-width="0.600"/></svg>
<div style="left:261.5px;top:521px;width:11.5px;height:11.5px;background:#fff;"></div>
<div style="left:276.5px;top:131px;width:5px;height:402px;background:#e0e0e0;"></div>
<div style="left:277.3px;top:131px;width:1.6px;height:402px;background:#c8c8c8;"></div>
<div style="left:281px;top:131px;width:961.5px;height:402px;background:#fff;"></div>
<div style="left:280.5px;top:132px;width:962px;height:11.8px;background:linear-gradient(#6a7ec4,#5468b4 45%,#4a5ea8);"></div>
<svg style="left:347px;top:132px;" width="860" height="11.8" viewBox="0 0 860 11.8"><path d="M0 3h860M0 5.900h860M0 8.800h860" stroke="#8496d4" stroke-width="1"/><path d="M0 4.400h860M0 7.300h860" stroke="#4054a0" stroke-width="0.900"/></svg>
<svg style="left:770px;top:134.5px;" width="13" height="7" viewBox="0 0 13 7"><rect width="13" height="7" fill="#5468b4"/><path d="M0 1.500h13M0 3.500h13M0 5.500h13" stroke="#98a8e0" stroke-width="0.900" stroke-dasharray="1.200 1"/></svg>
<svg style="left:281px;top:132.6px;" width="10.5" height="10.8" viewBox="0 0 10.5 10.8"><rect x=".3" y=".8" width="9.800" height="9.600" fill="#111" stroke="#ccc" stroke-width="0.500"/><rect x="1.400" y="2" width="7.600" height="1.600" fill="#ddd"/><path d="M2 8.600V5.200h2v3.400M5.200 8.600V5.200h2.600" stroke="#20c040" stroke-width="1" fill="none"/></svg>
<span class="t" style="left:293.00px;top:132.92px;font:9.3px/11.16px 'Liberation Sans',sans-serif;color:#eef0fa;transform:scaleX(0.8748);">Wave - Default</span>
<div style="left:1205px;top:132.8px;width:10px;height:10px;background:#fff;box-sizing:border-box;border:1px solid #f2f2f2;border-right-color:#b8b8b8;border-bottom-color:#b8b8b8;"></div>
<svg style="left:1205px;top:132.8px;" width="10" height="10" viewBox="0 0 10 10"><path d="M5 2.200v5.600M2.200 5h5.600" stroke="#000" stroke-width="1.500"/></svg>
<div style="left:1217.3px;top:132.8px;width:10px;height:10px;background:#fff;box-sizing:border-box;border:1px solid #f2f2f2;border-right-color:#b8b8b8;border-bottom-color:#b8b8b8;"></div>
<svg style="left:1217.3px;top:132.8px;" width="10" height="10" viewBox="0 0 10 10"><rect x="2.400" y="4.600" width="3.200" height="3.200" fill="none" stroke="#222" stroke-width="0.9"/><path d="M4.600 5.600l3-3M5.400 2.400h2.400v2.400" stroke="#111" stroke-width="1" fill="none"/></svg>
<div style="left:1230px;top:132.8px;width:10px;height:10px;background:#fff;box-sizing:border-box;border:1px solid #f2f2f2;border-right-color:#b8b8b8;border-bottom-color:#b8b8b8;"></div>
<svg style="left:1230px;top:132.8px;" width="10" height="10" viewBox="0 0 10 10"><path d="M2.600 2.600l4.800 4.800M7.400 2.600l-4.800 4.800" stroke="#000" stroke-width="1.200"/></svg>
<div style="left:280px;top:143.8px;width:962.5px;height:1.2px;background:#e8ecf8;"></div>
<div style="left:281px;top:145px;width:169px;height:13px;background:#747474;"></div>
<div style="left:281px;top:158px;width:5.2px;height:325px;background:#fdfdfd;"></div>
<div style="left:285.8px;top:145px;width:0.8px;height:376px;background:#e8e8e8;"></div>
<div style="left:286.3px;top:159.6px;width:163.3px;height:323px;background:#747474;"></div>
<div style="left:286.3px;top:158.3px;width:163.5px;height:1.3px;background:#f4f4f4;"></div>
<div style="left:449.6px;top:145px;width:2px;height:376px;background:#f2f2f2;"></div>
<div style="left:451.5px;top:145px;width:67px;height:13px;background:#747474;"></div>
<div style="left:451.5px;top:158.3px;width:67px;height:1.3px;background:#f4f4f4;"></div>
<div style="left:451.5px;top:159.6px;width:67px;height:323px;background:#747474;"></div>
<div style="left:518.5px;top:145px;width:1.5px;height:376px;background:#f2f2f2;"></div>
<div style="left:287px;top:146px;width:18.5px;height:11.8px;background:#7c7c7c;box-sizing:border-box;border:1px solid #a4a4a4;border-right-color:#444;border-bottom-color:#444;"></div>
<svg style="left:289px;top:146.2px;" width="13" height="12" viewBox="0 0 13 13" preserveAspectRatio="none"><rect x="6" y="4.300" width="4.800" height="4.500" fill="#0c8a52"/><path d="M.2 6.600L4 1.600l4 4-4.400 5.900z" fill="#1242e0"/><path d="M3.600 2.500l4 3-2 1.500L2.100 4.200z" fill="#22c2f8"/><path d="M.5 4.600L4.200 .9" stroke="#c222b2" stroke-width="1.300"/></svg>
<svg style="left:301px;top:152px;" width="4" height="5" viewBox="0 0 4 5"><path d="M.4 1.200h3.200L2 3.600z" fill="#000"/></svg>
<span class="t" style="left:497.00px;top:146.52px;font:8.8px/10.56px 'Liberation Sans',sans-serif;color:#e0e0e0;transform:scaleX(0.8561);">Msgs</span>
<svg style="left:288.7px;top:165.5px;" width="8" height="8" viewBox="0 0 8 8"><rect x=".5" y=".5" width="7" height="7" fill="#f4f4f4" stroke="#ddd" stroke-width="0.600"/><path d="M2 4h4M4 2v4" stroke="#111" stroke-width="1.100"/></svg>
<svg style="left:297.6px;top:162.79999999999998px;" width="12" height="13" viewBox="0 0 12 13"><path d="M6 .6L11 5.400 6 10.200 1 5.400z" fill="#1e8ce4"/><path d="M6 .6L11 5.400H6z" fill="#0a58bc"/><path d="M6 .6L1 5.400h3.200z" fill="#9fe0ff"/><path d="M6 10.200L1 5.400h5z" fill="#38b0f4"/><path d="M6 2.800l2.600 2.600L6 8 3.400 5.400z" fill="#5cc4ff"/><path d="M.4 9.400l3.400-2.600v1.600h4v2.200h-4v1.600z" fill="#30c040" stroke="#0a6a1a" stroke-width="0.500"/></svg>
<span class="t" style="left:314.40px;top:161.92px;font:11.8px/14.16px 'Liberation Sans',sans-serif;color:#f2eee6;transform:scaleX(0.8365);">...OP/U_CPU_CSR/MCAUSE</span>
<span class="t" style="left:453.00px;top:161.92px;font:11.8px/14.16px 'Liberation Sans',sans-serif;color:#f2eee6;transform:scaleX(0.7900);">32&#x27;h00000000</span>
<svg style="left:297.6px;top:179.46669999999997px;" width="12" height="13" viewBox="0 0 12 13"><path d="M6 .6L11 5.400 6 10.200 1 5.400z" fill="#1e8ce4"/><path d="M6 .6L11 5.400H6z" fill="#0a58bc"/><path d="M6 .6L1 5.400h3.200z" fill="#9fe0ff"/><path d="M6 10.200L1 5.400h5z" fill="#38b0f4"/><path d="M6 2.800l2.600 2.600L6 8 3.400 5.400z" fill="#5cc4ff"/><path d="M.4 9.400l3.400-2.600v1.600h4v2.200h-4v1.600z" fill="#30c040" stroke="#0a6a1a" stroke-width="0.500"/></svg>
<span class="t" style="left:314.40px;top:178.59px;font:11.8px/14.16px 'Liberation Sans',sans-serif;color:#f2eee6;transform:scaleX(0.8370);">...P/U_CPU_CSR/EXP_ACK</span>
<span class="t" style="left:453.00px;top:178.59px;font:11.8px/14.16px 'Liberation Sans',sans-serif;color:#f2eee6;transform:scaleX(0.7900);">1&#x27;h0</span>
<svg style="left:297.6px;top:196.13339999999997px;" width="12" height="13" viewBox="0 0 12 13"><path d="M6 .6L11 5.400 6 10.200 1 5.400z" fill="#1e8ce4"/><path d="M6 .6L11 5.400H6z" fill="#0a58bc"/><path d="M6 .6L1 5.400h3.200z" fill="#9fe0ff"/><path d="M6 10.200L1 5.400h5z" fill="#38b0f4"/><path d="M6 2.800l2.600 2.600L6 8 3.400 5.400z" fill="#5cc4ff"/><path d="M.4 9.400l3.400-2.600v1.600h4v2.200h-4v1.600z" fill="#30c040" stroke="#0a6a1a" stroke-width="0.500"/></svg>
<span class="t" style="left:314.40px;top:195.25px;font:11.8px/14.16px 'Liberation Sans',sans-serif;color:#f2eee6;transform:scaleX(0.8362);">.../U_CPU_CSR/MRET_ACK</span>
<span class="t" style="left:453.00px;top:195.25px;font:11.8px/14.16px 'Liberation Sans',sans-serif;color:#f2eee6;transform:scaleX(0.7900);">1&#x27;h0</span>
<svg style="left:297.6px;top:212.8001px;" width="12" height="13" viewBox="0 0 12 13"><path d="M6 .6L11 5.400 6 10.200 1 5.400z" fill="#1e8ce4"/><path d="M6 .6L11 5.400H6z" fill="#0a58bc"/><path d="M6 .6L1 5.400h3.200z" fill="#9fe0ff"/><path d="M6 10.200L1 5.400h5z" fill="#38b0f4"/><path d="M6 2.800l2.600 2.600L6 8 3.400 5.400z" fill="#5cc4ff"/><path d="M11.600 9.400L8.200 6.800v1.600h-4v2.200h4v1.600z" fill="#30c040" stroke="#0a6a1a" stroke-width="0.500"/></svg>
<span class="t" style="left:314.40px;top:211.92px;font:11.8px/14.16px 'Liberation Sans',sans-serif;color:#f2eee6;transform:scaleX(0.8349);">...OP/U_CPU_CSR/INT_REQ</span>
<span class="t" style="left:453.00px;top:211.92px;font:11.8px/14.16px 'Liberation Sans',sans-serif;color:#f2eee6;transform:scaleX(0.7900);">1&#x27;h0</span>
<svg style="left:297.6px;top:229.46679999999998px;" width="12" height="13" viewBox="0 0 12 13"><path d="M6 .6L11 5.400 6 10.200 1 5.400z" fill="#1e8ce4"/><path d="M6 .6L11 5.400H6z" fill="#0a58bc"/><path d="M6 .6L1 5.400h3.200z" fill="#9fe0ff"/><path d="M6 10.200L1 5.400h5z" fill="#38b0f4"/><path d="M6 2.800l2.600 2.600L6 8 3.400 5.400z" fill="#5cc4ff"/><path d="M.4 9.400l3.400-2.600v1.600h4v2.200h-4v1.600z" fill="#30c040" stroke="#0a6a1a" stroke-width="0.500"/></svg>
<span class="t" style="left:314.40px;top:228.59px;font:11.8px/14.16px 'Liberation Sans',sans-serif;color:#f2eee6;transform:scaleX(0.8362);">...OP/U_CPU_CSR/INT_ACK</span>
<span class="t" style="left:453.00px;top:228.59px;font:11.8px/14.16px 'Liberation Sans',sans-serif;color:#f2eee6;transform:scaleX(0.7900);">1&#x27;h0</span>
<div style="left:287px;top:252.03349999999998px;width:13.5px;height:1px;background:#dcdcdc;"></div>
<div style="left:331px;top:252.03349999999998px;width:118.5px;height:1px;background:#dcdcdc;"></div>
<div style="left:451.5px;top:252.03349999999998px;width:67px;height:1px;background:#dcdcdc;"></div>
<span class="t" style="left:303.50px;top:245.97px;font:11.6px/13.92px 'Liberation Sans',sans-serif;color:#f0ece4;transform:scaleX(0.7651);">UART</span>
<svg style="left:297.6px;top:262.8002px;" width="12" height="13" viewBox="0 0 12 13"><path d="M6 .6L11 5.400 6 10.200 1 5.400z" fill="#1e8ce4"/><path d="M6 .6L11 5.400H6z" fill="#0a58bc"/><path d="M6 .6L1 5.400h3.200z" fill="#9fe0ff"/><path d="M6 10.200L1 5.400h5z" fill="#38b0f4"/><path d="M6 2.800l2.600 2.600L6 8 3.400 5.400z" fill="#5cc4ff"/><path d="M11.600 9.400L8.200 6.800v1.600h-4v2.200h4v1.600z" fill="#30c040" stroke="#0a6a1a" stroke-width="0.500"/></svg>
<span class="t" style="left:314.40px;top:261.92px;font:11.8px/14.16px 'Liberation Sans',sans-serif;color:#f2eee6;transform:scaleX(0.8349);">..._CHIP_TOP/U_UART/TXD</span>
<span class="t" style="left:453.00px;top:261.92px;font:11.8px/14.16px 'Liberation Sans',sans-serif;color:#f2eee6;transform:scaleX(0.7900);">1&#x27;h1</span>
<svg style="left:297.6px;top:279.4669px;" width="12" height="13" viewBox="0 0 12 13"><path d="M6 .6L11 5.400 6 10.200 1 5.400z" fill="#1e8ce4"/><path d="M6 .6L11 5.400H6z" fill="#0a58bc"/><path d="M6 .6L1 5.400h3.200z" fill="#9fe0ff"/><path d="M6 10.200L1 5.400h5z" fill="#38b0f4"/><path d="M6 2.800l2.600 2.600L6 8 3.400 5.400z" fill="#5cc4ff"/><path d="M.4 9.400l3.400-2.600v1.600h4v2.200h-4v1.600z" fill="#30c040" stroke="#0a6a1a" stroke-width="0.500"/></svg>
<span class="t" style="left:314.40px;top:278.59px;font:11.8px/14.16px 'Liberation Sans',sans-serif;color:#f2eee6;transform:scaleX(0.8375);">..._CHIP_TOP/U_UART/RXD</span>
<span class="t" style="left:453.00px;top:278.59px;font:11.8px/14.16px 'Liberation Sans',sans-serif;color:#f2eee6;transform:scaleX(0.7900);">1&#x27;h1</span>
<div style="left:281px;top:294.23359999999997px;width:168.6px;height:16.6px;background:#ffffff;"></div>
<div style="left:451.5px;top:294.23359999999997px;width:67px;height:16.6px;background:#ffffff;"></div>
<svg style="left:288.7px;top:298.8336px;" width="8" height="8" viewBox="0 0 8 8"><rect x=".5" y=".5" width="7" height="7" rx="1" fill="#f4f4f4" stroke="#b4b4b4" stroke-width="0.800"/><path d="M2.200 4h3.600M4 2.200v3.600" stroke="#333" stroke-width="0.9"/></svg>
<svg style="left:297.6px;top:296.1336px;" width="12" height="13" viewBox="0 0 12 13"><path d="M6 .6L11 5.400 6 10.200 1 5.400z" fill="#1e8ce4"/><path d="M6 .6L11 5.400H6z" fill="#0a58bc"/><path d="M6 .6L1 5.400h3.200z" fill="#9fe0ff"/><path d="M6 10.200L1 5.400h5z" fill="#38b0f4"/><path d="M6 2.800l2.600 2.600L6 8 3.400 5.400z" fill="#5cc4ff"/></svg>
<span class="t" style="left:314.40px;top:295.25px;font:11.8px/14.16px 'Liberation Sans',sans-serif;color:#111;transform:scaleX(0.8316);">..._CHIP_TOP/U_UART/din_i</span>
<span class="t" style="left:453.00px;top:295.25px;font:11.8px/14.16px 'Liberation Sans',sans-serif;color:#111;transform:scaleX(0.7900);">8&#x27;h20</span>
<svg style="left:288.7px;top:315.5003px;" width="8" height="8" viewBox="0 0 8 8"><rect x=".5" y=".5" width="7" height="7" fill="#f4f4f4" stroke="#ddd" stroke-width="0.600"/><path d="M2 4h4M4 2v4" stroke="#111" stroke-width="1.100"/></svg>
<svg style="left:297.6px;top:312.8003px;" width="12" height="13" viewBox="0 0 12 13"><path d="M6 .6L11 5.400 6 10.200 1 5.400z" fill="#1e8ce4"/><path d="M6 .6L11 5.400H6z" fill="#0a58bc"/><path d="M6 .6L1 5.400h3.200z" fill="#9fe0ff"/><path d="M6 10.200L1 5.400h5z" fill="#38b0f4"/><path d="M6 2.800l2.600 2.600L6 8 3.400 5.400z" fill="#5cc4ff"/></svg>
<span class="t" style="left:314.40px;top:311.92px;font:11.8px/14.16px 'Liberation Sans',sans-serif;color:#f2eee6;transform:scaleX(0.8308);">...CHIP_TOP/U_UART/dout_o</span>
<span class="t" style="left:453.00px;top:311.92px;font:11.8px/14.16px 'Liberation Sans',sans-serif;color:#f2eee6;transform:scaleX(0.7900);">8&#x27;hxx</span>
<svg style="left:297.6px;top:329.467px;" width="12" height="13" viewBox="0 0 12 13"><path d="M6 .6L11 5.400 6 10.200 1 5.400z" fill="#1e8ce4"/><path d="M6 .6L11 5.400H6z" fill="#0a58bc"/><path d="M6 .6L1 5.400h3.200z" fill="#9fe0ff"/><path d="M6 10.200L1 5.400h5z" fill="#38b0f4"/><path d="M6 2.800l2.600 2.600L6 8 3.400 5.400z" fill="#5cc4ff"/></svg>
<span class="t" style="left:314.40px;top:328.59px;font:11.8px/14.16px 'Liberation Sans',sans-serif;color:#f2eee6;transform:scaleX(0.8347);">...U_CHIP_TOP/U_UART/re_i</span>
<span class="t" style="left:453.00px;top:328.59px;font:11.8px/14.16px 'Liberation Sans',sans-serif;color:#f2eee6;transform:scaleX(0.7900);">1&#x27;h0</span>
<svg style="left:297.6px;top:346.1337px;" width="12" height="13" viewBox="0 0 12 13"><path d="M6 .6L11 5.400 6 10.200 1 5.400z" fill="#1e8ce4"/><path d="M6 .6L11 5.400H6z" fill="#0a58bc"/><path d="M6 .6L1 5.400h3.200z" fill="#9fe0ff"/><path d="M6 10.200L1 5.400h5z" fill="#38b0f4"/><path d="M6 2.800l2.600 2.600L6 8 3.400 5.400z" fill="#5cc4ff"/></svg>
<span class="t" style="left:314.40px;top:345.25px;font:11.8px/14.16px 'Liberation Sans',sans-serif;color:#f2eee6;transform:scaleX(0.8385);">..._CHIP_TOP/U_UART/we_i</span>
<span class="t" style="left:453.00px;top:345.25px;font:11.8px/14.16px 'Liberation Sans',sans-serif;color:#f2eee6;transform:scaleX(0.7900);">1&#x27;h1</span>
<svg style="left:297.6px;top:362.80039999999997px;" width="12" height="13" viewBox="0 0 12 13"><path d="M6 .6L11 5.400 6 10.200 1 5.400z" fill="#1e8ce4"/><path d="M6 .6L11 5.400H6z" fill="#0a58bc"/><path d="M6 .6L1 5.400h3.200z" fill="#9fe0ff"/><path d="M6 10.200L1 5.400h5z" fill="#38b0f4"/><path d="M6 2.800l2.600 2.600L6 8 3.400 5.400z" fill="#5cc4ff"/><path d="M11.600 9.400L8.200 6.800v1.600h-4v2.200h4v1.600z" fill="#30c040" stroke="#0a6a1a" stroke-width="0.500"/></svg>
<span class="t" style="left:314.40px;top:361.92px;font:11.8px/14.16px 'Liberation Sans',sans-serif;color:#f2eee6;transform:scaleX(0.8322);">..._TOP/U_UART/IRQ_UART</span>
<span class="t" style="left:453.00px;top:361.92px;font:11.8px/14.16px 'Liberation Sans',sans-serif;color:#f2eee6;transform:scaleX(0.7900);">1&#x27;h0</span>
<svg style="left:297.6px;top:379.46709999999996px;" width="12" height="13" viewBox="0 0 12 13"><path d="M6 .6L11 5.400 6 10.200 1 5.400z" fill="#1e8ce4"/><path d="M6 .6L11 5.400H6z" fill="#0a58bc"/><path d="M6 .6L1 5.400h3.200z" fill="#9fe0ff"/><path d="M6 10.200L1 5.400h5z" fill="#38b0f4"/><path d="M6 2.800l2.600 2.600L6 8 3.400 5.400z" fill="#5cc4ff"/><path d="M.4 9.400l3.400-2.600v1.600h4v2.200h-4v1.600z" fill="#30c040" stroke="#0a6a1a" stroke-width="0.500"/></svg>
<span class="t" style="left:314.40px;top:378.59px;font:11.8px/14.16px 'Liberation Sans',sans-serif;color:#f2eee6;transform:scaleX(0.8316);">...HIP_TOP/U_UART/BRG/clk</span>
<span class="t" style="left:453.00px;top:378.59px;font:11.8px/14.16px 'Liberation Sans',sans-serif;color:#f2eee6;transform:scaleX(0.7900);">1&#x27;h1</span>
<svg style="left:297.6px;top:396.1338px;" width="12" height="13" viewBox="0 0 12 13"><path d="M6 .6L11 5.400 6 10.200 1 5.400z" fill="#1e8ce4"/><path d="M6 .6L11 5.400H6z" fill="#0a58bc"/><path d="M6 .6L1 5.400h3.200z" fill="#9fe0ff"/><path d="M6 10.200L1 5.400h5z" fill="#38b0f4"/><path d="M6 2.800l2.600 2.600L6 8 3.400 5.400z" fill="#5cc4ff"/><path d="M.4 9.400l3.400-2.600v1.600h4v2.200h-4v1.600z" fill="#30c040" stroke="#0a6a1a" stroke-width="0.500"/></svg>
<span class="t" style="left:314.40px;top:395.25px;font:11.8px/14.16px 'Liberation Sans',sans-serif;color:#f2eee6;transform:scaleX(0.8354);">...HIP_TOP/U_UART/BRG/rst</span>
<span class="t" style="left:453.00px;top:395.25px;font:11.8px/14.16px 'Liberation Sans',sans-serif;color:#f2eee6;transform:scaleX(0.7900);">1&#x27;h1</span>
<svg style="left:288.7px;top:415.5005px;" width="8" height="8" viewBox="0 0 8 8"><rect x=".5" y=".5" width="7" height="7" fill="#f4f4f4" stroke="#ddd" stroke-width="0.600"/><path d="M2 4h4M4 2v4" stroke="#111" stroke-width="1.100"/></svg>
<svg style="left:297.6px;top:412.8005px;" width="12" height="13" viewBox="0 0 12 13"><path d="M6 .6L11 5.400 6 10.200 1 5.400z" fill="#1e8ce4"/><path d="M6 .6L11 5.400H6z" fill="#0a58bc"/><path d="M6 .6L1 5.400h3.200z" fill="#9fe0ff"/><path d="M6 10.200L1 5.400h5z" fill="#38b0f4"/><path d="M6 2.800l2.600 2.600L6 8 3.400 5.400z" fill="#5cc4ff"/><path d="M.4 9.400l3.400-2.600v1.600h4v2.200h-4v1.600z" fill="#30c040" stroke="#0a6a1a" stroke-width="0.500"/></svg>
<span class="t" style="left:314.40px;top:411.92px;font:11.8px/14.16px 'Liberation Sans',sans-serif;color:#f2eee6;transform:scaleX(0.8288);">...IP_TOP/U_UART/BRG/div0</span>
<span class="t" style="left:453.00px;top:411.92px;font:11.8px/14.16px 'Liberation Sans',sans-serif;color:#f2eee6;transform:scaleX(0.7900);">8&#x27;h04</span>
<svg style="left:288.7px;top:432.1672px;" width="8" height="8" viewBox="0 0 8 8"><rect x=".5" y=".5" width="7" height="7" fill="#f4f4f4" stroke="#ddd" stroke-width="0.600"/><path d="M2 4h4M4 2v4" stroke="#111" stroke-width="1.100"/></svg>
<svg style="left:297.6px;top:429.4672px;" width="12" height="13" viewBox="0 0 12 13"><path d="M6 .6L11 5.400 6 10.200 1 5.400z" fill="#1e8ce4"/><path d="M6 .6L11 5.400H6z" fill="#0a58bc"/><path d="M6 .6L1 5.400h3.200z" fill="#9fe0ff"/><path d="M6 10.200L1 5.400h5z" fill="#38b0f4"/><path d="M6 2.800l2.600 2.600L6 8 3.400 5.400z" fill="#5cc4ff"/><path d="M.4 9.400l3.400-2.600v1.600h4v2.200h-4v1.600z" fill="#30c040" stroke="#0a6a1a" stroke-width="0.500"/></svg>
<span class="t" style="left:314.40px;top:428.59px;font:11.8px/14.16px 'Liberation Sans',sans-serif;color:#f2eee6;transform:scaleX(0.8288);">...IP_TOP/U_UART/BRG/div1</span>
<span class="t" style="left:453.00px;top:428.59px;font:11.8px/14.16px 'Liberation Sans',sans-serif;color:#f2eee6;transform:scaleX(0.7900);">8&#x27;h06</span>
<svg style="left:297.6px;top:446.1339px;" width="12" height="13" viewBox="0 0 12 13"><path d="M6 .6L11 5.400 6 10.200 1 5.400z" fill="#1e8ce4"/><path d="M6 .6L11 5.400H6z" fill="#0a58bc"/><path d="M6 .6L1 5.400h3.200z" fill="#9fe0ff"/><path d="M6 10.200L1 5.400h5z" fill="#38b0f4"/><path d="M6 2.800l2.600 2.600L6 8 3.400 5.400z" fill="#5cc4ff"/><path d="M11.600 9.400L8.200 6.800v1.600h-4v2.200h4v1.600z" fill="#30c040" stroke="#0a6a1a" stroke-width="0.500"/></svg>
<span class="t" style="left:314.40px;top:445.25px;font:11.8px/14.16px 'Liberation Sans',sans-serif;color:#f2eee6;transform:scaleX(0.8283);">..._TOP/U_UART/BRG/sio_ce</span>
<span class="t" style="left:453.00px;top:445.25px;font:11.8px/14.16px 'Liberation Sans',sans-serif;color:#f2eee6;transform:scaleX(0.7900);">1&#x27;h0</span>
<svg style="left:297.6px;top:462.8006px;" width="12" height="13" viewBox="0 0 12 13"><path d="M6 .6L11 5.400 6 10.200 1 5.400z" fill="#1e8ce4"/><path d="M6 .6L11 5.400H6z" fill="#0a58bc"/><path d="M6 .6L1 5.400h3.200z" fill="#9fe0ff"/><path d="M6 10.200L1 5.400h5z" fill="#38b0f4"/><path d="M6 2.800l2.600 2.600L6 8 3.400 5.400z" fill="#5cc4ff"/><path d="M11.600 9.400L8.200 6.800v1.600h-4v2.200h4v1.600z" fill="#30c040" stroke="#0a6a1a" stroke-width="0.500"/></svg>
<span class="t" style="left:314.40px;top:461.92px;font:11.8px/14.16px 'Liberation Sans',sans-serif;color:#f2eee6;transform:scaleX(0.8222);">...P/U_UART/BRG/sio_ce_x4</span>
<span class="t" style="left:453.00px;top:461.92px;font:11.8px/14.16px 'Liberation Sans',sans-serif;color:#f2eee6;transform:scaleX(0.7900);">1&#x27;h0</span>
<svg style="left:297.6px;top:480.6px;" width="12" height="2.4" viewBox="0 0 12 2.4"><path d="M6 .4l2 2H4z" fill="#5cc4ff"/></svg>
<div style="left:281px;top:482.2px;width:949px;height:1.8px;background:#dadada;"></div>
<div style="left:281px;top:484px;width:168.6px;height:37px;background:#747474;"></div>
<div style="left:451.5px;top:484px;width:67px;height:37px;background:#747474;"></div>
<div style="left:313.7px;top:503.7px;width:135.9px;height:16.8px;background:#fff;"></div>
<div style="left:451.5px;top:503.7px;width:67px;height:16.8px;background:#fff;"></div>
<span class="t" style="left:425.00px;top:486.82px;font:11.8px/14.16px 'Liberation Sans',sans-serif;color:#f2eee6;transform:scaleX(0.8049);">Now</span>
<span class="t" style="left:463.90px;top:486.82px;font:11.8px/14.16px 'Liberation Sans',sans-serif;color:#f2eee6;transform:scaleX(0.8025);">1506750 ns</span>
<span class="t" style="left:407.00px;top:505.22px;font:11.8px/14.16px 'Liberation Sans',sans-serif;color:#111;transform:scaleX(0.8177);">Cursor 1</span>
<span class="t" style="left:463.90px;top:505.22px;font:11.8px/14.16px 'Liberation Sans',sans-serif;color:#111;transform:scaleX(0.8141);">1029110 ns</span>
<svg style="left:286.5px;top:489.5px;" width="28" height="10" viewBox="0 0 28 10"><path d="M2.400 7.400h4.400V5.400L4.600 3 2.400 5.400z" fill="#b8c4d8" stroke="#8a96b0" stroke-width="0.500"/><path d="M1.600 8.200h6" stroke="#dde" stroke-width="0.800"/><rect x="10.600" y="2.400" width="6.400" height="5.200" fill="#9ab4e8" stroke="#dfe6f8" stroke-width="0.700"/><path d="M11 8.600h5.600" stroke="#ccd" stroke-width="0.800"/><circle cx="23" cy="5" r="2.900" fill="#4ab85a" stroke="#a8e0b0" stroke-width="0.700"/><path d="M21.600 5h2.800M23 3.600v2.800" stroke="#e8ffe8" stroke-width="0.800"/></svg>
<svg style="left:286.5px;top:507px;" width="28" height="11" viewBox="0 0 28 11"><rect x="1.600" y="4.600" width="6" height="4.800" fill="#e8a020" stroke="#b87808" stroke-width="0.500"/><path d="M3 4.600V3c0-1.600 3-1.600 3 0" fill="none" stroke="#e8b040" stroke-width="1"/><path d="M11 9l4.600-5.400" stroke="#6a90e0" stroke-width="1.400"/><circle cx="16" cy="3.200" r="1.500" fill="none" stroke="#6a90e0" stroke-width="0.900"/><circle cx="23" cy="5.600" r="2.900" fill="#e85040" stroke="#f4b0a8" stroke-width="0.700"/><path d="M21.600 5.600h2.800" stroke="#fff" stroke-width="0.900"/></svg>
<div style="left:280px;top:520.6px;width:963px;height:2px;background:#fff;"></div>
<div style="left:281.3px;top:522.5px;width:5px;height:8px;background:#7c7c7c;"></div>
<div style="left:286.8px;top:522.5px;width:162.8px;height:8px;background:#c6c6c6;"></div>
<div style="left:406px;top:522.5px;width:34.5px;height:8px;background:#fbfbfb;"></div>
<svg style="left:286.8px;top:522.5px;" width="162.8" height="8" viewBox="0 0 162.8 8"><path d="M0.75 4.0L7.25 0.75L7.25 7.25z" fill="#f4f4f4" stroke="#aaa" stroke-width="0.600"/><path d="M162.05 4.0L155.55 0.75L155.55 7.25z" fill="#f4f4f4" stroke="#aaa" stroke-width="0.600"/></svg>
<div style="left:451.5px;top:522.5px;width:66.5px;height:8px;background:#c6c6c6;"></div>
<div style="left:460px;top:522.5px;width:2.4px;height:8px;background:#fbfbfb;"></div>
<svg style="left:451.5px;top:522.5px;" width="66.5" height="8" viewBox="0 0 66.5 8"><path d="M0.75 4.0L7.25 0.75L7.25 7.25z" fill="#f4f4f4" stroke="#aaa" stroke-width="0.600"/><path d="M65.75 4.0L59.25 0.75L59.25 7.25z" fill="#f4f4f4" stroke="#aaa" stroke-width="0.600"/></svg>
<div style="left:520px;top:522.5px;width:709.5px;height:8px;background:#c6c6c6;"></div>
<div style="left:528.5px;top:522.5px;width:590.5px;height:8px;background:#fcfcfc;"></div>
<svg style="left:520px;top:522.5px;" width="709.5" height="8" viewBox="0 0 709.5 8"><path d="M0.75 4.0L7.25 0.75L7.25 7.25z" fill="#f4f4f4" stroke="#aaa" stroke-width="0.600"/><path d="M708.25 4.0L701.75 0.75L701.75 7.25z" fill="#f4f4f4" stroke="#aaa" stroke-width="0.600"/></svg>
<div style="left:1230px;top:145px;width:1.7px;height:388px;background:#f4f4f4;"></div>
<div style="left:1231.7px;top:145.6px;width:9.3px;height:12px;background:#7c7c7c;"></div>
<div style="left:1231.7px;top:159.6px;width:9.3px;height:323px;background:#c6c6c6;"></div>
<div style="left:1231.7px;top:341.4px;width:9.3px;height:8.4px;background:#fbfbfb;"></div>
<svg style="left:1231.7px;top:159.6px;" width="9.3" height="323" viewBox="0 0 9.3 323"><path d="M4.65 1.25L7.9 7.75L1.4000000000000004 7.75z" fill="#f4f4f4" stroke="#aaa" stroke-width="0.600"/><path d="M4.65 321.25L7.9 314.75L1.4000000000000004 314.75z" fill="#f4f4f4" stroke="#aaa" stroke-width="0.600"/></svg>
<div style="left:1231.7px;top:484.6px;width:9.3px;height:36px;background:#9a9a9a;"></div>
<div style="left:1231.7px;top:522.5px;width:9.3px;height:8px;background:#858585;"></div>
<div style="left:1241px;top:145px;width:1.6px;height:388px;background:#eee;"></div>
<svg style="left:520px;top:145px;" width="710" height="375.6" viewBox="0 0 710 375.6"><rect x="0" y="0" width="710" height="375.6" fill="#000"/><rect x="0" y="12.9" width="710" height="1.700" fill="#f6f6f6"/><rect x="53.65" y="14.5" width="1" height="323.1" fill="#585858"/><rect x="106.3" y="14.5" width="1" height="323.1" fill="#585858"/><rect x="158.95" y="14.5" width="1" height="323.1" fill="#585858"/><rect x="211.6" y="14.5" width="1" height="323.1" fill="#585858"/><rect x="264.25" y="14.5" width="1" height="323.1" fill="#585858"/><rect x="316.9" y="14.5" width="1" height="323.1" fill="#585858"/><rect x="369.55" y="14.5" width="1" height="323.1" fill="#585858"/><rect x="422.2" y="14.5" width="1" height="323.1" fill="#585858"/><rect x="474.85" y="14.5" width="1" height="323.1" fill="#585858"/><rect x="527.5" y="14.5" width="1" height="323.1" fill="#585858"/><rect x="580.15" y="14.5" width="1" height="323.1" fill="#585858"/><rect x="632.8" y="14.5" width="1" height="323.1" fill="#585858"/><rect x="685.45" y="14.5" width="1" height="323.1" fill="#585858"/><rect x="2" y="16.3" width="706.5" height="14.200" fill="#90eeae"/><rect x="2" y="32.6" width="706.5" height="14.300" fill="#00621c"/><path d="M96 16.5v13.800" stroke="#15552c" stroke-width="0.800" stroke-dasharray="4 1.200"/><rect x="95.6" y="32.6" width="0.800" height="14.300" fill="#013410"/><path d="M98.7 16.5v13.800" stroke="#15552c" stroke-width="0.800" stroke-dasharray="4 1.200"/><rect x="98.3" y="32.6" width="0.800" height="14.300" fill="#013410"/><path d="M107 16.5v13.800" stroke="#15552c" stroke-width="0.800" stroke-dasharray="4 1.200"/><rect x="106.6" y="32.6" width="0.800" height="14.300" fill="#013410"/><path d="M135.4 16.5v13.800" stroke="#15552c" stroke-width="0.800" stroke-dasharray="4 1.200"/><rect x="135.0" y="32.6" width="0.800" height="14.300" fill="#013410"/><path d="M195.6 16.5v13.800" stroke="#15552c" stroke-width="0.800" stroke-dasharray="4 1.200"/><rect x="195.2" y="32.6" width="0.800" height="14.300" fill="#013410"/><path d="M256.4 16.5v13.800" stroke="#15552c" stroke-width="0.800" stroke-dasharray="4 1.200"/><rect x="256.0" y="32.6" width="0.800" height="14.300" fill="#013410"/><path d="M317.1 16.5v13.800" stroke="#15552c" stroke-width="0.800" stroke-dasharray="4 1.200"/><rect x="316.7" y="32.6" width="0.800" height="14.300" fill="#013410"/><path d="M377.4 16.5v13.800" stroke="#15552c" stroke-width="0.800" stroke-dasharray="4 1.200"/><rect x="377.0" y="32.6" width="0.800" height="14.300" fill="#013410"/><path d="M454 16.5v13.800" stroke="#15552c" stroke-width="0.800" stroke-dasharray="4 1.200"/><rect x="453.6" y="32.6" width="0.800" height="14.300" fill="#013410"/><path d="M456 16.5v13.800" stroke="#15552c" stroke-width="0.800" stroke-dasharray="4 1.200"/><rect x="455.6" y="32.6" width="0.800" height="14.300" fill="#013410"/><rect x="7.5" y="32.6" width="1" height="14.300" fill="#1c7a34"/><rect x="53.65" y="16.3" width="1" height="14.200" fill="#7fd49a" opacity="0.3"/><rect x="53.65" y="32.6" width="1" height="14.300" fill="#0a5a22" opacity="0.8"/><rect x="106.3" y="16.3" width="1" height="14.200" fill="#7fd49a" opacity="0.3"/><rect x="106.3" y="32.6" width="1" height="14.300" fill="#0a5a22" opacity="0.8"/><rect x="158.95" y="16.3" width="1" height="14.200" fill="#7fd49a" opacity="0.3"/><rect x="158.95" y="32.6" width="1" height="14.300" fill="#0a5a22" opacity="0.8"/><rect x="211.6" y="16.3" width="1" height="14.200" fill="#7fd49a" opacity="0.3"/><rect x="211.6" y="32.6" width="1" height="14.300" fill="#0a5a22" opacity="0.8"/><rect x="264.25" y="16.3" width="1" height="14.200" fill="#7fd49a" opacity="0.3"/><rect x="264.25" y="32.6" width="1" height="14.300" fill="#0a5a22" opacity="0.8"/><rect x="316.9" y="16.3" width="1" height="14.200" fill="#7fd49a" opacity="0.3"/><rect x="316.9" y="32.6" width="1" height="14.300" fill="#0a5a22" opacity="0.8"/><rect x="369.55" y="16.3" width="1" height="14.200" fill="#7fd49a" opacity="0.3"/><rect x="369.55" y="32.6" width="1" height="14.300" fill="#0a5a22" opacity="0.8"/><rect x="422.2" y="16.3" width="1" height="14.200" fill="#7fd49a" opacity="0.3"/><rect x="422.2" y="32.6" width="1" height="14.300" fill="#0a5a22" opacity="0.8"/><rect x="474.85" y="16.3" width="1" height="14.200" fill="#7fd49a" opacity="0.3"/><rect x="474.85" y="32.6" width="1" height="14.300" fill="#0a5a22" opacity="0.8"/><rect x="527.5" y="16.3" width="1" height="14.200" fill="#7fd49a" opacity="0.3"/><rect x="527.5" y="32.6" width="1" height="14.300" fill="#0a5a22" opacity="0.8"/><rect x="580.15" y="16.3" width="1" height="14.200" fill="#7fd49a" opacity="0.3"/><rect x="580.15" y="32.6" width="1" height="14.300" fill="#0a5a22" opacity="0.8"/><rect x="632.8" y="16.3" width="1" height="14.200" fill="#7fd49a" opacity="0.3"/><rect x="632.8" y="32.6" width="1" height="14.300" fill="#0a5a22" opacity="0.8"/><rect x="685.45" y="16.3" width="1" height="14.200" fill="#7fd49a" opacity="0.3"/><rect x="685.45" y="32.6" width="1" height="14.300" fill="#0a5a22" opacity="0.8"/><path d="M2 63.33H708.5" stroke="#0c5528" stroke-width="1" fill="none"/><path d="M2.3 56.03V63.33" stroke="#0c5528" stroke-width="0.800"/><path d="M2 80.0H708.5" stroke="#0c5528" stroke-width="1" fill="none"/><path d="M2.3 72.7V80.0" stroke="#0c5528" stroke-width="0.800"/><path d="M2 96.67H708.5" stroke="#0c5528" stroke-width="1" fill="none"/><path d="M2.3 89.37V96.67" stroke="#0c5528" stroke-width="0.800"/><path d="M2 117.0H104.3H104.3V130.0H110.37V117.0H111.88V130.0H114.92V117.0H116.44V130.0H117.95V117.0H119.47V130.0H120.99V117.0H122.5V130.0H124.02V117.0H125.54V130.0H128.57V117.0H131.61V130.0H133.12V117.0H134.64V130.0H139.19V117.0H142.23V130.0H143.74V117.0H146.78V130.0H148.29V117.0H149.81V130.0H154.36V117.0H157.39V130.0H158.91V117.0H161.95V130.0H163.46V117.0H164.98V130.0H166.5V117.0H172.56V130.0H174.08V117.0H177.12V130.0H178.63V117.0H180.15V130.0H189.25V117.0H190.77V130.0H193.8V117.0H195.32V130.0H198.35V117.0H199.87V130.0H202.9V117.0H204.42V130.0H205.94V117.0H207.46V130.0H208.97V117.0H210.49V130.0H212.01V117.0H213.52V130.0H216.56V117.0H218.08V130.0H221.11V117.0H222.63V130.0H224.14V117.0H225.66V130.0H227.18V117.0H230.21V130.0H233.25V117.0H234.76V130.0H236.28V117.0H237.8V130.0H239.31V117.0H240.83V130.0H242.35V117.0H245.38V130.0H251.45V117.0H252.97V130.0H254.48V117.0H256.0V130.0H257.52V117.0H259.03V130.0H260.55V117.0H263.59V130.0H265.1V117.0H266.62V130.0H269.65V117.0H271.17V130.0H274.2V117.0H277.24V130.0H278.75V117.0H280.27V130.0H281.79V117.0H283.31V130.0H284.82V117.0H286.34V130.0H295.44V117.0H296.96V130.0H299.99V117.0H301.51V130.0H303.03V117.0H307.58V130.0H309.1V117.0H313.65V130.0H315.16V117.0H316.68V130.0H318.2V117.0H324.26V130.0H325.78V117.0H328.82V130.0H330.33V117.0H331.85V130.0H334.88V117.0H336.4V130.0H339.43V117.0H343.99V130.0H345.5V117.0H347.02V130.0H351.57V117.0H354.61V130.0H356.12V117.0H359.16V130.0H360.67V117.0H362.19V130.0H366.74V117.0H368.26V130.0H371.29V117.0H374.33V130.0H375.84V117.0H377.36V130.0H378.88V117.0H380.39V130.0H386.46V117.0H387.98V130.0H391.01V117.0H392.53V130.0H401.63V117.0H403.15V130.0H406.18V117.0H407.7V130.0H409.22V117.0H410.73V130.0H412.25V117.0H413.77V130.0H415.28V117.0H416.8V130.0H418.32V117.0H419.84V130.0H421.35V117.0H422.87V130.0H424.39V117.0H425.9V130.0H433.49V117.0H435.01V130.0H436.52V117.0H438.04V130.0H441.07V117.0H442.59V130.0H445.62V117.0H447.14V130.0H448.66V117.0H450.18V130.0H451.69V117.0H453.21V130.0H457.76V117.0H459.28V130.0H460.8V117.0H462.31V130.0H463.83V117.0H465.35V130.0H466.86V117.0H468.38V130.0H477.48V117.0H479.0V130.0H482.03V117.0H483.55V130.0H488.1V117.0H489.62V130.0H491.13V117.0H495.69V130.0H497.2V117.0H498.72V130.0H500.24V117.0H501.75V130.0H503.27V117.0H504.79V130.0H507.82V117.0H510.86V130.0H512.37V117.0H513.89V130.0H515.41V117.0H518.44V130.0H521.47V117.0H526.03V130.0H527.54V117.0H529.06V130.0H533.61V117.0H535.13V130.0H536.64V117.0H541.2V130.0H542.71V117.0H544.23V130.0H553.33V117.0H554.85V130.0H557.88V117.0H559.4V130.0H566.99V117.0H570.02V130.0H573.05V117.0H574.57V130.0H576.09V117.0H577.6V130.0H582.15V117.0H585.19V130.0H588.22V117.0H589.74V130.0H592.77V117.0H594.29V130.0H597.33V117.0H600.36V130.0H603.39V117.0H604.91V130.0H606.43V117.0H609.46V130.0H612.49V117.0H615.53V130.0H618.56V117.0H620.08V130.0H624.63V117.0H626.15V130.0H627.66V117.0H630.7V130.0H633.73V117.0H635.25V130.0H636.77V117.0H638.28V130.0H639.8V117.0H641.32V130.0H642.84V117.0H645.87V130.0H648.9V117.0H650.42V130.0H653.45V117.0H656.49V130.0H658.01V117.0H661.04V130.0H664.07V117.0H665.59V130.0H667.11V117.0H671.66V130.0H673.17V117.0H676.21V130.0H679.24V117.0H680.76V130.0H686.83V117.0H691.38V130.0H694.41V117.0H695.93V130.0H697.45V117.0H698.96V130.0H702.0V117.0H706.55V130.0H708.5" stroke="#0d5c2b" stroke-width="0.900" fill="none"/><path d="M2.3 117.0V125.2" stroke="#0c5528" stroke-width="0.800"/><path d="M2 133.37H708.5" stroke="#d8d8d8" stroke-width="1" stroke-dasharray="2.700 2.600" fill="none"/><path d="M2.3 133.37v7" stroke="#bbb" stroke-width="0.800" stroke-dasharray="1.500 1.500"/><path d="M3.2 150.43H13.9M3.2 163.53H13.9M3.2 150.43L2.5 156.98L3.2 163.53M13.9 150.43L14.6 156.98L13.9 163.53M15.3 150.43H99.6M15.3 163.53H99.6M15.3 150.43L14.6 156.98L15.3 163.53M99.6 150.43L100.3 156.98L99.6 163.53M101.0 150.43H101.7M101.0 163.53H101.7M101.0 150.43L100.3 156.98L101.0 163.53M101.7 150.43L102.4 156.98L101.7 163.53M103.1 150.43H103.6M103.1 163.53H103.6M103.1 150.43L102.4 156.98L103.1 163.53M103.6 150.43L104.3 156.98L103.6 163.53M105.0 150.43H105.6M105.0 163.53H105.6M105.0 150.43L104.3 156.98L105.0 163.53M105.6 150.43L106.3 156.98L105.6 163.53M107.0 150.43H107.6M107.0 163.53H107.6M107.0 150.43L106.3 156.98L107.0 163.53M107.6 150.43L108.3 156.98L107.6 163.53M109.0 150.43H109.7M109.0 163.53H109.7M109.0 150.43L108.3 156.98L109.0 163.53M109.7 150.43L110.4 156.98L109.7 163.53M111.1 150.43H111.9M111.1 163.53H111.9M111.1 150.43L110.4 156.98L111.1 163.53M111.9 150.43L112.6 156.98L111.9 163.53M113.3 150.43H118.9M113.3 163.53H118.9M113.3 150.43L112.6 156.98L113.3 163.53M118.9 150.43L119.6 156.98L118.9 163.53M120.3 150.43H133.9M120.3 163.53H133.9M120.3 150.43L119.6 156.98L120.3 163.53M133.9 150.43L134.6 156.98L133.9 163.53M135.3 150.43H149.07M135.3 163.53H149.07M135.3 150.43L134.6 156.98L135.3 163.53M149.07 150.43L149.77 156.98L149.07 163.53M150.47 150.43H164.24M150.47 163.53H164.24M150.47 150.43L149.77 156.98L150.47 163.53M164.24 150.43L164.94 156.98L164.24 163.53M165.64 150.43H179.41M165.64 163.53H179.41M165.64 150.43L164.94 156.98L165.64 163.53M179.41 150.43L180.11 156.98L179.41 163.53M180.81 150.43H194.58M180.81 163.53H194.58M180.81 150.43L180.11 156.98L180.81 163.53M194.58 150.43L195.28 156.98L194.58 163.53M195.98 150.43H209.75M195.98 163.53H209.75M195.98 150.43L195.28 156.98L195.98 163.53M209.75 150.43L210.45 156.98L209.75 163.53M211.15 150.43H224.92M211.15 163.53H224.92M211.15 150.43L210.45 156.98L211.15 163.53M224.92 150.43L225.62 156.98L224.92 163.53M226.32 150.43H240.09M226.32 163.53H240.09M226.32 150.43L225.62 156.98L226.32 163.53M240.09 150.43L240.79 156.98L240.09 163.53M241.49 150.43H255.26M241.49 163.53H255.26M241.49 150.43L240.79 156.98L241.49 163.53M255.26 150.43L255.96 156.98L255.26 163.53M256.66 150.43H270.43M256.66 163.53H270.43M256.66 150.43L255.96 156.98L256.66 163.53M270.43 150.43L271.13 156.98L270.43 163.53M271.83 150.43H285.6M271.83 163.53H285.6M271.83 150.43L271.13 156.98L271.83 163.53M285.6 150.43L286.3 156.98L285.6 163.53M287.0 150.43H300.77M287.0 163.53H300.77M287.0 150.43L286.3 156.98L287.0 163.53M300.77 150.43L301.47 156.98L300.77 163.53M302.17 150.43H315.94M302.17 163.53H315.94M302.17 150.43L301.47 156.98L302.17 163.53M315.94 150.43L316.64 156.98L315.94 163.53M317.34 150.43H331.11M317.34 163.53H331.11M317.34 150.43L316.64 156.98L317.34 163.53M331.11 150.43L331.81 156.98L331.11 163.53M332.51 150.43H346.28M332.51 163.53H346.28M332.51 150.43L331.81 156.98L332.51 163.53M346.28 150.43L346.98 156.98L346.28 163.53M347.68 150.43H361.45M347.68 163.53H361.45M347.68 150.43L346.98 156.98L347.68 163.53M361.45 150.43L362.15 156.98L361.45 163.53M362.85 150.43H376.62M362.85 163.53H376.62M362.85 150.43L362.15 156.98L362.85 163.53M376.62 150.43L377.32 156.98L376.62 163.53M378.02 150.43H391.79M378.02 163.53H391.79M378.02 150.43L377.32 156.98L378.02 163.53M391.79 150.43L392.49 156.98L391.79 163.53M393.19 150.43H406.96M393.19 163.53H406.96M393.19 150.43L392.49 156.98L393.19 163.53M406.96 150.43L407.66 156.98L406.96 163.53M408.36 150.43H422.13M408.36 163.53H422.13M408.36 150.43L407.66 156.98L408.36 163.53M422.13 150.43L422.83 156.98L422.13 163.53M423.53 150.43H437.3M423.53 163.53H437.3M423.53 150.43L422.83 156.98L423.53 163.53M437.3 150.43L438.0 156.98L437.3 163.53M438.7 150.43H452.47M438.7 163.53H452.47M438.7 150.43L438.0 156.98L438.7 163.53M452.47 150.43L453.17 156.98L452.47 163.53M453.87 150.43H467.64M453.87 163.53H467.64M453.87 150.43L453.17 156.98L453.87 163.53M467.64 150.43L468.34 156.98L467.64 163.53M469.04 150.43H482.81M469.04 163.53H482.81M469.04 150.43L468.34 156.98L469.04 163.53M482.81 150.43L483.51 156.98L482.81 163.53M484.21 150.43H497.98M484.21 163.53H497.98M484.21 150.43L483.51 156.98L484.21 163.53M497.98 150.43L498.68 156.98L497.98 163.53M499.38 150.43H513.15M499.38 163.53H513.15M499.38 150.43L498.68 156.98L499.38 163.53M513.15 150.43L513.85 156.98L513.15 163.53M514.55 150.43H528.32M514.55 163.53H528.32M514.55 150.43L513.85 156.98L514.55 163.53M528.32 150.43L529.02 156.98L528.32 163.53M529.72 150.43H543.49M529.72 163.53H543.49M529.72 150.43L529.02 156.98L529.72 163.53M543.49 150.43L544.19 156.98L543.49 163.53M544.89 150.43H558.66M544.89 163.53H558.66M544.89 150.43L544.19 156.98L544.89 163.53M558.66 150.43L559.36 156.98L558.66 163.53M560.06 150.43H573.83M560.06 163.53H573.83M560.06 150.43L559.36 156.98L560.06 163.53M573.83 150.43L574.53 156.98L573.83 163.53M575.23 150.43H589.0M575.23 163.53H589.0M575.23 150.43L574.53 156.98L575.23 163.53M589.0 150.43L589.7 156.98L589.0 163.53M590.4 150.43H604.17M590.4 163.53H604.17M590.4 150.43L589.7 156.98L590.4 163.53M604.17 150.43L604.87 156.98L604.17 163.53M605.57 150.43H619.34M605.57 163.53H619.34M605.57 150.43L604.87 156.98L605.57 163.53M619.34 150.43L620.04 156.98L619.34 163.53M620.74 150.43H634.51M620.74 163.53H634.51M620.74 150.43L620.04 156.98L620.74 163.53M634.51 150.43L635.21 156.98L634.51 163.53M635.91 150.43H649.68M635.91 163.53H649.68M635.91 150.43L635.21 156.98L635.91 163.53M649.68 150.43L650.38 156.98L649.68 163.53M651.08 150.43H664.85M651.08 163.53H664.85M651.08 150.43L650.38 156.98L651.08 163.53M664.85 150.43L665.55 156.98L664.85 163.53M666.25 150.43H680.02M666.25 163.53H680.02M666.25 150.43L665.55 156.98L666.25 163.53M680.02 150.43L680.72 156.98L680.02 163.53M681.42 150.43H695.19M681.42 163.53H695.19M681.42 150.43L680.72 156.98L681.42 163.53M695.19 150.43L695.89 156.98L695.19 163.53M696.59 150.43H708.5M696.59 163.53H708.5M696.59 150.43L695.89 156.98L696.59 163.53" stroke="#96d6ae" stroke-width="0.900" fill="none"/><text x="18" y="161.83" font-family="Liberation Sans,sans-serif" font-size="12.600" fill="#d8d8d8" textLength="10.800" lengthAdjust="spacingAndGlyphs">00</text><path d="M2 173.4H708.5" stroke="#c02a2a" stroke-width="1.200"/><path d="M2 196.67H708.5" stroke="#0c5528" stroke-width="1" fill="none"/><path d="M2.3 189.37V196.67" stroke="#0c5528" stroke-width="0.800"/><path d="M2 213.33H708.5" stroke="#0c5528" stroke-width="1"/><path d="M2.3 206.03V213.33" stroke="#0c5528" stroke-width="0.800"/><path d="M100.3 200.33V213.33M102.4 200.33V213.33M104.3 200.33V213.33M106.3 200.33V213.33M108.3 200.33V213.33M110.4 200.33V213.33M112.6 200.33V213.33M119.6 200.33V213.33M134.6 200.33V213.33M149.77 200.33V213.33M164.94 200.33V213.33M180.11 200.33V213.33M195.28 200.33V213.33M210.45 200.33V213.33M225.62 200.33V213.33M240.79 200.33V213.33M255.96 200.33V213.33M271.13 200.33V213.33M286.3 200.33V213.33M301.47 200.33V213.33M316.64 200.33V213.33M331.81 200.33V213.33M346.98 200.33V213.33M362.15 200.33V213.33M377.32 200.33V213.33M392.49 200.33V213.33M407.66 200.33V213.33M422.83 200.33V213.33M438.0 200.33V213.33M453.17 200.33V213.33M468.34 200.33V213.33M483.51 200.33V213.33M498.68 200.33V213.33M513.85 200.33V213.33M529.02 200.33V213.33M544.19 200.33V213.33M559.36 200.33V213.33M574.53 200.33V213.33M589.7 200.33V213.33M604.87 200.33V213.33M620.04 200.33V213.33M635.21 200.33V213.33M650.38 200.33V213.33M665.55 200.33V213.33M680.72 200.33V213.33M695.89 200.33V213.33" stroke="#147a38" stroke-width="0.800"/><path d="M2 230.0H708.5" stroke="#0c5528" stroke-width="1" fill="none"/><path d="M2.3 222.7V230.0" stroke="#0c5528" stroke-width="0.800"/><rect x="2" y="233.1" width="706.5" height="14.200" fill="#00621c"/><path d="M2 250.33H708.5" stroke="#0c5528" stroke-width="1" fill="none"/><path d="M2.3 250.33V258.53" stroke="#0c5528" stroke-width="0.800"/><path d="M3.2 267.1H13.9M3.2 280.2H13.9M3.2 267.1L2.5 273.65L3.2 280.2M13.9 267.1L14.6 273.65L13.9 280.2M15.3 267.1H708.5M15.3 280.2H708.5M15.3 267.1L14.6 273.65L15.3 280.2" stroke="#9ccfae" stroke-width="0.900" fill="none"/><path d="M3.2 283.77H13.9M3.2 296.87H13.9M3.2 283.77L2.5 290.32L3.2 296.87M13.9 283.77L14.6 290.32L13.9 296.87M15.3 283.77H708.5M15.3 296.87H708.5M15.3 283.77L14.6 290.32L15.3 296.87" stroke="#9ccfae" stroke-width="0.900" fill="none"/><text x="17.8" y="278.5" font-family="Liberation Sans,sans-serif" font-size="12.600" fill="#d8d8d8" textLength="10.800" lengthAdjust="spacingAndGlyphs">04</text><text x="17.8" y="295.17" font-family="Liberation Sans,sans-serif" font-size="12.600" fill="#d8d8d8" textLength="10.800" lengthAdjust="spacingAndGlyphs">06</text><path d="M2 313.6H15.5" stroke="#0c5528" stroke-width="1"/><path d="M2.3 306.03V313.6" stroke="#0c5528" stroke-width="0.800"/><rect x="15.5" y="299.8" width="693.0" height="13.800000000000011" fill="#053a15"/><path d="M16 299.8V313.6M17.65 299.8V313.6M19.65 299.8V313.6M21.65 299.8V313.6M23.3 299.8V313.6M24.95 299.8V313.6M26.95 299.8V313.6M28.6 299.8V313.6M30.6 299.8V313.6M31.9 299.8V313.6M33.9 299.8V313.6M35.2 299.8V313.6M36.85 299.8V313.6M38.5 299.8V313.6M40.5 299.8V313.6M42.15 299.8V313.6M43.8 299.8V313.6M45.45 299.8V313.6M47.45 299.8V313.6M49.45 299.8V313.6M51.1 299.8V313.6M52.75 299.8V313.6M54.4 299.8V313.6M56.05 299.8V313.6M57.7 299.8V313.6M59.7 299.8V313.6M61.35 299.8V313.6M62.65 299.8V313.6M63.95 299.8V313.6M65.6 299.8V313.6M67.6 299.8V313.6M68.9 299.8V313.6M70.55 299.8V313.6M71.85 299.8V313.6M73.5 299.8V313.6M75.15 299.8V313.6M77.15 299.8V313.6M78.8 299.8V313.6M80.45 299.8V313.6M82.1 299.8V313.6M84.1 299.8V313.6M85.75 299.8V313.6M87.4 299.8V313.6M89.05 299.8V313.6M90.35 299.8V313.6M91.65 299.8V313.6M93.3 299.8V313.6M94.95 299.8V313.6M96.6 299.8V313.6M98.25 299.8V313.6M99.9 299.8V313.6M101.55 299.8V313.6M103.2 299.8V313.6M105.2 299.8V313.6M106.85 299.8V313.6M108.85 299.8V313.6M110.5 299.8V313.6M112.5 299.8V313.6M114.5 299.8V313.6M116.15 299.8V313.6M118.15 299.8V313.6M119.8 299.8V313.6M121.45 299.8V313.6M122.75 299.8V313.6M124.4 299.8V313.6M126.4 299.8V313.6M128.05 299.8V313.6M129.7 299.8V313.6M131.7 299.8V313.6M133.7 299.8V313.6M135.7 299.8V313.6M137.0 299.8V313.6M138.65 299.8V313.6M140.65 299.8V313.6M142.3 299.8V313.6M143.95 299.8V313.6M145.25 299.8V313.6M146.55 299.8V313.6M148.2 299.8V313.6M149.85 299.8V313.6M151.15 299.8V313.6M152.8 299.8V313.6M154.1 299.8V313.6M155.75 299.8V313.6M157.4 299.8V313.6M158.7 299.8V313.6M160.35 299.8V313.6M162.0 299.8V313.6M163.65 299.8V313.6M164.95 299.8V313.6M166.25 299.8V313.6M168.25 299.8V313.6M170.25 299.8V313.6M171.55 299.8V313.6M173.2 299.8V313.6M175.2 299.8V313.6M176.85 299.8V313.6M178.85 299.8V313.6M180.5 299.8V313.6M182.5 299.8V313.6M184.15 299.8V313.6M185.45 299.8V313.6M187.1 299.8V313.6M188.4 299.8V313.6M189.7 299.8V313.6M191.0 299.8V313.6M193.0 299.8V313.6M195.0 299.8V313.6M196.3 299.8V313.6M197.95 299.8V313.6M199.6 299.8V313.6M201.25 299.8V313.6M203.25 299.8V313.6M204.9 299.8V313.6M206.55 299.8V313.6M207.85 299.8V313.6M209.5 299.8V313.6M211.15 299.8V313.6M212.8 299.8V313.6M214.45 299.8V313.6M216.1 299.8V313.6M217.75 299.8V313.6M219.4 299.8V313.6M221.4 299.8V313.6M223.05 299.8V313.6M225.05 299.8V313.6M227.05 299.8V313.6M228.35 299.8V313.6M230.35 299.8V313.6M232.35 299.8V313.6M234.0 299.8V313.6M235.65 299.8V313.6M237.3 299.8V313.6M238.95 299.8V313.6M240.6 299.8V313.6M242.25 299.8V313.6M244.25 299.8V313.6M245.9 299.8V313.6M247.9 299.8V313.6M249.55 299.8V313.6M250.85 299.8V313.6M252.5 299.8V313.6M254.5 299.8V313.6M256.15 299.8V313.6M257.45 299.8V313.6M259.1 299.8V313.6M261.1 299.8V313.6M263.1 299.8V313.6M264.75 299.8V313.6M266.05 299.8V313.6M267.7 299.8V313.6M269.35 299.8V313.6M271.0 299.8V313.6M272.65 299.8V313.6M274.65 299.8V313.6M276.3 299.8V313.6M277.95 299.8V313.6M279.25 299.8V313.6M281.25 299.8V313.6M282.55 299.8V313.6M283.85 299.8V313.6M285.5 299.8V313.6M287.15 299.8V313.6M288.8 299.8V313.6M290.45 299.8V313.6M292.45 299.8V313.6M294.45 299.8V313.6M296.1 299.8V313.6M297.75 299.8V313.6M299.4 299.8V313.6M301.05 299.8V313.6M302.7 299.8V313.6M304.35 299.8V313.6M306.35 299.8V313.6M308.0 299.8V313.6M309.65 299.8V313.6M311.3 299.8V313.6M312.6 299.8V313.6M313.9 299.8V313.6M315.9 299.8V313.6M317.55 299.8V313.6M319.2 299.8V313.6M321.2 299.8V313.6M322.85 299.8V313.6M324.5 299.8V313.6M326.15 299.8V313.6M327.8 299.8V313.6M329.45 299.8V313.6M331.1 299.8V313.6M332.4 299.8V313.6M333.7 299.8V313.6M335.7 299.8V313.6M337.35 299.8V313.6M339.0 299.8V313.6M340.65 299.8V313.6M342.3 299.8V313.6M343.95 299.8V313.6M345.25 299.8V313.6M346.9 299.8V313.6M348.55 299.8V313.6M350.55 299.8V313.6M352.2 299.8V313.6M353.85 299.8V313.6M355.5 299.8V313.6M356.8 299.8V313.6M358.1 299.8V313.6M360.1 299.8V313.6M361.75 299.8V313.6M363.4 299.8V313.6M365.4 299.8V313.6M367.05 299.8V313.6M368.7 299.8V313.6M370.35 299.8V313.6M371.65 299.8V313.6M373.65 299.8V313.6M375.3 299.8V313.6M377.3 299.8V313.6M378.95 299.8V313.6M380.6 299.8V313.6M382.25 299.8V313.6M384.25 299.8V313.6M385.9 299.8V313.6M387.55 299.8V313.6M389.2 299.8V313.6M390.85 299.8V313.6M392.5 299.8V313.6M394.15 299.8V313.6M396.15 299.8V313.6M397.8 299.8V313.6M399.1 299.8V313.6M400.75 299.8V313.6M402.4 299.8V313.6M404.05 299.8V313.6M405.35 299.8V313.6M407.0 299.8V313.6M409.0 299.8V313.6M411.0 299.8V313.6M412.65 299.8V313.6M414.65 299.8V313.6M416.3 299.8V313.6M417.6 299.8V313.6M419.25 299.8V313.6M421.25 299.8V313.6M422.9 299.8V313.6M424.9 299.8V313.6M426.55 299.8V313.6M428.2 299.8V313.6M429.5 299.8V313.6M431.5 299.8V313.6M433.15 299.8V313.6M434.45 299.8V313.6M436.1 299.8V313.6M437.4 299.8V313.6M438.7 299.8V313.6M440.7 299.8V313.6M442.35 299.8V313.6M444.0 299.8V313.6M446.0 299.8V313.6M447.3 299.8V313.6M448.6 299.8V313.6M450.25 299.8V313.6M451.55 299.8V313.6M453.2 299.8V313.6M455.2 299.8V313.6M456.85 299.8V313.6M458.5 299.8V313.6M459.8 299.8V313.6M461.8 299.8V313.6M463.8 299.8V313.6M465.45 299.8V313.6M466.75 299.8V313.6M468.75 299.8V313.6M470.05 299.8V313.6M471.7 299.8V313.6M473.35 299.8V313.6M475.0 299.8V313.6M477.0 299.8V313.6M478.65 299.8V313.6M479.95 299.8V313.6M481.6 299.8V313.6M483.25 299.8V313.6M484.9 299.8V313.6M486.2 299.8V313.6M488.2 299.8V313.6M489.5 299.8V313.6M491.15 299.8V313.6M492.8 299.8V313.6M494.45 299.8V313.6M496.1 299.8V313.6M497.4 299.8V313.6M499.05 299.8V313.6M501.05 299.8V313.6M502.7 299.8V313.6M504.0 299.8V313.6M505.65 299.8V313.6M507.3 299.8V313.6M508.95 299.8V313.6M510.95 299.8V313.6M512.95 299.8V313.6M514.95 299.8V313.6M516.6 299.8V313.6M517.9 299.8V313.6M519.55 299.8V313.6M521.2 299.8V313.6M522.5 299.8V313.6M523.8 299.8V313.6M525.45 299.8V313.6M526.75 299.8V313.6M528.05 299.8V313.6M529.35 299.8V313.6M530.65 299.8V313.6M532.3 299.8V313.6M533.6 299.8V313.6M534.9 299.8V313.6M536.9 299.8V313.6M538.9 299.8V313.6M540.55 299.8V313.6M542.2 299.8V313.6M543.85 299.8V313.6M545.5 299.8V313.6M546.8 299.8V313.6M548.45 299.8V313.6M550.1 299.8V313.6M551.75 299.8V313.6M553.75 299.8V313.6M555.4 299.8V313.6M557.05 299.8V313.6M558.7 299.8V313.6M560.35 299.8V313.6M562.0 299.8V313.6M563.65 299.8V313.6M564.95 299.8V313.6M566.6 299.8V313.6M568.6 299.8V313.6M569.9 299.8V313.6M571.55 299.8V313.6M572.85 299.8V313.6M574.85 299.8V313.6M576.5 299.8V313.6M577.8 299.8V313.6M579.45 299.8V313.6M581.1 299.8V313.6M583.1 299.8V313.6M585.1 299.8V313.6M586.75 299.8V313.6M588.05 299.8V313.6M590.05 299.8V313.6M591.7 299.8V313.6M593.0 299.8V313.6M594.65 299.8V313.6M596.3 299.8V313.6M597.95 299.8V313.6M599.6 299.8V313.6M601.25 299.8V313.6M602.9 299.8V313.6M604.2 299.8V313.6M605.85 299.8V313.6M607.5 299.8V313.6M609.5 299.8V313.6M611.15 299.8V313.6M613.15 299.8V313.6M614.45 299.8V313.6M616.1 299.8V313.6M617.75 299.8V313.6M619.4 299.8V313.6M621.05 299.8V313.6M622.35 299.8V313.6M624.0 299.8V313.6M625.65 299.8V313.6M627.65 299.8V313.6M629.3 299.8V313.6M630.6 299.8V313.6M632.25 299.8V313.6M633.55 299.8V313.6M635.55 299.8V313.6M637.2 299.8V313.6M638.5 299.8V313.6M640.15 299.8V313.6M642.15 299.8V313.6M644.15 299.8V313.6M645.45 299.8V313.6M647.45 299.8V313.6M648.75 299.8V313.6M650.4 299.8V313.6M652.05 299.8V313.6M653.7 299.8V313.6M655.35 299.8V313.6M656.65 299.8V313.6M658.65 299.8V313.6M659.95 299.8V313.6M661.95 299.8V313.6M663.25 299.8V313.6M664.9 299.8V313.6M666.55 299.8V313.6M667.85 299.8V313.6M669.5 299.8V313.6M670.8 299.8V313.6M672.1 299.8V313.6M673.4 299.8V313.6M675.05 299.8V313.6M676.7 299.8V313.6M678.7 299.8V313.6M680.35 299.8V313.6M681.65 299.8V313.6M682.95 299.8V313.6M684.95 299.8V313.6M686.95 299.8V313.6M688.95 299.8V313.6M690.6 299.8V313.6M691.9 299.8V313.6M693.9 299.8V313.6M695.2 299.8V313.6M697.2 299.8V313.6M698.5 299.8V313.6M700.5 299.8V313.6M702.15 299.8V313.6M704.15 299.8V313.6M705.8 299.8V313.6M707.1 299.8V313.6" stroke="#0a5420" stroke-width="0.650"/><path d="M17 299.8V313.6M30 299.8V313.6M43 299.8V313.6M64 299.8V313.6M90 299.8V313.6M111 299.8V313.6M128 299.8V313.6M145 299.8V313.6M171 299.8V313.6M192 299.8V313.6M209 299.8V313.6M235 299.8V313.6M256 299.8V313.6M265 299.8V313.6M286 299.8V313.6M312 299.8V313.6M325 299.8V313.6M346 299.8V313.6M359 299.8V313.6M380 299.8V313.6M406 299.8V313.6M432 299.8V313.6M458 299.8V313.6M479 299.8V313.6M492 299.8V313.6M513 299.8V313.6M526 299.8V313.6M539 299.8V313.6M548 299.8V313.6M569 299.8V313.6M590 299.8V313.6M616 299.8V313.6M637 299.8V313.6M663 299.8V313.6M676 299.8V313.6M689 299.8V313.6M706 299.8V313.6" stroke="#0f6a2a" stroke-width="0.700"/><path d="M2 330.2H15" stroke="#0c5528" stroke-width="1"/><path d="M2.3 322.7V330.2" stroke="#0c5528" stroke-width="0.800"/><rect x="15" y="316.7" width="693.5" height="13.800" fill="#006a20"/><rect x="15" y="333.3" width="693.5" height="4" fill="#a4f0c0"/><path d="M3 337.4V334.3H14V337.4" stroke="#9ccfae" stroke-width="0.900" fill="none"/><rect x="53.65" y="233.1" width="1" height="14.199999999999989" fill="#0a5a22"/><rect x="53.65" y="316.7" width="1" height="13.800000000000011" fill="#0a6a28"/><rect x="106.3" y="233.1" width="1" height="14.199999999999989" fill="#0a5a22"/><rect x="106.3" y="316.7" width="1" height="13.800000000000011" fill="#0a6a28"/><rect x="158.95" y="233.1" width="1" height="14.199999999999989" fill="#0a5a22"/><rect x="158.95" y="316.7" width="1" height="13.800000000000011" fill="#0a6a28"/><rect x="211.6" y="233.1" width="1" height="14.199999999999989" fill="#0a5a22"/><rect x="211.6" y="316.7" width="1" height="13.800000000000011" fill="#0a6a28"/><rect x="264.25" y="233.1" width="1" height="14.199999999999989" fill="#0a5a22"/><rect x="264.25" y="316.7" width="1" height="13.800000000000011" fill="#0a6a28"/><rect x="316.9" y="233.1" width="1" height="14.199999999999989" fill="#0a5a22"/><rect x="316.9" y="316.7" width="1" height="13.800000000000011" fill="#0a6a28"/><rect x="369.55" y="233.1" width="1" height="14.199999999999989" fill="#0a5a22"/><rect x="369.55" y="316.7" width="1" height="13.800000000000011" fill="#0a6a28"/><rect x="422.2" y="233.1" width="1" height="14.199999999999989" fill="#0a5a22"/><rect x="422.2" y="316.7" width="1" height="13.800000000000011" fill="#0a6a28"/><rect x="474.85" y="233.1" width="1" height="14.199999999999989" fill="#0a5a22"/><rect x="474.85" y="316.7" width="1" height="13.800000000000011" fill="#0a6a28"/><rect x="527.5" y="233.1" width="1" height="14.199999999999989" fill="#0a5a22"/><rect x="527.5" y="316.7" width="1" height="13.800000000000011" fill="#0a6a28"/><rect x="580.15" y="233.1" width="1" height="14.199999999999989" fill="#0a5a22"/><rect x="580.15" y="316.7" width="1" height="13.800000000000011" fill="#0a6a28"/><rect x="632.8" y="233.1" width="1" height="14.199999999999989" fill="#0a5a22"/><rect x="632.8" y="316.7" width="1" height="13.800000000000011" fill="#0a6a28"/><rect x="685.45" y="233.1" width="1" height="14.199999999999989" fill="#0a5a22"/><rect x="685.45" y="316.7" width="1" height="13.800000000000011" fill="#0a6a28"/><rect x="0" y="337" width="710" height="2" fill="#cdcdcd"/><rect x="0" y="339" width="710" height="36.60000000000002" fill="#000"/><path d="M1.5 340.6V343.8M22.56 340.6V343.8M43.62 340.6V343.8M64.68 340.6V343.8M85.74 340.6V343.8M106.8 338.5V344.5M127.86 340.6V343.8M148.92 340.6V343.8M169.98 340.6V343.8M191.04 340.6V343.8M212.1 338.5V344.5M233.16 340.6V343.8M254.22 340.6V343.8M275.28 340.6V343.8M296.34 340.6V343.8M317.4 338.5V344.5M338.46 340.6V343.8M359.52 340.6V343.8M380.58 340.6V343.8M401.64 340.6V343.8M422.7 338.5V344.5M443.76 340.6V343.8M464.82 340.6V343.8M485.88 340.6V343.8M506.94 340.6V343.8M528.0 338.5V344.5M549.06 340.6V343.8M570.12 340.6V343.8M591.18 340.6V343.8M612.24 340.6V343.8M633.3 338.5V344.5M654.36 340.6V343.8M675.42 340.6V343.8M696.48 340.6V343.8" stroke="#3aa468" stroke-width="0.900"/><text x="212.1" y="357.6" font-family="Liberation Sans,sans-serif" font-size="12.600" fill="#2cac4c" text-anchor="middle" textLength="45" lengthAdjust="spacingAndGlyphs">400000 ns</text><text x="422.7" y="357.6" font-family="Liberation Sans,sans-serif" font-size="12.600" fill="#2cac4c" text-anchor="middle" textLength="45" lengthAdjust="spacingAndGlyphs">800000 ns</text><text x="633.3" y="357.6" font-family="Liberation Sans,sans-serif" font-size="12.600" fill="#2cac4c" text-anchor="middle" textLength="45" lengthAdjust="spacingAndGlyphs">1200000 ns</text><text x="-3.5" y="357.6" font-family="Liberation Sans,sans-serif" font-size="12.600" fill="#2cac4c" textLength="21.500" lengthAdjust="spacingAndGlyphs">0 ns</text><rect x="0" y="358.9" width="710" height="1" fill="#5a5a5a"/><rect x="542.33" y="1" width="2" height="359" fill="#ecb52c"/><rect x="542.33" y="16.3" width="2" height="14.200" fill="#2c479c"/><rect x="542.33" y="32.6" width="2" height="14.300000000000011" fill="#c2651a"/><rect x="542.33" y="233.1" width="2" height="14.199999999999989" fill="#c2651a"/><rect x="542.33" y="299.8" width="2" height="13.800000000000011" fill="#c2651a"/><rect x="542.33" y="316.7" width="2" height="13.800000000000011" fill="#c2651a"/><rect x="542.33" y="333.3" width="2" height="3.700" fill="#2c479c"/><rect x="516.8" y="360.3" width="53.500" height="14.800" fill="#000" stroke="#cfa636" stroke-width="1"/><text x="543.5" y="372.8" font-family="Liberation Sans,sans-serif" font-size="12.600" fill="#e0bc5c" text-anchor="middle" textLength="49.500" lengthAdjust="spacingAndGlyphs">1029110 ns</text></svg>
<div style="left:1.2px;top:533px;width:1241.5px;height:5px;background:#d2d2d2;"></div>
<div style="left:1.2px;top:534.2px;width:1241.5px;height:1px;background:#b4b4b4;"></div>
<div style="left:1.2px;top:538px;width:1241.5px;height:143px;background:#fff;"></div>
<svg style="left:3px;top:539px;" width="10" height="10.5" viewBox="0 0 10 10.5"><path d="M1.400 9.600V4.400C1.400 1 8.600 1 8.600 4.400v5.200L6.600 7.400H3.400z" fill="#e8e8e8" stroke="#333" stroke-width="1.100"/></svg>
<span class="t" style="left:15.20px;top:538.92px;font:8.8px/10.56px 'Liberation Sans',sans-serif;color:#222;transform:scaleX(0.9151);">Transcript</span>
<div style="left:55px;top:542.6px;width:569px;height:0.9px;background:#cfcfcf;"></div>
<div style="left:636px;top:542.6px;width:567px;height:0.9px;background:#cfcfcf;"></div>
<div style="left:55px;top:545.4px;width:569px;height:0.9px;background:#cfcfcf;"></div>
<div style="left:636px;top:545.4px;width:567px;height:0.9px;background:#cfcfcf;"></div>
<svg style="left:624.5px;top:541.5px;" width="11" height="6" viewBox="0 0 11 6"><path d="M0 1h11M0 3h11M0 5h11" stroke="#c0c0c8" stroke-width="0.900" stroke-dasharray="1.200 1"/></svg>
<div style="left:1205.5px;top:539px;width:10px;height:10px;background:#fff;box-sizing:border-box;border:1px solid #f2f2f2;border-right-color:#b8b8b8;border-bottom-color:#b8b8b8;"></div>
<svg style="left:1205.5px;top:539px;" width="10" height="10" viewBox="0 0 10 10"><path d="M5 2.200v5.600M2.200 5h5.600" stroke="#000" stroke-width="1.500"/></svg>
<div style="left:1217.3px;top:539px;width:10px;height:10px;background:#fff;box-sizing:border-box;border:1px solid #f2f2f2;border-right-color:#b8b8b8;border-bottom-color:#b8b8b8;"></div>
<svg style="left:1217.3px;top:539px;" width="10" height="10" viewBox="0 0 10 10"><rect x="2.400" y="4.600" width="3.200" height="3.200" fill="none" stroke="#222" stroke-width="0.9"/><path d="M4.600 5.600l3-3M5.400 2.400h2.400v2.400" stroke="#111" stroke-width="1" fill="none"/></svg>
<div style="left:1230px;top:539px;width:10px;height:10px;background:#fff;box-sizing:border-box;border:1px solid #f2f2f2;border-right-color:#b8b8b8;border-bottom-color:#b8b8b8;"></div>
<svg style="left:1230px;top:539px;" width="10" height="10" viewBox="0 0 10 10"><path d="M2.600 2.600l4.800 4.800M7.400 2.600l-4.800 4.800" stroke="#000" stroke-width="1.200"/></svg>
<div style="left:1.8px;top:550.2px;width:1230px;height:130.5px;background:#fff;box-sizing:border-box;border-top:1.200px solid #6e6e6e;border-left:1.400px solid #6e6e6e;border-bottom:1px solid #b0b0b0;"></div>
<div style="left:3.200px;top:551.400px;width:1228px;height:128px;overflow:hidden;">
<span class="t" style="left:1.800px;top:-1.60px;font:7.780px/9.400px 'Liberation Mono',monospace;color:#4a5cd6;"># tb_TOP.U_SDRAM : at time 2297420.0 ns NOTE : Start Internal Auto Precharge for Bank 3</span>
<span class="t" style="left:1.800px;top:8.40px;font:7.780px/9.400px 'Liberation Mono',monospace;color:#4a5cd6;"># tb_TOP.U_SDRAM : at time 2297426.0 ns READ : Bank = 3 Row = 8191, Col =  913, Dqm = 00, Data = 7800</span>
<span class="t" style="left:1.800px;top:18.40px;font:7.780px/9.400px 'Liberation Mono',monospace;color:#4a5cd6;"># tb_TOP.U_SDRAM : at time 2297580.0 ns ACT  : Bank = 3 Row = 8191</span>
<span class="t" style="left:1.800px;top:28.40px;font:7.780px/9.400px 'Liberation Mono',monospace;color:#4a5cd6;"># tb_TOP.U_SDRAM : at time 2297626.0 ns READ : Bank = 3 Row = 8191, Col =  912, Dqm = 00, Data = xxxx</span>
<span class="t" style="left:1.800px;top:38.40px;font:7.780px/9.400px 'Liberation Mono',monospace;color:#4a5cd6;"># tb_TOP.U_SDRAM : at time 2297640.0 ns NOTE : Start Internal Auto Precharge for Bank 3</span>
<span class="t" style="left:1.800px;top:48.40px;font:7.780px/9.400px 'Liberation Mono',monospace;color:#4a5cd6;"># tb_TOP.U_SDRAM : at time 2297646.0 ns READ : Bank = 3 Row = 8191, Col =  913, Dqm = 00, Data = 7800</span>
<span class="t" style="left:1.800px;top:58.40px;font:7.780px/9.400px 'Liberation Mono',monospace;color:#4a5cd6;"># tb_TOP.U_SDRAM : at time 2297740.0 ns ACT  : Bank = 3 Row = 8191</span>
<span class="t" style="left:1.800px;top:68.40px;font:7.780px/9.400px 'Liberation Mono',monospace;color:#4a5cd6;"># tb_TOP.U_SDRAM : at time 2297786.0 ns READ : Bank = 3 Row = 8191, Col =  912, Dqm = 00, Data = xxxx</span>
<span class="t" style="left:1.800px;top:78.40px;font:7.780px/9.400px 'Liberation Mono',monospace;color:#4a5cd6;"># tb_TOP.U_SDRAM : at time 2297800.0 ns NOTE : Start Internal Auto Precharge for Bank 3</span>
<span class="t" style="left:1.800px;top:88.40px;font:7.780px/9.400px 'Liberation Mono',monospace;color:#4a5cd6;"># tb_TOP.U_SDRAM : at time 2297806.0 ns READ : Bank = 3 Row = 8191, Col =  913, Dqm = 00, Data = 7800</span>
<span class="t" style="left:1.800px;top:98.40px;font:7.780px/9.400px 'Liberation Mono',monospace;color:#4a5cd6;"># tb_TOP.U_SDRAM : at time 2298140.0 ns ACT  : Bank = 3 Row = 8191</span>
</div>
<div style="left:1233.5px;top:551.5px;width:8.2px;height:128px;background:#bebebe;"></div>
<div style="left:1233.5px;top:669px;width:8.2px;height:1.8px;background:#fbfbfb;"></div>
<svg style="left:1233.5px;top:551.5px;" width="8.2" height="128" viewBox="0 0 8.2 128"><path d="M4.1 0.75L7.35 7.25L0.8499999999999996 7.25z" fill="#f4f4f4" stroke="#aaa" stroke-width="0.600"/><path d="M4.1 127.25L7.35 120.75L0.8499999999999996 120.75z" fill="#f4f4f4" stroke="#aaa" stroke-width="0.600"/></svg>
<div style="left:1.2px;top:681px;width:1241.5px;height:19.5px;background:#fff;"></div>
<div style="left:1.6px;top:683px;width:149.9px;height:16.8px;background:#fff;box-sizing:border-box;border:1px solid #e6e6e6;border-top-color:#c2c2c2;border-left-color:#c2c2c2;"></div>
<div style="left:155px;top:683px;width:941.8px;height:16.8px;background:#fff;box-sizing:border-box;border:1px solid #e6e6e6;border-top-color:#c2c2c2;border-left-color:#c2c2c2;"></div>
<div style="left:1100.3px;top:683px;width:130.29999999999995px;height:16.8px;background:#fff;box-sizing:border-box;border:1px solid #e6e6e6;border-top-color:#c2c2c2;border-left-color:#c2c2c2;"></div>
<span class="t" style="left:4.20px;top:685.00px;font:11px/13.20px 'Liberation Sans',sans-serif;color:#222;transform:scaleX(0.7686);">Now: 2,295,330 ns</span>
<span class="t" style="left:84.00px;top:685.00px;font:11px/13.20px 'Liberation Sans',sans-serif;color:#222;transform:scaleX(0.7650);">Delta: 2</span>
<span class="t" style="left:159.00px;top:685.00px;font:11px/13.20px 'Liberation Sans',sans-serif;color:#222;transform:scaleX(0.8125);">sim:/tb_TOP</span>
<span class="t" style="left:1104.80px;top:685.00px;font:11px/13.20px 'Liberation Sans',sans-serif;color:#222;transform:scaleX(0.7817);">0 ps to 1342532835 ps</span>
<svg style="left:1233px;top:690px;" width="10" height="10" viewBox="0 0 10 10"><path d="M9.500 1L1 9.500M9.500 4L4 9.500M9.500 7L7 9.500" stroke="#b8b8b8" stroke-width="0.800"/></svg>
</div></body></html>
